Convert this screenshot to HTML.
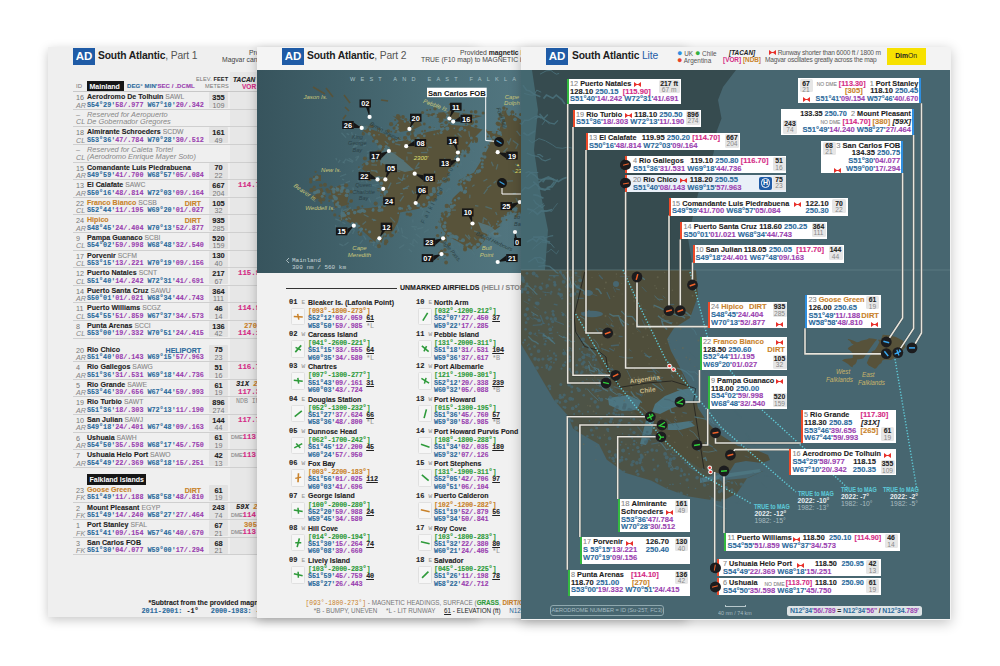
<!DOCTYPE html><html><head><meta charset="utf-8"><style>
*{margin:0;padding:0;box-sizing:border-box}
html,body{width:1000px;height:666px;overflow:hidden;background:#fff;font-family:"Liberation Sans",sans-serif;color:#1d1d1d}
.pg{position:absolute;overflow:hidden;background:#efefef}
.a{position:absolute;white-space:nowrap;line-height:1}
.m{font-family:"Liberation Mono",monospace}
.b{font-weight:bold;-webkit-text-stroke:.1px currentColor}
.cb{color:#2b6a9c}.cp{color:#9a3fb0}.cm{color:#d42a84}.co{color:#c9822a}.cg{color:#2e9a3a}.cgr{color:#8a8a8a}
.ad{position:absolute;width:22px;height:17px;background:#1f5ba6;color:#fff;font-weight:bold;font-size:11.5px;line-height:17px;text-align:center}
.ttl{position:absolute;font-size:10.3px;letter-spacing:-.15px;font-weight:bold;white-space:nowrap;line-height:1;color:#1d1d1d}
.ttl span{font-weight:normal;color:#555}
</style></head><body>
<div class="pg" style="left:48px;top:47px;width:430px;height:570px;box-shadow:0 3px 10px rgba(0,0,0,.22);background:#efefef">
<div class="a" style="left:182px;top:25px;width:60px;height:483px;background:#e7e7e7"></div>
<div class="ad" style="left:25px;top:1px">AD</div>
<div class="ttl" style="left:50px;top:3.5px">South Atlantic<span>, Part 1</span></div>
<div class="a " style="left:201.0px;top:2.5px;font-size:6.8px;color:#444">Pro</div>
<div class="a " style="left:174.0px;top:10.0px;font-size:6.8px;color:#444">Magvar cann</div>
<div class="a " style="left:28.0px;top:36.0px;font-size:6px;color:#777">ID</div>
<div class="a" style="left:39px;top:34px;width:37px;height:10px;background:#161616"></div>
<div class="a " style="left:41.5px;top:35.6px;font-size:7px;color:#fff;font-weight:bold">Mainland</div>
<div class="a b" style="left:79.0px;top:36.0px;font-size:6px;letter-spacing:.1px"><span class="cb">DEG° MIN'</span><span class="cp">SEC / .DCML</span></div>
<div class="a " style="left:148.0px;top:30.0px;font-size:5.6px;color:#777;letter-spacing:.1px">ELEV. <b style="color:#222">FEET</b></div>
<div class="a " style="left:157.0px;top:37.0px;font-size:5.6px;color:#777;letter-spacing:.1px">METERS</div>
<div class="a b" style="left:185.0px;top:30.0px;font-size:6.5px;color:#222"><i>TACAN</i> <span class="co">N</span></div>
<div class="a b cm" style="left:194.0px;top:37.0px;font-size:6.5px">VOR</div>
<div class="a" style="left:25px;top:43.5px;width:360px;height:1px;background:#c8c8c8"></div>
<div class="a" style="left:25px;top:61.7px;width:360px;height:.8px;background:#cfcfcf"></div>
<div class="a " style="left:28.0px;top:47.2px;font-size:7.2px;color:#777">16</div>
<div class="a " style="left:28.0px;top:54.5px;font-size:7.2px;color:#888;font-style:italic">AR</div>
<div class="a b" style="left:39.0px;top:47.2px;font-size:7.1px;color:#1d1d1d">Aerodromo De Tolhuin <span style="font-weight:normal;color:#888;font-size:6.8px">SAWL</span></div>
<div class="a m b" style="left:39.0px;top:54.5px;font-size:6.75px;letter-spacing:-.02px"><span class="cb">S54°29'</span><span class="cp">58/.977</span> <span class="cb">W67°10'</span><span class="cp">20/.342</span></div>
<div class="a" style="left:161px;top:45.1px;width:19px;height:16px;background:#e2e2e2;border-radius:1px"></div>
<div class="a b" style="left:-48.0px;top:46.9px;font-size:7.4px;color:#1d1d1d;left:161px;width:19px;text-align:center">355</div>
<div class="a " style="left:-48.0px;top:54.5px;font-size:7.2px;color:#777;left:161px;width:19px;text-align:center">109</div>
<div class="a" style="left:25px;top:79.3px;width:360px;height:.8px;background:#cfcfcf"></div>
<div class="a " style="left:28.0px;top:63.7px;font-size:7.2px;color:#888">–</div>
<div class="a " style="left:28.0px;top:71.4px;font-size:7.2px;color:#888;font-style:italic">CL</div>
<div class="a " style="left:39.0px;top:63.5px;font-size:7.4px;color:#888;font-style:italic">Reserved for Aeropuerto</div>
<div class="a " style="left:39.0px;top:71.2px;font-size:7.4px;color:#888;font-style:italic">De Gobernador Gregores</div>
<div class="a" style="left:25px;top:96.9px;width:360px;height:.8px;background:#cfcfcf"></div>
<div class="a " style="left:28.0px;top:82.4px;font-size:7.2px;color:#777">18</div>
<div class="a " style="left:28.0px;top:89.7px;font-size:7.2px;color:#888;font-style:italic">CL</div>
<div class="a b" style="left:39.0px;top:82.4px;font-size:7.1px;color:#1d1d1d">Almirante Schroeders <span style="font-weight:normal;color:#888;font-size:6.8px">SCDW</span></div>
<div class="a m b" style="left:39.0px;top:89.7px;font-size:6.75px;letter-spacing:-.02px"><span class="cb">S53°36'</span><span class="cp">47/.784</span> <span class="cb">W70°28'</span><span class="cp">30/.512</span></div>
<div class="a" style="left:161px;top:80.3px;width:19px;height:16px;background:#e2e2e2;border-radius:1px"></div>
<div class="a b" style="left:-48.0px;top:82.1px;font-size:7.4px;color:#1d1d1d;left:161px;width:19px;text-align:center">161</div>
<div class="a " style="left:-48.0px;top:89.7px;font-size:7.2px;color:#777;left:161px;width:19px;text-align:center">49</div>
<div class="a" style="left:25px;top:114.5px;width:360px;height:.8px;background:#cfcfcf"></div>
<div class="a " style="left:28.0px;top:98.9px;font-size:7.2px;color:#888">–</div>
<div class="a " style="left:28.0px;top:106.6px;font-size:7.2px;color:#888;font-style:italic">CL</div>
<div class="a " style="left:39.0px;top:98.7px;font-size:7.4px;color:#888;font-style:italic">Reserved for Caleta Tortel</div>
<div class="a " style="left:39.0px;top:106.4px;font-size:7.4px;color:#888;font-style:italic">(Aerodromo Enrique Mayer Soto)</div>
<div class="a" style="left:25px;top:132.1px;width:360px;height:.8px;background:#cfcfcf"></div>
<div class="a " style="left:28.0px;top:117.6px;font-size:7.2px;color:#777">15</div>
<div class="a " style="left:28.0px;top:124.9px;font-size:7.2px;color:#888;font-style:italic">AR</div>
<div class="a b" style="left:39.0px;top:117.6px;font-size:7.1px;color:#1d1d1d">Comandante Luis Piedrabuena</div>
<div class="a m b" style="left:39.0px;top:124.9px;font-size:6.75px;letter-spacing:-.02px"><span class="cb">S49°59'</span><span class="cp">41/.700</span> <span class="cb">W68°57'</span><span class="cp">05/.084</span></div>
<div class="a" style="left:161px;top:115.5px;width:19px;height:16px;background:#e2e2e2;border-radius:1px"></div>
<div class="a b" style="left:-48.0px;top:117.3px;font-size:7.4px;color:#1d1d1d;left:161px;width:19px;text-align:center">70</div>
<div class="a " style="left:-48.0px;top:124.9px;font-size:7.2px;color:#777;left:161px;width:19px;text-align:center">22</div>
<div class="a" style="left:25px;top:149.7px;width:360px;height:.8px;background:#cfcfcf"></div>
<div class="a " style="left:28.0px;top:135.2px;font-size:7.2px;color:#777">13</div>
<div class="a " style="left:28.0px;top:142.5px;font-size:7.2px;color:#888;font-style:italic">AR</div>
<div class="a b" style="left:39.0px;top:135.2px;font-size:7.1px;color:#1d1d1d">El Calafate <span style="font-weight:normal;color:#888;font-size:6.8px">SAWC</span></div>
<div class="a m b" style="left:39.0px;top:142.5px;font-size:6.75px;letter-spacing:-.02px"><span class="cb">S50°16'</span><span class="cp">48/.814</span> <span class="cb">W72°03'</span><span class="cp">09/.164</span></div>
<div class="a" style="left:161px;top:133.1px;width:19px;height:16px;background:#e2e2e2;border-radius:1px"></div>
<div class="a b" style="left:-48.0px;top:134.9px;font-size:7.4px;color:#1d1d1d;left:161px;width:19px;text-align:center">667</div>
<div class="a " style="left:-48.0px;top:142.5px;font-size:7.2px;color:#777;left:161px;width:19px;text-align:center">204</div>
<div class="a b m cm" style="left:190.0px;top:134.8px;font-size:7.4px">114.7</div>
<div class="a" style="left:25px;top:167.3px;width:360px;height:.8px;background:#cfcfcf"></div>
<div class="a " style="left:28.0px;top:152.8px;font-size:7.2px;color:#777">22</div>
<div class="a " style="left:28.0px;top:160.1px;font-size:7.2px;color:#888;font-style:italic">CL</div>
<div class="a b" style="left:39.0px;top:152.8px;font-size:7.1px;color:#c8822a">Franco Bianco <span style="font-weight:normal;color:#888;font-size:6.8px">SCSB</span></div>
<div class="a b" style="left:-48.0px;top:152.8px;font-size:7px;color:#c8822a;left:auto;right:277.0px">DIRT</div>
<div class="a m b" style="left:39.0px;top:160.1px;font-size:6.75px;letter-spacing:-.02px"><span class="cb">S52°44'</span><span class="cp">11/.195</span> <span class="cb">W69°20'</span><span class="cp">01/.027</span></div>
<div class="a" style="left:161px;top:150.7px;width:19px;height:16px;background:#e2e2e2;border-radius:1px"></div>
<div class="a b" style="left:-48.0px;top:152.5px;font-size:7.4px;color:#1d1d1d;left:161px;width:19px;text-align:center">105</div>
<div class="a " style="left:-48.0px;top:160.1px;font-size:7.2px;color:#777;left:161px;width:19px;text-align:center">32</div>
<div class="a" style="left:25px;top:184.9px;width:360px;height:.8px;background:#cfcfcf"></div>
<div class="a " style="left:28.0px;top:170.4px;font-size:7.2px;color:#777">24</div>
<div class="a " style="left:28.0px;top:177.7px;font-size:7.2px;color:#888;font-style:italic">AR</div>
<div class="a b" style="left:39.0px;top:170.4px;font-size:7.1px;color:#c8822a">Hipico</div>
<div class="a b" style="left:-48.0px;top:170.4px;font-size:7px;color:#c8822a;left:auto;right:277.0px">DIRT</div>
<div class="a m b" style="left:39.0px;top:177.7px;font-size:6.75px;letter-spacing:-.02px"><span class="cb">S48°45'</span><span class="cp">24/.404</span> <span class="cb">W70°13'</span><span class="cp">52/.877</span></div>
<div class="a" style="left:161px;top:168.3px;width:19px;height:16px;background:#e2e2e2;border-radius:1px"></div>
<div class="a b" style="left:-48.0px;top:170.1px;font-size:7.4px;color:#1d1d1d;left:161px;width:19px;text-align:center">935</div>
<div class="a " style="left:-48.0px;top:177.7px;font-size:7.2px;color:#777;left:161px;width:19px;text-align:center">285</div>
<div class="a" style="left:25px;top:202.5px;width:360px;height:.8px;background:#cfcfcf"></div>
<div class="a " style="left:28.0px;top:188.0px;font-size:7.2px;color:#777">9</div>
<div class="a " style="left:28.0px;top:195.3px;font-size:7.2px;color:#888;font-style:italic">CL</div>
<div class="a b" style="left:39.0px;top:188.0px;font-size:7.1px;color:#1d1d1d">Pampa Guanaco <span style="font-weight:normal;color:#888;font-size:6.8px">SCBI</span></div>
<div class="a m b" style="left:39.0px;top:195.3px;font-size:6.75px;letter-spacing:-.02px"><span class="cb">S54°02'</span><span class="cp">59/.998</span> <span class="cb">W68°48'</span><span class="cp">32/.540</span></div>
<div class="a" style="left:161px;top:185.9px;width:19px;height:16px;background:#e2e2e2;border-radius:1px"></div>
<div class="a b" style="left:-48.0px;top:187.7px;font-size:7.4px;color:#1d1d1d;left:161px;width:19px;text-align:center">520</div>
<div class="a " style="left:-48.0px;top:195.3px;font-size:7.2px;color:#777;left:161px;width:19px;text-align:center">159</div>
<div class="a" style="left:25px;top:220.1px;width:360px;height:.8px;background:#cfcfcf"></div>
<div class="a " style="left:28.0px;top:205.6px;font-size:7.2px;color:#777">17</div>
<div class="a " style="left:28.0px;top:212.9px;font-size:7.2px;color:#888;font-style:italic">CL</div>
<div class="a b" style="left:39.0px;top:205.6px;font-size:7.1px;color:#1d1d1d">Porvenir <span style="font-weight:normal;color:#888;font-size:6.8px">SCFM</span></div>
<div class="a m b" style="left:39.0px;top:212.9px;font-size:6.75px;letter-spacing:-.02px"><span class="cb">S53°15'</span><span class="cp">13/.221</span> <span class="cb">W70°19'</span><span class="cp">09/.156</span></div>
<div class="a" style="left:161px;top:203.5px;width:19px;height:16px;background:#e2e2e2;border-radius:1px"></div>
<div class="a b" style="left:-48.0px;top:205.3px;font-size:7.4px;color:#1d1d1d;left:161px;width:19px;text-align:center">130</div>
<div class="a " style="left:-48.0px;top:212.9px;font-size:7.2px;color:#777;left:161px;width:19px;text-align:center">40</div>
<div class="a" style="left:25px;top:237.7px;width:360px;height:.8px;background:#cfcfcf"></div>
<div class="a " style="left:28.0px;top:223.2px;font-size:7.2px;color:#777">12</div>
<div class="a " style="left:28.0px;top:230.5px;font-size:7.2px;color:#888;font-style:italic">CL</div>
<div class="a b" style="left:39.0px;top:223.2px;font-size:7.1px;color:#1d1d1d">Puerto Natales <span style="font-weight:normal;color:#888;font-size:6.8px">SCNT</span></div>
<div class="a m b" style="left:39.0px;top:230.5px;font-size:6.75px;letter-spacing:-.02px"><span class="cb">S51°40'</span><span class="cp">14/.242</span> <span class="cb">W72°31'</span><span class="cp">41/.691</span></div>
<div class="a" style="left:161px;top:221.1px;width:19px;height:16px;background:#e2e2e2;border-radius:1px"></div>
<div class="a b" style="left:-48.0px;top:222.9px;font-size:7.4px;color:#1d1d1d;left:161px;width:19px;text-align:center">217</div>
<div class="a " style="left:-48.0px;top:230.5px;font-size:7.2px;color:#777;left:161px;width:19px;text-align:center">67</div>
<div class="a b m cm" style="left:190.0px;top:222.8px;font-size:7.4px">115.9</div>
<div class="a" style="left:25px;top:255.3px;width:360px;height:.8px;background:#cfcfcf"></div>
<div class="a " style="left:28.0px;top:240.8px;font-size:7.2px;color:#777">14</div>
<div class="a " style="left:28.0px;top:248.1px;font-size:7.2px;color:#888;font-style:italic">AR</div>
<div class="a b" style="left:39.0px;top:240.8px;font-size:7.1px;color:#1d1d1d">Puerto Santa Cruz <span style="font-weight:normal;color:#888;font-size:6.8px">SAWU</span></div>
<div class="a m b" style="left:39.0px;top:248.1px;font-size:6.75px;letter-spacing:-.02px"><span class="cb">S50°01'</span><span class="cp">01/.021</span> <span class="cb">W68°34'</span><span class="cp">44/.743</span></div>
<div class="a" style="left:161px;top:238.7px;width:19px;height:16px;background:#e2e2e2;border-radius:1px"></div>
<div class="a b" style="left:-48.0px;top:240.5px;font-size:7.4px;color:#1d1d1d;left:161px;width:19px;text-align:center">364</div>
<div class="a " style="left:-48.0px;top:248.1px;font-size:7.2px;color:#777;left:161px;width:19px;text-align:center">111</div>
<div class="a" style="left:25px;top:272.9px;width:360px;height:.8px;background:#cfcfcf"></div>
<div class="a " style="left:28.0px;top:258.4px;font-size:7.2px;color:#777">11</div>
<div class="a " style="left:28.0px;top:265.7px;font-size:7.2px;color:#888;font-style:italic">CL</div>
<div class="a b" style="left:39.0px;top:258.4px;font-size:7.1px;color:#1d1d1d">Puerto Williams <span style="font-weight:normal;color:#888;font-size:6.8px">SCGZ</span></div>
<div class="a m b" style="left:39.0px;top:265.7px;font-size:6.75px;letter-spacing:-.02px"><span class="cb">S54°55'</span><span class="cp">51/.859</span> <span class="cb">W67°37'</span><span class="cp">34/.573</span></div>
<div class="a" style="left:161px;top:256.3px;width:19px;height:16px;background:#e2e2e2;border-radius:1px"></div>
<div class="a b" style="left:-48.0px;top:258.1px;font-size:7.4px;color:#1d1d1d;left:161px;width:19px;text-align:center">46</div>
<div class="a " style="left:-48.0px;top:265.7px;font-size:7.2px;color:#777;left:161px;width:19px;text-align:center">14</div>
<div class="a b m cm" style="left:190.0px;top:258.0px;font-size:7.4px">114.9</div>
<div class="a" style="left:25px;top:290.5px;width:360px;height:.8px;background:#cfcfcf"></div>
<div class="a " style="left:28.0px;top:276.0px;font-size:7.2px;color:#777">8</div>
<div class="a " style="left:28.0px;top:283.3px;font-size:7.2px;color:#888;font-style:italic">CL</div>
<div class="a b" style="left:39.0px;top:276.0px;font-size:7.1px;color:#1d1d1d">Punta Arenas <span style="font-weight:normal;color:#888;font-size:6.8px">SCCI</span></div>
<div class="a m b" style="left:39.0px;top:283.3px;font-size:6.75px;letter-spacing:-.02px"><span class="cb">S53°00'</span><span class="cp">19/.332</span> <span class="cb">W70°51'</span><span class="cp">24/.415</span></div>
<div class="a" style="left:161px;top:273.9px;width:19px;height:16px;background:#e2e2e2;border-radius:1px"></div>
<div class="a b" style="left:-48.0px;top:275.7px;font-size:7.4px;color:#1d1d1d;left:161px;width:19px;text-align:center">136</div>
<div class="a " style="left:-48.0px;top:283.3px;font-size:7.2px;color:#777;left:161px;width:19px;text-align:center">42</div>
<div class="a b m co" style="left:196.0px;top:275.6px;font-size:7.2px">270</div>
<div class="a b m cm" style="left:190.0px;top:283.0px;font-size:7.4px">114.1</div>
<div class="a" style="left:25px;top:314.1px;width:360px;height:.8px;background:#cfcfcf"></div>
<div class="a " style="left:28.0px;top:299.6px;font-size:7.2px;color:#777">20</div>
<div class="a " style="left:28.0px;top:306.9px;font-size:7.2px;color:#888;font-style:italic">AR</div>
<div class="a b" style="left:39.0px;top:299.6px;font-size:7.1px;color:#1d1d1d">Rio Chico</div>
<div class="a b" style="left:-48.0px;top:299.6px;font-size:7px;color:#2b6a9c;left:auto;right:277.0px">HELIPORT</div>
<div class="a m b" style="left:39.0px;top:306.9px;font-size:6.75px;letter-spacing:-.02px"><span class="cb">S51°40'</span><span class="cp">08/.143</span> <span class="cb">W69°15'</span><span class="cp">57/.963</span></div>
<div class="a" style="left:161px;top:297.5px;width:19px;height:16px;background:#e2e2e2;border-radius:1px"></div>
<div class="a b" style="left:-48.0px;top:299.3px;font-size:7.4px;color:#1d1d1d;left:161px;width:19px;text-align:center">75</div>
<div class="a " style="left:-48.0px;top:306.9px;font-size:7.2px;color:#777;left:161px;width:19px;text-align:center">23</div>
<div class="a" style="left:25px;top:331.7px;width:360px;height:.8px;background:#cfcfcf"></div>
<div class="a " style="left:28.0px;top:317.2px;font-size:7.2px;color:#777">4</div>
<div class="a " style="left:28.0px;top:324.5px;font-size:7.2px;color:#888;font-style:italic">AR</div>
<div class="a b" style="left:39.0px;top:317.2px;font-size:7.1px;color:#1d1d1d">Rio Gallegos <span style="font-weight:normal;color:#888;font-size:6.8px">SAWG</span></div>
<div class="a m b" style="left:39.0px;top:324.5px;font-size:6.75px;letter-spacing:-.02px"><span class="cb">S51°36'</span><span class="cp">31/.531</span> <span class="cb">W69°18'</span><span class="cp">44/.736</span></div>
<div class="a" style="left:161px;top:315.1px;width:19px;height:16px;background:#e2e2e2;border-radius:1px"></div>
<div class="a b" style="left:-48.0px;top:316.9px;font-size:7.4px;color:#1d1d1d;left:161px;width:19px;text-align:center">51</div>
<div class="a " style="left:-48.0px;top:324.5px;font-size:7.2px;color:#777;left:161px;width:19px;text-align:center">16</div>
<div class="a b m cm" style="left:190.0px;top:316.8px;font-size:7.4px">116.7</div>
<div class="a" style="left:25px;top:349.3px;width:360px;height:.8px;background:#cfcfcf"></div>
<div class="a " style="left:28.0px;top:334.8px;font-size:7.2px;color:#777">5</div>
<div class="a " style="left:28.0px;top:342.1px;font-size:7.2px;color:#888;font-style:italic">AR</div>
<div class="a b" style="left:39.0px;top:334.8px;font-size:7.1px;color:#1d1d1d">Rio Grande <span style="font-weight:normal;color:#888;font-size:6.8px">SAWE</span></div>
<div class="a m b" style="left:39.0px;top:342.1px;font-size:6.75px;letter-spacing:-.02px"><span class="cb">S53°46'</span><span class="cp">39/.656</span> <span class="cb">W67°44'</span><span class="cp">59/.993</span></div>
<div class="a" style="left:161px;top:332.7px;width:19px;height:16px;background:#e2e2e2;border-radius:1px"></div>
<div class="a b" style="left:-48.0px;top:334.5px;font-size:7.4px;color:#1d1d1d;left:161px;width:19px;text-align:center">61</div>
<div class="a " style="left:-48.0px;top:342.1px;font-size:7.2px;color:#777;left:161px;width:19px;text-align:center">19</div>
<div class="a b m" style="left:188.0px;top:334.4px;font-size:7.2px;font-style:italic;color:#222">31X <span class="co">2</span></div>
<div class="a b m cm" style="left:190.0px;top:341.8px;font-size:7.4px">117.3</div>
<div class="a" style="left:25px;top:366.9px;width:360px;height:.8px;background:#cfcfcf"></div>
<div class="a " style="left:28.0px;top:352.4px;font-size:7.2px;color:#777">19</div>
<div class="a " style="left:28.0px;top:359.7px;font-size:7.2px;color:#888;font-style:italic">AR</div>
<div class="a b" style="left:39.0px;top:352.4px;font-size:7.1px;color:#1d1d1d">Rio Turbio <span style="font-weight:normal;color:#888;font-size:6.8px">SAWT</span></div>
<div class="a m b" style="left:39.0px;top:359.7px;font-size:6.75px;letter-spacing:-.02px"><span class="cb">S51°36'</span><span class="cp">18/.303</span> <span class="cb">W72°13'</span><span class="cp">11/.190</span></div>
<div class="a" style="left:161px;top:350.3px;width:19px;height:16px;background:#e2e2e2;border-radius:1px"></div>
<div class="a b" style="left:-48.0px;top:352.1px;font-size:7.4px;color:#1d1d1d;left:161px;width:19px;text-align:center">896</div>
<div class="a " style="left:-48.0px;top:359.7px;font-size:7.2px;color:#777;left:161px;width:19px;text-align:center">274</div>
<div class="a m" style="left:188.0px;top:352.0px;font-size:6.6px;color:#888">NDB IN</div>
<div class="a" style="left:25px;top:384.5px;width:360px;height:.8px;background:#cfcfcf"></div>
<div class="a " style="left:28.0px;top:370.0px;font-size:7.2px;color:#777">10</div>
<div class="a " style="left:28.0px;top:377.3px;font-size:7.2px;color:#888;font-style:italic">AR</div>
<div class="a b" style="left:39.0px;top:370.0px;font-size:7.1px;color:#1d1d1d">San Julian <span style="font-weight:normal;color:#888;font-size:6.8px">SAWJ</span></div>
<div class="a m b" style="left:39.0px;top:377.3px;font-size:6.75px;letter-spacing:-.02px"><span class="cb">S49°18'</span><span class="cp">24/.401</span> <span class="cb">W67°48'</span><span class="cp">09/.163</span></div>
<div class="a" style="left:161px;top:367.9px;width:19px;height:16px;background:#e2e2e2;border-radius:1px"></div>
<div class="a b" style="left:-48.0px;top:369.7px;font-size:7.4px;color:#1d1d1d;left:161px;width:19px;text-align:center">144</div>
<div class="a " style="left:-48.0px;top:377.3px;font-size:7.2px;color:#777;left:161px;width:19px;text-align:center">44</div>
<div class="a b m cm" style="left:190.0px;top:369.6px;font-size:7.4px">117.7</div>
<div class="a" style="left:25px;top:402.1px;width:360px;height:.8px;background:#cfcfcf"></div>
<div class="a " style="left:28.0px;top:387.6px;font-size:7.2px;color:#777">6</div>
<div class="a " style="left:28.0px;top:394.9px;font-size:7.2px;color:#888;font-style:italic">AR</div>
<div class="a b" style="left:39.0px;top:387.6px;font-size:7.1px;color:#1d1d1d">Ushuaia <span style="font-weight:normal;color:#888;font-size:6.8px">SAWH</span></div>
<div class="a m b" style="left:39.0px;top:394.9px;font-size:6.75px;letter-spacing:-.02px"><span class="cb">S54°50'</span><span class="cp">35/.598</span> <span class="cb">W68°17'</span><span class="cp">45/.750</span></div>
<div class="a" style="left:161px;top:385.5px;width:19px;height:16px;background:#e2e2e2;border-radius:1px"></div>
<div class="a b" style="left:-48.0px;top:387.3px;font-size:7.4px;color:#1d1d1d;left:161px;width:19px;text-align:center">61</div>
<div class="a " style="left:-48.0px;top:394.9px;font-size:7.2px;color:#777;left:161px;width:19px;text-align:center">19</div>
<div class="a b m" style="left:183.0px;top:387.2px;font-size:7.4px"><span style="color:#888;font-size:5.2px;font-weight:normal;font-family:Liberation Sans">DME</span><span class="cm">113</span></div>
<div class="a" style="left:25px;top:419.7px;width:360px;height:.8px;background:#cfcfcf"></div>
<div class="a " style="left:28.0px;top:405.2px;font-size:7.2px;color:#777">7</div>
<div class="a " style="left:28.0px;top:412.5px;font-size:7.2px;color:#888;font-style:italic">AR</div>
<div class="a b" style="left:39.0px;top:405.2px;font-size:7.1px;color:#1d1d1d">Ushuaia Helo Port <span style="font-weight:normal;color:#888;font-size:6.8px">SAWO</span></div>
<div class="a m b" style="left:39.0px;top:412.5px;font-size:6.75px;letter-spacing:-.02px"><span class="cb">S54°49'</span><span class="cp">22/.369</span> <span class="cb">W68°18'</span><span class="cp">15/.251</span></div>
<div class="a" style="left:161px;top:403.1px;width:19px;height:16px;background:#e2e2e2;border-radius:1px"></div>
<div class="a b" style="left:-48.0px;top:404.9px;font-size:7.4px;color:#1d1d1d;left:161px;width:19px;text-align:center">42</div>
<div class="a " style="left:-48.0px;top:412.5px;font-size:7.2px;color:#777;left:161px;width:19px;text-align:center">13</div>
<div class="a b m" style="left:183.0px;top:404.8px;font-size:7.4px"><span style="color:#888;font-size:5.2px;font-weight:normal;font-family:Liberation Sans">DME</span><span class="cm">113</span></div>
<div class="a" style="left:25px;top:454.5px;width:360px;height:.8px;background:#cfcfcf"></div>
<div class="a " style="left:28.0px;top:440.0px;font-size:7.2px;color:#777">23</div>
<div class="a " style="left:28.0px;top:447.3px;font-size:7.2px;color:#888;font-style:italic">FK</div>
<div class="a b" style="left:39.0px;top:440.0px;font-size:7.1px;color:#c8822a">Goose Green</div>
<div class="a b" style="left:-48.0px;top:440.0px;font-size:7px;color:#c8822a;left:auto;right:277.0px">DIRT</div>
<div class="a m b" style="left:39.0px;top:447.3px;font-size:6.75px;letter-spacing:-.02px"><span class="cb">S51°49'</span><span class="cp">11/.188</span> <span class="cb">W58°58'</span><span class="cp">48/.810</span></div>
<div class="a" style="left:161px;top:437.9px;width:19px;height:16px;background:#e2e2e2;border-radius:1px"></div>
<div class="a b" style="left:-48.0px;top:439.7px;font-size:7.4px;color:#1d1d1d;left:161px;width:19px;text-align:center">61</div>
<div class="a " style="left:-48.0px;top:447.3px;font-size:7.2px;color:#777;left:161px;width:19px;text-align:center">19</div>
<div class="a" style="left:25px;top:472.1px;width:360px;height:.8px;background:#cfcfcf"></div>
<div class="a " style="left:28.0px;top:457.6px;font-size:7.2px;color:#777">2</div>
<div class="a " style="left:28.0px;top:464.9px;font-size:7.2px;color:#888;font-style:italic">FK</div>
<div class="a b" style="left:39.0px;top:457.6px;font-size:7.1px;color:#1d1d1d">Mount Pleasant <span style="font-weight:normal;color:#888;font-size:6.8px">EGYP</span></div>
<div class="a m b" style="left:39.0px;top:464.9px;font-size:6.75px;letter-spacing:-.02px"><span class="cb">S51°49'</span><span class="cp">14/.240</span> <span class="cb">W58°27'</span><span class="cp">27/.464</span></div>
<div class="a" style="left:161px;top:455.5px;width:19px;height:16px;background:#e2e2e2;border-radius:1px"></div>
<div class="a b" style="left:-48.0px;top:457.3px;font-size:7.4px;color:#1d1d1d;left:161px;width:19px;text-align:center">243</div>
<div class="a " style="left:-48.0px;top:464.9px;font-size:7.2px;color:#777;left:161px;width:19px;text-align:center">74</div>
<div class="a b m" style="left:188.0px;top:457.2px;font-size:7.2px;font-style:italic;color:#222">59X <span class="co">2</span></div>
<div class="a b m" style="left:183.0px;top:464.6px;font-size:7.4px"><span style="color:#888;font-size:5.2px;font-weight:normal;font-family:Liberation Sans">DME</span><span class="cm">114</span></div>
<div class="a" style="left:25px;top:489.7px;width:360px;height:.8px;background:#cfcfcf"></div>
<div class="a " style="left:28.0px;top:475.2px;font-size:7.2px;color:#777">1</div>
<div class="a " style="left:28.0px;top:482.5px;font-size:7.2px;color:#888;font-style:italic">FK</div>
<div class="a b" style="left:39.0px;top:475.2px;font-size:7.1px;color:#1d1d1d">Port Stanley <span style="font-weight:normal;color:#888;font-size:6.8px">SFAL</span></div>
<div class="a m b" style="left:39.0px;top:482.5px;font-size:6.75px;letter-spacing:-.02px"><span class="cb">S51°41'</span><span class="cp">09/.154</span> <span class="cb">W57°46'</span><span class="cp">40/.670</span></div>
<div class="a" style="left:161px;top:473.1px;width:19px;height:16px;background:#e2e2e2;border-radius:1px"></div>
<div class="a b" style="left:-48.0px;top:474.9px;font-size:7.4px;color:#1d1d1d;left:161px;width:19px;text-align:center">67</div>
<div class="a " style="left:-48.0px;top:482.5px;font-size:7.2px;color:#777;left:161px;width:19px;text-align:center">21</div>
<div class="a b m co" style="left:196.0px;top:474.8px;font-size:7.2px">305</div>
<div class="a b m" style="left:183.0px;top:482.2px;font-size:7.4px"><span style="color:#888;font-size:5.2px;font-weight:normal;font-family:Liberation Sans">DME</span><span class="cm">113</span></div>
<div class="a" style="left:25px;top:507.3px;width:360px;height:.8px;background:#cfcfcf"></div>
<div class="a " style="left:28.0px;top:492.8px;font-size:7.2px;color:#777">3</div>
<div class="a " style="left:28.0px;top:500.1px;font-size:7.2px;color:#888;font-style:italic">FK</div>
<div class="a b" style="left:39.0px;top:492.8px;font-size:7.1px;color:#1d1d1d">San Carlos FOB</div>
<div class="a m b" style="left:39.0px;top:500.1px;font-size:6.75px;letter-spacing:-.02px"><span class="cb">S51°30'</span><span class="cp">04/.077</span> <span class="cb">W59°00'</span><span class="cp">17/.294</span></div>
<div class="a" style="left:161px;top:490.7px;width:19px;height:16px;background:#e2e2e2;border-radius:1px"></div>
<div class="a b" style="left:-48.0px;top:492.5px;font-size:7.4px;color:#1d1d1d;left:161px;width:19px;text-align:center">68</div>
<div class="a " style="left:-48.0px;top:500.1px;font-size:7.2px;color:#777;left:161px;width:19px;text-align:center">21</div>
<div class="a" style="left:39px;top:427px;width:59px;height:10.5px;background:#161616"></div>
<div class="a " style="left:41.5px;top:428.8px;font-size:7px;color:#fff;font-weight:bold">Falkland Islands</div>
<div class="a b" style="left:100.5px;top:552.6px;font-size:6.8px;color:#222">*Subtract from the provided magnetic headings</div>
<div class="a m b" style="left:93.5px;top:560.8px;font-size:6.8px;color:#222"><span class="cb">2011-2001:</span> -1°&nbsp;&nbsp;&nbsp;<span class="cb">2000-1983:</span> -2°</div>
</div>
<div class="pg" style="left:257px;top:47px;width:430px;height:571px;box-shadow:0 3px 10px rgba(0,0,0,.25);background:#f1f1f1">
<div class="a" style="left:0;top:0;width:430px;height:23px;background:#f4f4f4"></div>
<div class="ad" style="left:25px;top:1px">AD</div>
<div class="ttl" style="left:50px;top:3.5px">South Atlantic<span>, Part 2</span></div>
<div class="a " style="left:203.0px;top:2.7px;font-size:6.8px;color:#444">Provided <b style="color:#1d1d1d">magnetic headings</b></div>
<div class="a " style="left:164.0px;top:10.0px;font-size:6.8px;color:#444">TRUE (F10 map) to MAGNETIC in 2022</div>
<svg class="a" style="left:0;top:23px" width="430" height="203" viewBox="0 0 430 203">
<defs><linearGradient id="g2" x1="0" x2="1" y1="0" y2="0"><stop offset="0" stop-color="#37545d"/><stop offset="0.4" stop-color="#4a6d76"/><stop offset="0.62" stop-color="#527680"/><stop offset="1" stop-color="#5b828b"/></linearGradient></defs>
<rect width="430" height="203" fill="url(#g2)"/>
<polygon points="104.6,58.4 107.0,57.3 117.7,60.5 129.0,64.7 142.0,71.0 150.0,70.0 159.8,64.7 172.4,61.5 183.0,59.4 192.0,54.7 212.0,56.3 225.5,59.6 215.6,69.5 204.0,86.0 197.0,96.0 189.0,109.0 185.0,113.0 179.0,124.0 169.5,137.0 158.0,139.6 143.0,142.4 141.0,152.0 136.0,161.0 127.0,166.4 123.8,174.0 117.0,171.0 105.7,161.0 92.5,152.7 81.0,146.0 88.0,142.0 92.5,139.5 112.0,138.0 125.0,136.0 126.0,126.0 122.0,112.0 115.0,106.0 105.0,99.0 108.0,93.0 118.0,87.0 129.0,80.0 121.0,76.0 114.5,65.7 107.0,61.5" fill="#58533a"/>
<polygon points="228.8,61.0 242.0,61.0 248.6,39.8 264.0,49.7 283.0,49.0 283.0,144.0 264.0,144.0 257.0,142.4 247.0,146.7 243.0,156.5 233.0,163.6 221.7,177.7 216.0,180.5 199.0,170.6 190.7,166.4 183.6,156.5 186.5,148.0 196.0,128.0 206.0,118.5 202.0,110.0 217.0,102.5 227.0,86.0 235.4,69.5" fill="#58533a"/>
<polygon points="168.0,44.0 193.0,41.5 225.0,46.0 213.0,49.5 183.0,48.5" fill="#58533a"/>
<polygon points="135.6,45.8 148.0,51.0 163.0,52.0 165.0,55.2 156.6,59.4 146.0,61.5 138.7,62.6 137.7,56.3 141.9,51.0" fill="#58533a"/>
<polygon points="73.0,120.0 83.0,115.0 92.0,122.0 90.0,135.0 78.0,138.0" fill="#58533a"/>
<polygon points="56.0,106.0 64.0,105.0 64.0,111.0 57.0,111.0" fill="#58533a"/>
<polygon points="56.0,120.0 65.0,118.0 69.0,127.0 61.0,129.0" fill="#58533a"/>
<polygon points="184.0,162.0 189.0,163.0 190.0,172.0 187.0,177.0 185.0,170.0" fill="#58533a"/>
<polygon points="186.0,182.0 190.0,184.0 188.0,189.0 185.0,187.0" fill="#58533a"/>
<polygon points="129.0,80.0 138.0,84.0 148.0,92.0 157.0,100.0 148.0,102.0 135.0,98.0 123.0,92.0" fill="#567b84" opacity=".8"/>
<polygon points="221.0,152.0 233.0,156.0 245.0,166.0 239.0,168.0 225.0,162.0" fill="#567b84" opacity=".8"/>
<line x1="56" y1="17" x2="68" y2="24" stroke="#58533a" stroke-width="1.6"/>
<line x1="69" y1="18" x2="76" y2="27" stroke="#58533a" stroke-width="1.6"/>
<line x1="87" y1="25" x2="93" y2="33" stroke="#58533a" stroke-width="1.6"/>
<line x1="88" y1="37" x2="92" y2="41" stroke="#58533a" stroke-width="1.6"/>
<line x1="89" y1="45" x2="86" y2="49" stroke="#58533a" stroke-width="1.6"/>
<line x1="124" y1="30" x2="131" y2="31" stroke="#58533a" stroke-width="1.6"/>
<line x1="192" y1="34" x2="198" y2="36" stroke="#58533a" stroke-width="1.6"/>
<circle cx="242.1" cy="48.7" r="1.5" fill="#58533a" opacity=".9"/>
<circle cx="212.2" cy="56.3" r="1.9" fill="#58533a" opacity=".9"/>
<circle cx="112.8" cy="109.4" r="1.8" fill="#58533a" opacity=".9"/>
<circle cx="123.9" cy="125.5" r="0.8" fill="#58533a" opacity=".9"/>
<circle cx="113.0" cy="59.3" r="0.9" fill="#4f727b" opacity=".9"/>
<circle cx="204.4" cy="58.4" r="1.9" fill="#4f727b" opacity=".9"/>
<circle cx="183.7" cy="148.9" r="0.8" fill="#58533a" opacity=".9"/>
<circle cx="91.4" cy="143.2" r="1.7" fill="#4f727b" opacity=".9"/>
<circle cx="147.2" cy="67.3" r="0.9" fill="#58533a" opacity=".9"/>
<circle cx="113.1" cy="60.0" r="1.1" fill="#4f727b" opacity=".9"/>
<circle cx="178.6" cy="45.6" r="1.6" fill="#4f727b" opacity=".9"/>
<circle cx="66.8" cy="123.4" r="1.7" fill="#4f727b" opacity=".9"/>
<circle cx="215.8" cy="70.5" r="1.2" fill="#58533a" opacity=".9"/>
<circle cx="207.3" cy="49.5" r="1.9" fill="#58533a" opacity=".9"/>
<circle cx="76.9" cy="126.7" r="1.9" fill="#4f727b" opacity=".9"/>
<circle cx="198.0" cy="38.1" r="2.0" fill="#58533a" opacity=".9"/>
<circle cx="185.7" cy="187.1" r="1.8" fill="#4f727b" opacity=".9"/>
<circle cx="76.1" cy="130.8" r="1.4" fill="#4f727b" opacity=".9"/>
<circle cx="99.2" cy="153.8" r="1.5" fill="#4f727b" opacity=".9"/>
<circle cx="253.4" cy="142.4" r="1.1" fill="#4f727b" opacity=".9"/>
<circle cx="258.0" cy="139.7" r="1.9" fill="#4f727b" opacity=".9"/>
<circle cx="220.8" cy="101.5" r="2.0" fill="#4f727b" opacity=".9"/>
<circle cx="174.0" cy="124.6" r="1.8" fill="#4f727b" opacity=".9"/>
<circle cx="145.9" cy="46.5" r="1.0" fill="#58533a" opacity=".9"/>
<circle cx="107.3" cy="141.3" r="1.8" fill="#4f727b" opacity=".9"/>
<circle cx="123.5" cy="81.5" r="1.5" fill="#58533a" opacity=".9"/>
<circle cx="249.8" cy="38.9" r="1.1" fill="#58533a" opacity=".9"/>
<circle cx="232.3" cy="65.4" r="0.8" fill="#4f727b" opacity=".9"/>
<circle cx="111.0" cy="104.1" r="2.0" fill="#58533a" opacity=".9"/>
<circle cx="197.8" cy="37.9" r="1.1" fill="#58533a" opacity=".9"/>
<circle cx="102.2" cy="164.0" r="1.3" fill="#58533a" opacity=".9"/>
<circle cx="101.0" cy="141.5" r="1.2" fill="#4f727b" opacity=".9"/>
<circle cx="203.6" cy="45.7" r="1.5" fill="#4f727b" opacity=".9"/>
<circle cx="129.8" cy="65.6" r="1.2" fill="#4f727b" opacity=".9"/>
<circle cx="241.9" cy="62.9" r="1.9" fill="#4f727b" opacity=".9"/>
<circle cx="89.1" cy="115.3" r="2.1" fill="#58533a" opacity=".9"/>
<circle cx="201.1" cy="91.7" r="2.0" fill="#58533a" opacity=".9"/>
<circle cx="80.0" cy="134.4" r="1.9" fill="#4f727b" opacity=".9"/>
<circle cx="181.1" cy="189.2" r="0.9" fill="#58533a" opacity=".9"/>
<circle cx="95.6" cy="139.9" r="0.9" fill="#4f727b" opacity=".9"/>
<circle cx="254.0" cy="143.4" r="1.5" fill="#4f727b" opacity=".9"/>
<circle cx="109.7" cy="57.5" r="2.1" fill="#58533a" opacity=".9"/>
<circle cx="103.9" cy="159.3" r="1.8" fill="#4f727b" opacity=".9"/>
<circle cx="128.9" cy="133.8" r="1.1" fill="#4f727b" opacity=".9"/>
<circle cx="241.3" cy="59.2" r="1.0" fill="#58533a" opacity=".9"/>
<circle cx="206.5" cy="122.6" r="0.8" fill="#4f727b" opacity=".9"/>
<circle cx="209.7" cy="72.7" r="1.2" fill="#4f727b" opacity=".9"/>
<circle cx="186.8" cy="58.8" r="1.0" fill="#4f727b" opacity=".9"/>
<circle cx="127.9" cy="135.0" r="1.8" fill="#4f727b" opacity=".9"/>
<circle cx="146.0" cy="47.0" r="1.9" fill="#58533a" opacity=".9"/>
<circle cx="127.4" cy="134.6" r="2.1" fill="#4f727b" opacity=".9"/>
<circle cx="218.9" cy="56.3" r="1.5" fill="#58533a" opacity=".9"/>
<circle cx="207.3" cy="113.1" r="1.4" fill="#4f727b" opacity=".9"/>
<circle cx="141.2" cy="143.2" r="0.9" fill="#4f727b" opacity=".9"/>
<circle cx="212.3" cy="47.5" r="1.4" fill="#4f727b" opacity=".9"/>
<circle cx="141.0" cy="61.5" r="1.3" fill="#4f727b" opacity=".9"/>
<circle cx="85.4" cy="118.0" r="2.0" fill="#4f727b" opacity=".9"/>
<circle cx="63.9" cy="129.9" r="1.3" fill="#58533a" opacity=".9"/>
<circle cx="227.3" cy="83.8" r="2.1" fill="#58533a" opacity=".9"/>
<circle cx="210.3" cy="108.8" r="1.9" fill="#4f727b" opacity=".9"/>
<circle cx="91.5" cy="139.8" r="1.6" fill="#58533a" opacity=".9"/>
<circle cx="113.9" cy="171.3" r="1.9" fill="#58533a" opacity=".9"/>
<circle cx="192.8" cy="50.4" r="1.5" fill="#58533a" opacity=".9"/>
<circle cx="184.6" cy="181.1" r="1.7" fill="#58533a" opacity=".9"/>
<circle cx="140.9" cy="54.9" r="1.2" fill="#4f727b" opacity=".9"/>
<circle cx="251.9" cy="44.5" r="1.3" fill="#4f727b" opacity=".9"/>
<circle cx="142.8" cy="138.4" r="1.7" fill="#4f727b" opacity=".9"/>
<circle cx="129.2" cy="171.4" r="2.2" fill="#58533a" opacity=".9"/>
<circle cx="216.0" cy="72.1" r="1.0" fill="#58533a" opacity=".9"/>
<circle cx="202.1" cy="111.0" r="0.8" fill="#58533a" opacity=".9"/>
<circle cx="127.7" cy="124.6" r="1.2" fill="#4f727b" opacity=".9"/>
<circle cx="94.0" cy="131.3" r="1.7" fill="#58533a" opacity=".9"/>
<circle cx="148.8" cy="49.4" r="1.5" fill="#58533a" opacity=".9"/>
<circle cx="249.5" cy="149.9" r="0.9" fill="#58533a" opacity=".9"/>
<circle cx="187.9" cy="179.9" r="1.8" fill="#58533a" opacity=".9"/>
<circle cx="119.8" cy="86.9" r="1.0" fill="#4f727b" opacity=".9"/>
<circle cx="104.6" cy="158.9" r="1.5" fill="#4f727b" opacity=".9"/>
<circle cx="205.9" cy="83.2" r="1.2" fill="#4f727b" opacity=".9"/>
<circle cx="259.2" cy="138.5" r="1.5" fill="#4f727b" opacity=".9"/>
<circle cx="90.6" cy="140.2" r="1.8" fill="#58533a" opacity=".9"/>
<circle cx="193.8" cy="93.8" r="0.9" fill="#4f727b" opacity=".9"/>
<circle cx="188.0" cy="110.9" r="1.9" fill="#58533a" opacity=".9"/>
<circle cx="193.1" cy="100.3" r="2.0" fill="#4f727b" opacity=".9"/>
<circle cx="237.3" cy="61.9" r="1.9" fill="#4f727b" opacity=".9"/>
<circle cx="189.8" cy="135.9" r="2.2" fill="#58533a" opacity=".9"/>
<circle cx="194.1" cy="41.6" r="2.0" fill="#58533a" opacity=".9"/>
<circle cx="59.2" cy="122.3" r="1.7" fill="#4f727b" opacity=".9"/>
<circle cx="184.0" cy="123.0" r="2.0" fill="#58533a" opacity=".9"/>
<circle cx="240.7" cy="53.6" r="2.1" fill="#58533a" opacity=".9"/>
<circle cx="139.4" cy="161.9" r="1.7" fill="#58533a" opacity=".9"/>
<circle cx="89.5" cy="125.3" r="1.9" fill="#4f727b" opacity=".9"/>
<circle cx="155.2" cy="56.5" r="1.3" fill="#4f727b" opacity=".9"/>
<circle cx="188.1" cy="173.1" r="2.1" fill="#4f727b" opacity=".9"/>
<circle cx="128.0" cy="122.4" r="1.6" fill="#4f727b" opacity=".9"/>
<circle cx="182.7" cy="182.9" r="1.5" fill="#58533a" opacity=".9"/>
<circle cx="194.0" cy="100.7" r="1.4" fill="#4f727b" opacity=".9"/>
<circle cx="250.8" cy="41.7" r="1.7" fill="#4f727b" opacity=".9"/>
<circle cx="239.3" cy="71.0" r="1.9" fill="#4f727b" opacity=".9"/>
<circle cx="128.7" cy="166.0" r="1.2" fill="#58533a" opacity=".9"/>
<circle cx="152.9" cy="51.8" r="1.1" fill="#4f727b" opacity=".9"/>
<circle cx="111.4" cy="102.7" r="2.0" fill="#4f727b" opacity=".9"/>
<circle cx="109.9" cy="93.6" r="1.8" fill="#4f727b" opacity=".9"/>
<circle cx="139.7" cy="58.2" r="2.1" fill="#4f727b" opacity=".9"/>
<circle cx="209.1" cy="117.8" r="1.1" fill="#4f727b" opacity=".9"/>
<circle cx="82.2" cy="136.5" r="1.8" fill="#4f727b" opacity=".9"/>
<circle cx="101.9" cy="97.1" r="0.9" fill="#58533a" opacity=".9"/>
<circle cx="207.8" cy="122.2" r="1.6" fill="#4f727b" opacity=".9"/>
<circle cx="211.2" cy="78.4" r="1.8" fill="#58533a" opacity=".9"/>
<circle cx="58.6" cy="101.8" r="1.1" fill="#58533a" opacity=".9"/>
<circle cx="55.3" cy="119.6" r="0.8" fill="#58533a" opacity=".9"/>
<circle cx="200.1" cy="169.3" r="1.0" fill="#4f727b" opacity=".9"/>
<circle cx="190.1" cy="184.7" r="1.7" fill="#58533a" opacity=".9"/>
<circle cx="155.1" cy="61.9" r="1.7" fill="#58533a" opacity=".9"/>
<circle cx="193.9" cy="100.0" r="1.8" fill="#4f727b" opacity=".9"/>
<circle cx="184.1" cy="62.4" r="1.5" fill="#4f727b" opacity=".9"/>
<circle cx="224.8" cy="172.0" r="1.3" fill="#4f727b" opacity=".9"/>
<circle cx="179.4" cy="157.5" r="1.4" fill="#58533a" opacity=".9"/>
<circle cx="229.6" cy="167.6" r="1.4" fill="#4f727b" opacity=".9"/>
<circle cx="131.3" cy="61.1" r="1.8" fill="#58533a" opacity=".9"/>
<circle cx="194.8" cy="136.7" r="2.1" fill="#4f727b" opacity=".9"/>
<circle cx="73.6" cy="127.2" r="2.2" fill="#58533a" opacity=".9"/>
<circle cx="134.2" cy="165.4" r="2.0" fill="#58533a" opacity=".9"/>
<circle cx="225.2" cy="93.9" r="1.5" fill="#4f727b" opacity=".9"/>
<circle cx="184.9" cy="151.8" r="0.9" fill="#58533a" opacity=".9"/>
<circle cx="214.4" cy="41.7" r="1.5" fill="#58533a" opacity=".9"/>
<circle cx="217.1" cy="179.2" r="2.0" fill="#4f727b" opacity=".9"/>
<circle cx="152.5" cy="69.5" r="1.5" fill="#4f727b" opacity=".9"/>
<circle cx="208.0" cy="178.9" r="1.6" fill="#58533a" opacity=".9"/>
<circle cx="186.0" cy="162.7" r="1.2" fill="#4f727b" opacity=".9"/>
<circle cx="87.9" cy="145.3" r="1.5" fill="#4f727b" opacity=".9"/>
<circle cx="116.0" cy="90.7" r="2.1" fill="#4f727b" opacity=".9"/>
<circle cx="193.4" cy="163.7" r="1.4" fill="#4f727b" opacity=".9"/>
<circle cx="236.6" cy="67.6" r="1.6" fill="#4f727b" opacity=".9"/>
<circle cx="134.1" cy="54.2" r="2.1" fill="#58533a" opacity=".9"/>
<circle cx="200.2" cy="86.4" r="1.6" fill="#4f727b" opacity=".9"/>
<circle cx="202.8" cy="59.9" r="1.3" fill="#4f727b" opacity=".9"/>
<circle cx="66.5" cy="129.6" r="1.9" fill="#58533a" opacity=".9"/>
<circle cx="72.2" cy="131.0" r="1.0" fill="#58533a" opacity=".9"/>
<circle cx="185.3" cy="165.4" r="2.1" fill="#4f727b" opacity=".9"/>
<circle cx="218.3" cy="103.2" r="1.0" fill="#4f727b" opacity=".9"/>
<circle cx="191.6" cy="145.3" r="1.1" fill="#4f727b" opacity=".9"/>
<circle cx="237.5" cy="66.7" r="0.9" fill="#4f727b" opacity=".9"/>
<circle cx="188.9" cy="108.4" r="1.0" fill="#4f727b" opacity=".9"/>
<circle cx="176.3" cy="129.7" r="2.1" fill="#58533a" opacity=".9"/>
<circle cx="233.2" cy="72.9" r="0.9" fill="#58533a" opacity=".9"/>
<circle cx="218.6" cy="41.8" r="1.9" fill="#58533a" opacity=".9"/>
<circle cx="194.2" cy="132.7" r="1.2" fill="#4f727b" opacity=".9"/>
<circle cx="81.0" cy="132.4" r="1.2" fill="#4f727b" opacity=".9"/>
<circle cx="155.9" cy="71.5" r="2.1" fill="#4f727b" opacity=".9"/>
<circle cx="74.3" cy="117.4" r="1.8" fill="#58533a" opacity=".9"/>
<circle cx="239.9" cy="154.1" r="1.0" fill="#4f727b" opacity=".9"/>
<circle cx="138.1" cy="50.0" r="1.1" fill="#58533a" opacity=".9"/>
<circle cx="87.0" cy="141.9" r="1.2" fill="#58533a" opacity=".9"/>
<circle cx="185.0" cy="55.9" r="2.2" fill="#58533a" opacity=".9"/>
<circle cx="124.0" cy="116.2" r="0.8" fill="#4f727b" opacity=".9"/>
<circle cx="177.3" cy="64.4" r="0.9" fill="#4f727b" opacity=".9"/>
<circle cx="161.1" cy="68.4" r="1.6" fill="#4f727b" opacity=".9"/>
<circle cx="219.0" cy="68.8" r="1.9" fill="#58533a" opacity=".9"/>
<circle cx="116.2" cy="139.3" r="1.2" fill="#4f727b" opacity=".9"/>
<circle cx="231.0" cy="161.8" r="1.3" fill="#4f727b" opacity=".9"/>
<circle cx="56.5" cy="127.3" r="1.7" fill="#58533a" opacity=".9"/>
<circle cx="252.1" cy="43.2" r="2.2" fill="#4f727b" opacity=".9"/>
<circle cx="106.3" cy="59.1" r="1.0" fill="#4f727b" opacity=".9"/>
<circle cx="68.0" cy="114.8" r="2.0" fill="#58533a" opacity=".9"/>
<circle cx="208.2" cy="121.5" r="1.9" fill="#4f727b" opacity=".9"/>
<circle cx="127.8" cy="164.3" r="1.4" fill="#4f727b" opacity=".9"/>
<circle cx="167.3" cy="65.9" r="1.4" fill="#4f727b" opacity=".9"/>
<circle cx="197.4" cy="135.2" r="1.3" fill="#4f727b" opacity=".9"/>
<circle cx="227.8" cy="87.0" r="1.7" fill="#4f727b" opacity=".9"/>
<circle cx="260.5" cy="144.0" r="1.4" fill="#58533a" opacity=".9"/>
<circle cx="102.7" cy="102.6" r="1.0" fill="#58533a" opacity=".9"/>
<circle cx="118.7" cy="133.6" r="2.1" fill="#58533a" opacity=".9"/>
<circle cx="124.3" cy="113.4" r="1.8" fill="#4f727b" opacity=".9"/>
<circle cx="212.4" cy="52.7" r="1.5" fill="#58533a" opacity=".9"/>
<circle cx="156.2" cy="66.4" r="2.0" fill="#58533a" opacity=".9"/>
<circle cx="245.6" cy="46.4" r="1.9" fill="#58533a" opacity=".9"/>
<circle cx="112.2" cy="63.7" r="1.7" fill="#4f727b" opacity=".9"/>
<circle cx="190.5" cy="47.4" r="1.8" fill="#4f727b" opacity=".9"/>
<circle cx="115.5" cy="56.3" r="1.4" fill="#58533a" opacity=".9"/>
<circle cx="207.9" cy="60.3" r="1.3" fill="#4f727b" opacity=".9"/>
<circle cx="139.5" cy="70.4" r="1.5" fill="#4f727b" opacity=".9"/>
<circle cx="190.4" cy="44.6" r="1.2" fill="#4f727b" opacity=".9"/>
<circle cx="89.5" cy="149.2" r="1.2" fill="#4f727b" opacity=".9"/>
<circle cx="142.3" cy="68.1" r="1.5" fill="#58533a" opacity=".9"/>
<circle cx="206.4" cy="109.5" r="1.4" fill="#4f727b" opacity=".9"/>
<circle cx="221.0" cy="174.5" r="1.8" fill="#4f727b" opacity=".9"/>
<circle cx="124.9" cy="139.9" r="1.6" fill="#4f727b" opacity=".9"/>
<circle cx="142.7" cy="68.8" r="1.3" fill="#58533a" opacity=".9"/>
<circle cx="172.8" cy="57.2" r="1.3" fill="#58533a" opacity=".9"/>
<circle cx="151.3" cy="63.7" r="2.0" fill="#58533a" opacity=".9"/>
<circle cx="219.2" cy="71.3" r="1.6" fill="#58533a" opacity=".9"/>
<circle cx="129.4" cy="121.7" r="1.8" fill="#4f727b" opacity=".9"/>
<circle cx="198.0" cy="166.8" r="1.9" fill="#4f727b" opacity=".9"/>
<circle cx="192.6" cy="141.4" r="1.0" fill="#4f727b" opacity=".9"/>
<circle cx="105.8" cy="62.3" r="0.8" fill="#58533a" opacity=".9"/>
<circle cx="54.5" cy="120.3" r="2.2" fill="#58533a" opacity=".9"/>
<circle cx="63.3" cy="130.2" r="1.9" fill="#58533a" opacity=".9"/>
<circle cx="217.1" cy="46.3" r="1.1" fill="#4f727b" opacity=".9"/>
<circle cx="190.2" cy="141.8" r="1.4" fill="#4f727b" opacity=".9"/>
<circle cx="247.7" cy="56.5" r="2.2" fill="#4f727b" opacity=".9"/>
<circle cx="210.9" cy="107.2" r="1.5" fill="#4f727b" opacity=".9"/>
<circle cx="183.4" cy="151.6" r="1.8" fill="#58533a" opacity=".9"/>
<circle cx="125.5" cy="120.1" r="1.1" fill="#4f727b" opacity=".9"/>
<circle cx="120.7" cy="170.8" r="2.1" fill="#4f727b" opacity=".9"/>
<circle cx="262.4" cy="143.6" r="1.3" fill="#4f727b" opacity=".9"/>
<circle cx="105.6" cy="94.8" r="0.9" fill="#58533a" opacity=".9"/>
<circle cx="97.7" cy="142.6" r="1.8" fill="#4f727b" opacity=".9"/>
<circle cx="121.9" cy="176.2" r="2.1" fill="#58533a" opacity=".9"/>
<circle cx="191.1" cy="109.5" r="2.0" fill="#58533a" opacity=".9"/>
<circle cx="186.7" cy="108.7" r="1.5" fill="#4f727b" opacity=".9"/>
<circle cx="112.7" cy="162.0" r="1.1" fill="#4f727b" opacity=".9"/>
<circle cx="239.1" cy="68.7" r="1.5" fill="#4f727b" opacity=".9"/>
<circle cx="100.5" cy="156.1" r="1.8" fill="#4f727b" opacity=".9"/>
<circle cx="197.3" cy="58.4" r="0.8" fill="#4f727b" opacity=".9"/>
<circle cx="183.8" cy="111.0" r="1.1" fill="#4f727b" opacity=".9"/>
<circle cx="247.9" cy="53.0" r="1.3" fill="#4f727b" opacity=".9"/>
<circle cx="143.6" cy="138.2" r="1.2" fill="#4f727b" opacity=".9"/>
<circle cx="241.0" cy="151.4" r="1.0" fill="#4f727b" opacity=".9"/>
<circle cx="188.4" cy="160.0" r="1.4" fill="#4f727b" opacity=".9"/>
<circle cx="192.5" cy="174.3" r="1.8" fill="#58533a" opacity=".9"/>
<circle cx="204.0" cy="111.8" r="1.2" fill="#4f727b" opacity=".9"/>
<circle cx="176.7" cy="119.1" r="2.0" fill="#4f727b" opacity=".9"/>
<circle cx="126.5" cy="78.9" r="1.7" fill="#58533a" opacity=".9"/>
<circle cx="197.4" cy="130.2" r="0.8" fill="#4f727b" opacity=".9"/>
<circle cx="190.4" cy="146.5" r="1.1" fill="#4f727b" opacity=".9"/>
<circle cx="174.8" cy="124.2" r="1.5" fill="#4f727b" opacity=".9"/>
<circle cx="103.1" cy="141.3" r="2.1" fill="#4f727b" opacity=".9"/>
<circle cx="121.6" cy="81.1" r="1.3" fill="#58533a" opacity=".9"/>
<circle cx="122.0" cy="64.8" r="0.8" fill="#4f727b" opacity=".9"/>
<circle cx="163.0" cy="50.1" r="1.4" fill="#58533a" opacity=".9"/>
<circle cx="86.1" cy="118.0" r="1.5" fill="#4f727b" opacity=".9"/>
<circle cx="147.9" cy="51.6" r="1.2" fill="#4f727b" opacity=".9"/>
<circle cx="181.6" cy="118.1" r="1.9" fill="#4f727b" opacity=".9"/>
<circle cx="176.9" cy="46.3" r="1.2" fill="#4f727b" opacity=".9"/>
<circle cx="64.3" cy="132.7" r="1.2" fill="#58533a" opacity=".9"/>
<circle cx="200.9" cy="96.3" r="0.9" fill="#58533a" opacity=".9"/>
<circle cx="145.1" cy="138.6" r="1.1" fill="#4f727b" opacity=".9"/>
<circle cx="188.1" cy="152.8" r="1.5" fill="#4f727b" opacity=".9"/>
<circle cx="76.1" cy="119.3" r="1.7" fill="#4f727b" opacity=".9"/>
<circle cx="212.1" cy="109.5" r="2.0" fill="#4f727b" opacity=".9"/>
<circle cx="207.7" cy="85.9" r="1.3" fill="#58533a" opacity=".9"/>
<circle cx="207.1" cy="40.4" r="0.9" fill="#58533a" opacity=".9"/>
<circle cx="230.9" cy="66.5" r="1.0" fill="#58533a" opacity=".9"/>
<circle cx="184.0" cy="49.2" r="2.2" fill="#58533a" opacity=".9"/>
<circle cx="86.0" cy="143.4" r="2.0" fill="#4f727b" opacity=".9"/>
<circle cx="122.4" cy="140.2" r="1.9" fill="#4f727b" opacity=".9"/>
<circle cx="137.1" cy="58.1" r="1.6" fill="#58533a" opacity=".9"/>
<circle cx="221.1" cy="174.6" r="1.9" fill="#4f727b" opacity=".9"/>
<circle cx="178.0" cy="38.7" r="1.7" fill="#58533a" opacity=".9"/>
<circle cx="258.7" cy="44.1" r="0.8" fill="#58533a" opacity=".9"/>
<circle cx="124.9" cy="165.5" r="1.6" fill="#4f727b" opacity=".9"/>
<circle cx="53.8" cy="109.2" r="1.8" fill="#58533a" opacity=".9"/>
<circle cx="193.3" cy="93.5" r="1.1" fill="#4f727b" opacity=".9"/>
<circle cx="176.8" cy="58.1" r="1.1" fill="#58533a" opacity=".9"/>
<circle cx="127.5" cy="135.9" r="0.9" fill="#4f727b" opacity=".9"/>
<circle cx="161.2" cy="135.2" r="2.1" fill="#4f727b" opacity=".9"/>
<circle cx="191.9" cy="139.9" r="2.1" fill="#4f727b" opacity=".9"/>
<circle cx="240.3" cy="163.8" r="1.3" fill="#58533a" opacity=".9"/>
<circle cx="199.1" cy="89.8" r="1.9" fill="#4f727b" opacity=".9"/>
<circle cx="121.7" cy="59.9" r="1.9" fill="#58533a" opacity=".9"/>
<circle cx="70.1" cy="119.8" r="1.7" fill="#58533a" opacity=".9"/>
<circle cx="188.9" cy="142.6" r="1.8" fill="#58533a" opacity=".9"/>
<circle cx="133.0" cy="163.1" r="1.6" fill="#58533a" opacity=".9"/>
<circle cx="160.9" cy="135.6" r="1.1" fill="#4f727b" opacity=".9"/>
<circle cx="116.3" cy="71.2" r="1.3" fill="#58533a" opacity=".9"/>
<circle cx="250.9" cy="144.3" r="1.3" fill="#4f727b" opacity=".9"/>
<circle cx="186.7" cy="163.6" r="1.9" fill="#4f727b" opacity=".9"/>
<circle cx="108.8" cy="159.5" r="1.0" fill="#4f727b" opacity=".9"/>
<circle cx="189.1" cy="52.6" r="1.8" fill="#58533a" opacity=".9"/>
<circle cx="224.6" cy="88.5" r="1.3" fill="#58533a" opacity=".9"/>
<circle cx="184.7" cy="122.9" r="1.2" fill="#58533a" opacity=".9"/>
<circle cx="192.3" cy="54.5" r="1.3" fill="#58533a" opacity=".9"/>
<circle cx="155.4" cy="70.9" r="1.5" fill="#4f727b" opacity=".9"/>
<circle cx="180.6" cy="165.6" r="1.7" fill="#58533a" opacity=".9"/>
<circle cx="195.3" cy="98.4" r="2.0" fill="#4f727b" opacity=".9"/>
<circle cx="229.1" cy="60.3" r="1.0" fill="#58533a" opacity=".9"/>
<circle cx="119.6" cy="71.4" r="1.9" fill="#4f727b" opacity=".9"/>
<circle cx="208.1" cy="49.2" r="1.0" fill="#4f727b" opacity=".9"/>
<circle cx="255.4" cy="42.2" r="1.9" fill="#58533a" opacity=".9"/>
<circle cx="228.3" cy="77.2" r="0.8" fill="#58533a" opacity=".9"/>
<circle cx="189.0" cy="42.0" r="1.6" fill="#4f727b" opacity=".9"/>
<circle cx="243.3" cy="44.2" r="1.5" fill="#58533a" opacity=".9"/>
<circle cx="244.1" cy="64.9" r="1.0" fill="#4f727b" opacity=".9"/>
<circle cx="187.2" cy="156.6" r="2.0" fill="#4f727b" opacity=".9"/>
<circle cx="107.8" cy="57.9" r="2.2" fill="#4f727b" opacity=".9"/>
<circle cx="208.0" cy="179.6" r="2.0" fill="#58533a" opacity=".9"/>
<circle cx="245.8" cy="148.9" r="2.1" fill="#4f727b" opacity=".9"/>
<circle cx="128.4" cy="173.7" r="1.6" fill="#58533a" opacity=".9"/>
<circle cx="134.2" cy="61.7" r="0.9" fill="#58533a" opacity=".9"/>
<circle cx="225.1" cy="170.2" r="1.8" fill="#4f727b" opacity=".9"/>
<circle cx="184.4" cy="171.1" r="1.9" fill="#58533a" opacity=".9"/>
<circle cx="191.6" cy="163.6" r="1.7" fill="#4f727b" opacity=".9"/>
<circle cx="263.6" cy="44.5" r="1.6" fill="#58533a" opacity=".9"/>
<circle cx="177.0" cy="121.5" r="2.1" fill="#4f727b" opacity=".9"/>
<circle cx="242.1" cy="54.3" r="2.0" fill="#58533a" opacity=".9"/>
<circle cx="127.7" cy="133.5" r="1.3" fill="#4f727b" opacity=".9"/>
<circle cx="198.1" cy="129.8" r="1.0" fill="#4f727b" opacity=".9"/>
<circle cx="61.1" cy="121.4" r="2.2" fill="#4f727b" opacity=".9"/>
<circle cx="212.9" cy="173.5" r="1.3" fill="#4f727b" opacity=".9"/>
<circle cx="232.0" cy="160.6" r="0.8" fill="#4f727b" opacity=".9"/>
<circle cx="207.8" cy="108.0" r="1.5" fill="#4f727b" opacity=".9"/>
<circle cx="127.8" cy="123.6" r="1.0" fill="#4f727b" opacity=".9"/>
<circle cx="77.8" cy="144.9" r="1.6" fill="#58533a" opacity=".9"/>
<circle cx="125.7" cy="79.7" r="1.6" fill="#58533a" opacity=".9"/>
<circle cx="63.8" cy="115.2" r="1.8" fill="#58533a" opacity=".9"/>
<circle cx="193.1" cy="49.1" r="1.0" fill="#58533a" opacity=".9"/>
<circle cx="259.1" cy="146.4" r="1.4" fill="#58533a" opacity=".9"/>
<circle cx="170.9" cy="127.6" r="1.9" fill="#4f727b" opacity=".9"/>
<circle cx="251.1" cy="142.7" r="0.9" fill="#4f727b" opacity=".9"/>
<circle cx="107.9" cy="58.4" r="1.4" fill="#4f727b" opacity=".9"/>
<circle cx="179.0" cy="43.3" r="1.2" fill="#4f727b" opacity=".9"/>
<circle cx="181.4" cy="170.1" r="1.2" fill="#58533a" opacity=".9"/>
<circle cx="231.6" cy="75.5" r="1.0" fill="#58533a" opacity=".9"/>
<circle cx="113.9" cy="56.2" r="1.6" fill="#58533a" opacity=".9"/>
<circle cx="173.4" cy="43.5" r="1.1" fill="#4f727b" opacity=".9"/>
<circle cx="192.2" cy="144.0" r="1.5" fill="#4f727b" opacity=".9"/>
<circle cx="203.6" cy="86.1" r="1.1" fill="#4f727b" opacity=".9"/>
<circle cx="155.5" cy="51.2" r="1.3" fill="#58533a" opacity=".9"/>
<circle cx="246.7" cy="42.5" r="2.2" fill="#58533a" opacity=".9"/>
<circle cx="57.2" cy="117.2" r="1.6" fill="#58533a" opacity=".9"/>
<circle cx="198.2" cy="130.4" r="1.0" fill="#4f727b" opacity=".9"/>
<circle cx="151.7" cy="136.2" r="1.4" fill="#4f727b" opacity=".9"/>
<circle cx="199.9" cy="167.4" r="1.8" fill="#4f727b" opacity=".9"/>
<circle cx="214.5" cy="53.1" r="1.9" fill="#58533a" opacity=".9"/>
<circle cx="173.2" cy="39.6" r="0.9" fill="#58533a" opacity=".9"/>
<circle cx="131.6" cy="77.5" r="1.1" fill="#4f727b" opacity=".9"/>
<circle cx="214.5" cy="174.9" r="1.1" fill="#4f727b" opacity=".9"/>
<circle cx="178.9" cy="125.7" r="1.4" fill="#58533a" opacity=".9"/>
<circle cx="94.2" cy="121.7" r="1.7" fill="#58533a" opacity=".9"/>
<circle cx="217.6" cy="68.7" r="1.9" fill="#58533a" opacity=".9"/>
<circle cx="75.2" cy="140.7" r="0.9" fill="#58533a" opacity=".9"/>
<circle cx="155.5" cy="64.1" r="1.2" fill="#58533a" opacity=".9"/>
<circle cx="121.9" cy="59.3" r="1.4" fill="#58533a" opacity=".9"/>
<circle cx="121.6" cy="108.1" r="2.0" fill="#4f727b" opacity=".9"/>
<circle cx="150.2" cy="144.1" r="1.6" fill="#58533a" opacity=".9"/>
<circle cx="131.3" cy="79.3" r="1.9" fill="#4f727b" opacity=".9"/>
<circle cx="186.2" cy="58.3" r="1.0" fill="#4f727b" opacity=".9"/>
<circle cx="239.3" cy="69.8" r="2.0" fill="#4f727b" opacity=".9"/>
<circle cx="161.9" cy="48.9" r="2.0" fill="#58533a" opacity=".9"/>
<circle cx="198.6" cy="88.8" r="1.5" fill="#4f727b" opacity=".9"/>
<circle cx="226.1" cy="43.1" r="1.5" fill="#58533a" opacity=".9"/>
<circle cx="180.4" cy="42.9" r="1.0" fill="#4f727b" opacity=".9"/>
<circle cx="167.9" cy="60.8" r="1.1" fill="#58533a" opacity=".9"/>
<circle cx="186.5" cy="146.8" r="1.2" fill="#58533a" opacity=".9"/>
<circle cx="58.8" cy="127.4" r="2.1" fill="#58533a" opacity=".9"/>
<circle cx="122.5" cy="137.1" r="1.7" fill="#4f727b" opacity=".9"/>
<circle cx="225.7" cy="90.4" r="1.2" fill="#4f727b" opacity=".9"/>
<circle cx="184.2" cy="167.7" r="1.1" fill="#58533a" opacity=".9"/>
<circle cx="165.0" cy="63.8" r="1.3" fill="#4f727b" opacity=".9"/>
<circle cx="119.1" cy="108.1" r="1.5" fill="#4f727b" opacity=".9"/>
<circle cx="222.5" cy="101.2" r="1.2" fill="#4f727b" opacity=".9"/>
<circle cx="167.3" cy="54.0" r="1.4" fill="#58533a" opacity=".9"/>
<circle cx="202.1" cy="81.2" r="0.9" fill="#4f727b" opacity=".9"/>
<circle cx="166.9" cy="134.4" r="1.5" fill="#4f727b" opacity=".9"/>
<circle cx="193.2" cy="166.5" r="1.5" fill="#4f727b" opacity=".9"/>
<circle cx="243.4" cy="45.3" r="1.1" fill="#58533a" opacity=".9"/>
<circle cx="204.9" cy="83.8" r="1.4" fill="#4f727b" opacity=".9"/>
<circle cx="112.6" cy="161.8" r="1.6" fill="#4f727b" opacity=".9"/>
<circle cx="148.1" cy="68.0" r="2.1" fill="#58533a" opacity=".9"/>
<circle cx="187.6" cy="186.4" r="1.8" fill="#4f727b" opacity=".9"/>
<circle cx="71.4" cy="121.4" r="2.0" fill="#58533a" opacity=".9"/>
<circle cx="189.1" cy="192.5" r="1.9" fill="#58533a" opacity=".9"/>
<circle cx="165.2" cy="61.3" r="1.1" fill="#58533a" opacity=".9"/>
<circle cx="103.7" cy="56.7" r="1.3" fill="#58533a" opacity=".9"/>
<circle cx="217.9" cy="177.1" r="1.9" fill="#4f727b" opacity=".9"/>
<circle cx="243.5" cy="155.2" r="1.2" fill="#4f727b" opacity=".9"/>
<circle cx="183.2" cy="51.3" r="1.6" fill="#58533a" opacity=".9"/>
<circle cx="246.4" cy="48.0" r="1.7" fill="#4f727b" opacity=".9"/>
<circle cx="60.2" cy="105.2" r="0.9" fill="#58533a" opacity=".9"/>
<circle cx="158.5" cy="65.6" r="1.5" fill="#4f727b" opacity=".9"/>
<circle cx="80.5" cy="119.7" r="2.1" fill="#4f727b" opacity=".9"/>
<circle cx="211.1" cy="82.3" r="1.4" fill="#58533a" opacity=".9"/>
<circle cx="91.4" cy="143.6" r="1.3" fill="#4f727b" opacity=".9"/>
<circle cx="160.9" cy="51.3" r="1.3" fill="#58533a" opacity=".9"/>
<circle cx="255.8" cy="138.5" r="2.1" fill="#4f727b" opacity=".9"/>
<circle cx="59.7" cy="107.4" r="1.9" fill="#4f727b" opacity=".9"/>
<circle cx="105.5" cy="140.3" r="1.9" fill="#4f727b" opacity=".9"/>
<circle cx="154.2" cy="50.3" r="1.9" fill="#58533a" opacity=".9"/>
<circle cx="135.5" cy="165.3" r="1.3" fill="#58533a" opacity=".9"/>
<circle cx="65.2" cy="126.2" r="1.5" fill="#4f727b" opacity=".9"/>
<circle cx="119.8" cy="90.8" r="1.0" fill="#4f727b" opacity=".9"/>
<circle cx="57.2" cy="109.4" r="1.6" fill="#4f727b" opacity=".9"/>
<circle cx="171.6" cy="46.0" r="1.1" fill="#58533a" opacity=".9"/>
<circle cx="211.0" cy="105.0" r="1.3" fill="#58533a" opacity=".9"/>
<circle cx="156.7" cy="60.6" r="1.2" fill="#58533a" opacity=".9"/>
<circle cx="126.9" cy="82.4" r="2.1" fill="#4f727b" opacity=".9"/>
<circle cx="136.3" cy="71.8" r="1.5" fill="#4f727b" opacity=".9"/>
<circle cx="184.8" cy="59.0" r="2.0" fill="#4f727b" opacity=".9"/>
<circle cx="191.8" cy="138.5" r="1.1" fill="#4f727b" opacity=".9"/>
<circle cx="225.3" cy="97.2" r="1.4" fill="#4f727b" opacity=".9"/>
<circle cx="84.0" cy="149.3" r="1.6" fill="#58533a" opacity=".9"/>
<circle cx="204.7" cy="44.4" r="1.2" fill="#4f727b" opacity=".9"/>
<circle cx="102.9" cy="102.0" r="0.8" fill="#58533a" opacity=".9"/>
<circle cx="91.0" cy="133.7" r="1.1" fill="#58533a" opacity=".9"/>
<circle cx="163.9" cy="137.8" r="1.4" fill="#4f727b" opacity=".9"/>
<circle cx="184.5" cy="56.8" r="1.2" fill="#58533a" opacity=".9"/>
<circle cx="211.3" cy="174.1" r="1.0" fill="#4f727b" opacity=".9"/>
<circle cx="247.5" cy="145.9" r="0.9" fill="#4f727b" opacity=".9"/>
<circle cx="204.7" cy="120.2" r="1.6" fill="#4f727b" opacity=".9"/>
<circle cx="94.4" cy="130.6" r="1.4" fill="#58533a" opacity=".9"/>
<circle cx="142.0" cy="47.2" r="2.0" fill="#58533a" opacity=".9"/>
<circle cx="132.0" cy="66.1" r="1.6" fill="#58533a" opacity=".9"/>
<circle cx="116.0" cy="140.4" r="1.4" fill="#4f727b" opacity=".9"/>
<circle cx="246.9" cy="38.1" r="1.8" fill="#58533a" opacity=".9"/>
<circle cx="185.3" cy="143.6" r="1.4" fill="#58533a" opacity=".9"/>
<circle cx="263.5" cy="53.6" r="0.9" fill="#4f727b" opacity=".9"/>
<circle cx="203.6" cy="44.0" r="1.2" fill="#4f727b" opacity=".9"/>
<circle cx="154.9" cy="66.5" r="1.9" fill="#58533a" opacity=".9"/>
<circle cx="211.2" cy="79.7" r="2.1" fill="#58533a" opacity=".9"/>
<circle cx="107.1" cy="93.8" r="1.1" fill="#58533a" opacity=".9"/>
<circle cx="106.3" cy="63.9" r="1.7" fill="#58533a" opacity=".9"/>
<circle cx="77.4" cy="119.4" r="1.3" fill="#4f727b" opacity=".9"/>
<circle cx="170.1" cy="40.2" r="0.9" fill="#58533a" opacity=".9"/>
<circle cx="214.3" cy="68.0" r="1.5" fill="#4f727b" opacity=".9"/>
<circle cx="201.8" cy="128.3" r="1.4" fill="#4f727b" opacity=".9"/>
<circle cx="140.9" cy="46.2" r="2.1" fill="#58533a" opacity=".9"/>
<circle cx="132.6" cy="68.6" r="1.8" fill="#4f727b" opacity=".9"/>
<circle cx="208.3" cy="176.8" r="2.0" fill="#58533a" opacity=".9"/>
<circle cx="84.5" cy="120.9" r="2.0" fill="#4f727b" opacity=".9"/>
<circle cx="238.0" cy="163.8" r="1.4" fill="#58533a" opacity=".9"/>
<circle cx="172.1" cy="132.4" r="1.3" fill="#4f727b" opacity=".9"/>
<circle cx="105.3" cy="136.3" r="1.0" fill="#58533a" opacity=".9"/>
<circle cx="258.1" cy="49.3" r="1.9" fill="#4f727b" opacity=".9"/>
<circle cx="124.4" cy="117.4" r="1.3" fill="#4f727b" opacity=".9"/>
<circle cx="90.4" cy="136.5" r="1.3" fill="#58533a" opacity=".9"/>
<circle cx="193.6" cy="100.7" r="1.1" fill="#4f727b" opacity=".9"/>
<circle cx="85.7" cy="145.4" r="2.1" fill="#4f727b" opacity=".9"/>
<circle cx="219.3" cy="51.7" r="1.6" fill="#58533a" opacity=".9"/>
<circle cx="242.8" cy="62.9" r="1.9" fill="#4f727b" opacity=".9"/>
<circle cx="95.4" cy="153.8" r="1.7" fill="#4f727b" opacity=".9"/>
<circle cx="258.7" cy="140.3" r="1.5" fill="#4f727b" opacity=".9"/>
<circle cx="190.3" cy="58.6" r="2.1" fill="#4f727b" opacity=".9"/>
<circle cx="152.9" cy="138.2" r="1.7" fill="#4f727b" opacity=".9"/>
<circle cx="208.9" cy="54.4" r="1.1" fill="#58533a" opacity=".9"/>
<circle cx="153.1" cy="144.6" r="2.1" fill="#58533a" opacity=".9"/>
<circle cx="76.8" cy="122.0" r="1.7" fill="#4f727b" opacity=".9"/>
<circle cx="123.0" cy="76.6" r="2.1" fill="#4f727b" opacity=".9"/>
<circle cx="103.5" cy="164.0" r="1.9" fill="#58533a" opacity=".9"/>
<circle cx="184.7" cy="50.3" r="1.7" fill="#58533a" opacity=".9"/>
<circle cx="53.7" cy="112.0" r="1.6" fill="#58533a" opacity=".9"/>
<circle cx="129.9" cy="131.4" r="1.1" fill="#4f727b" opacity=".9"/>
<circle cx="205.8" cy="80.9" r="1.5" fill="#4f727b" opacity=".9"/>
<circle cx="235.5" cy="62.1" r="0.9" fill="#4f727b" opacity=".9"/>
<circle cx="215.1" cy="52.2" r="1.9" fill="#58533a" opacity=".9"/>
<circle cx="57.7" cy="122.7" r="1.7" fill="#4f727b" opacity=".9"/>
<circle cx="128.6" cy="79.7" r="2.1" fill="#4f727b" opacity=".9"/>
<circle cx="123.7" cy="76.5" r="1.6" fill="#4f727b" opacity=".9"/>
<circle cx="107.9" cy="88.4" r="2.0" fill="#58533a" opacity=".9"/>
<circle cx="101.3" cy="137.8" r="1.7" fill="#58533a" opacity=".9"/>
<circle cx="222.7" cy="100.6" r="1.5" fill="#4f727b" opacity=".9"/>
<circle cx="138.2" cy="62.3" r="0.9" fill="#58533a" opacity=".9"/>
<circle cx="206.0" cy="170.2" r="2.0" fill="#4f727b" opacity=".9"/>
<circle cx="124.5" cy="122.4" r="1.2" fill="#58533a" opacity=".9"/>
<circle cx="185.6" cy="145.7" r="1.8" fill="#58533a" opacity=".9"/>
<circle cx="78.8" cy="128.4" r="2.1" fill="#4f727b" opacity=".9"/>
<circle cx="129.2" cy="76.5" r="1.6" fill="#4f727b" opacity=".9"/>
<circle cx="213.8" cy="106.4" r="1.6" fill="#4f727b" opacity=".9"/>
<circle cx="255.5" cy="44.5" r="0.9" fill="#4f727b" opacity=".9"/>
<circle cx="223.3" cy="170.0" r="1.7" fill="#4f727b" opacity=".9"/>
<circle cx="60.1" cy="121.7" r="1.0" fill="#4f727b" opacity=".9"/>
<circle cx="134.2" cy="155.7" r="1.7" fill="#4f727b" opacity=".9"/>
<circle cx="195.3" cy="166.4" r="2.2" fill="#4f727b" opacity=".9"/>
<circle cx="101.9" cy="162.3" r="1.2" fill="#58533a" opacity=".9"/>
<circle cx="165.5" cy="42.5" r="1.6" fill="#58533a" opacity=".9"/>
<circle cx="117.0" cy="65.2" r="1.2" fill="#4f727b" opacity=".9"/>
<circle cx="227.1" cy="166.2" r="1.6" fill="#4f727b" opacity=".9"/>
<circle cx="178.0" cy="127.4" r="2.0" fill="#58533a" opacity=".9"/>
<circle cx="90.4" cy="121.2" r="2.1" fill="#4f727b" opacity=".9"/>
<circle cx="120.0" cy="82.7" r="2.1" fill="#58533a" opacity=".9"/>
<circle cx="121.7" cy="119.8" r="1.8" fill="#58533a" opacity=".9"/>
<circle cx="161.2" cy="48.7" r="0.9" fill="#58533a" opacity=".9"/>
<circle cx="102.3" cy="156.0" r="1.1" fill="#4f727b" opacity=".9"/>
<circle cx="219.6" cy="69.7" r="1.5" fill="#58533a" opacity=".9"/>
<circle cx="202.0" cy="114.2" r="1.5" fill="#58533a" opacity=".9"/>
<circle cx="209.9" cy="174.9" r="1.5" fill="#4f727b" opacity=".9"/>
<circle cx="199.1" cy="167.2" r="1.9" fill="#4f727b" opacity=".9"/>
<line x1="138.2" y1="73.9" x2="143.4" y2="75.0" stroke="#51757e" stroke-width="1.3" opacity=".7"/>
<line x1="177.7" y1="100.7" x2="177.6" y2="103.0" stroke="#51757e" stroke-width="1.3" opacity=".7"/>
<line x1="85.0" y1="109.2" x2="87.2" y2="109.9" stroke="#51757e" stroke-width="1.3" opacity=".7"/>
<line x1="157.0" y1="158.4" x2="159.0" y2="160.0" stroke="#51757e" stroke-width="1.3" opacity=".7"/>
<line x1="194.7" y1="173.5" x2="196.3" y2="178.1" stroke="#51757e" stroke-width="1.3" opacity=".7"/>
<line x1="259.6" y1="60.8" x2="263.4" y2="65.8" stroke="#51757e" stroke-width="1.3" opacity=".7"/>
<line x1="104.8" y1="69.7" x2="101.9" y2="71.7" stroke="#51757e" stroke-width="1.3" opacity=".7"/>
<line x1="111.6" y1="127.7" x2="113.6" y2="132.5" stroke="#51757e" stroke-width="1.3" opacity=".7"/>
<line x1="179.9" y1="62.8" x2="181.7" y2="64.2" stroke="#51757e" stroke-width="1.3" opacity=".7"/>
<line x1="204.6" y1="108.4" x2="203.6" y2="111.9" stroke="#51757e" stroke-width="1.3" opacity=".7"/>
<line x1="162.3" y1="92.5" x2="158.8" y2="97.3" stroke="#51757e" stroke-width="1.3" opacity=".7"/>
<line x1="123.4" y1="126.8" x2="119.1" y2="128.6" stroke="#51757e" stroke-width="1.3" opacity=".7"/>
<line x1="213.7" y1="91.0" x2="220.1" y2="93.5" stroke="#51757e" stroke-width="1.3" opacity=".7"/>
<line x1="155.8" y1="149.6" x2="155.9" y2="152.4" stroke="#51757e" stroke-width="1.3" opacity=".7"/>
<line x1="85.3" y1="138.5" x2="84.0" y2="144.2" stroke="#51757e" stroke-width="1.3" opacity=".7"/>
<line x1="240.8" y1="94.2" x2="239.2" y2="99.5" stroke="#51757e" stroke-width="1.3" opacity=".7"/>
<line x1="185.9" y1="112.0" x2="179.8" y2="113.1" stroke="#51757e" stroke-width="1.3" opacity=".7"/>
<line x1="166.2" y1="138.0" x2="164.8" y2="139.9" stroke="#51757e" stroke-width="1.3" opacity=".7"/>
<line x1="198.4" y1="179.1" x2="202.2" y2="183.9" stroke="#51757e" stroke-width="1.3" opacity=".7"/>
<line x1="149.8" y1="138.6" x2="150.0" y2="140.7" stroke="#51757e" stroke-width="1.3" opacity=".7"/>
<line x1="109.3" y1="69.6" x2="107.5" y2="71.2" stroke="#51757e" stroke-width="1.3" opacity=".7"/>
<line x1="102.1" y1="86.0" x2="98.4" y2="87.5" stroke="#51757e" stroke-width="1.3" opacity=".7"/>
<line x1="93.0" y1="111.1" x2="88.6" y2="112.9" stroke="#51757e" stroke-width="1.3" opacity=".7"/>
<line x1="230.4" y1="163.0" x2="231.3" y2="166.3" stroke="#51757e" stroke-width="1.3" opacity=".7"/>
<line x1="144.7" y1="165.5" x2="150.8" y2="168.6" stroke="#51757e" stroke-width="1.3" opacity=".7"/>
<line x1="110.8" y1="84.0" x2="110.9" y2="87.2" stroke="#51757e" stroke-width="1.3" opacity=".7"/>
<line x1="187.6" y1="87.8" x2="188.1" y2="89.8" stroke="#51757e" stroke-width="1.3" opacity=".7"/>
<line x1="146.7" y1="125.8" x2="142.9" y2="131.4" stroke="#51757e" stroke-width="1.3" opacity=".7"/>
<line x1="173.9" y1="132.2" x2="179.2" y2="133.1" stroke="#51757e" stroke-width="1.3" opacity=".7"/>
<line x1="245.3" y1="152.5" x2="240.2" y2="156.3" stroke="#51757e" stroke-width="1.3" opacity=".7"/>
<line x1="151.0" y1="104.9" x2="150.0" y2="107.2" stroke="#51757e" stroke-width="1.3" opacity=".7"/>
<line x1="89.6" y1="63.4" x2="92.2" y2="64.9" stroke="#51757e" stroke-width="1.3" opacity=".7"/>
<line x1="141.2" y1="61.6" x2="143.0" y2="62.5" stroke="#51757e" stroke-width="1.3" opacity=".7"/>
<line x1="96.9" y1="100.5" x2="94.9" y2="101.3" stroke="#51757e" stroke-width="1.3" opacity=".7"/>
<line x1="192.2" y1="73.6" x2="193.7" y2="76.5" stroke="#51757e" stroke-width="1.3" opacity=".7"/>
<line x1="145.7" y1="70.4" x2="139.5" y2="70.5" stroke="#51757e" stroke-width="1.3" opacity=".7"/>
<line x1="164.7" y1="115.5" x2="167.0" y2="116.2" stroke="#51757e" stroke-width="1.3" opacity=".7"/>
<line x1="141.7" y1="88.1" x2="147.1" y2="91.1" stroke="#51757e" stroke-width="1.3" opacity=".7"/>
<line x1="82.3" y1="173.9" x2="86.5" y2="175.9" stroke="#51757e" stroke-width="1.3" opacity=".7"/>
<line x1="179.0" y1="58.4" x2="174.4" y2="58.7" stroke="#51757e" stroke-width="1.3" opacity=".7"/>
<line x1="238.6" y1="142.0" x2="239.9" y2="145.0" stroke="#51757e" stroke-width="1.3" opacity=".7"/>
<line x1="109.1" y1="151.5" x2="105.5" y2="154.5" stroke="#51757e" stroke-width="1.3" opacity=".7"/>
<line x1="139.3" y1="82.9" x2="133.3" y2="83.2" stroke="#51757e" stroke-width="1.3" opacity=".7"/>
<line x1="236.6" y1="155.8" x2="232.4" y2="160.2" stroke="#51757e" stroke-width="1.3" opacity=".7"/>
<line x1="120.2" y1="119.7" x2="123.9" y2="120.0" stroke="#51757e" stroke-width="1.3" opacity=".7"/>
<line x1="83.2" y1="89.9" x2="81.3" y2="92.6" stroke="#51757e" stroke-width="1.3" opacity=".7"/>
<line x1="255.9" y1="110.9" x2="249.2" y2="111.2" stroke="#51757e" stroke-width="1.3" opacity=".7"/>
<line x1="255.6" y1="100.6" x2="258.0" y2="102.6" stroke="#51757e" stroke-width="1.3" opacity=".7"/>
<line x1="114.6" y1="80.5" x2="109.7" y2="82.1" stroke="#51757e" stroke-width="1.3" opacity=".7"/>
<line x1="234.3" y1="114.9" x2="230.1" y2="118.0" stroke="#51757e" stroke-width="1.3" opacity=".7"/>
<line x1="93.8" y1="137.6" x2="88.7" y2="141.7" stroke="#51757e" stroke-width="1.3" opacity=".7"/>
<line x1="217.5" y1="114.8" x2="215.2" y2="116.5" stroke="#51757e" stroke-width="1.3" opacity=".7"/>
<line x1="139.8" y1="155.1" x2="142.1" y2="161.6" stroke="#51757e" stroke-width="1.3" opacity=".7"/>
<line x1="152.7" y1="173.3" x2="157.5" y2="176.2" stroke="#51757e" stroke-width="1.3" opacity=".7"/>
<line x1="101.6" y1="73.9" x2="96.3" y2="77.6" stroke="#51757e" stroke-width="1.3" opacity=".7"/>
<line x1="105.2" y1="158.3" x2="101.9" y2="164.4" stroke="#51757e" stroke-width="1.3" opacity=".7"/>
<line x1="143.2" y1="123.6" x2="145.8" y2="123.7" stroke="#51757e" stroke-width="1.3" opacity=".7"/>
<line x1="258.6" y1="136.2" x2="254.1" y2="137.2" stroke="#51757e" stroke-width="1.3" opacity=".7"/>
<line x1="158.7" y1="164.0" x2="163.5" y2="167.7" stroke="#51757e" stroke-width="1.3" opacity=".7"/>
<line x1="124.8" y1="91.6" x2="124.0" y2="94.7" stroke="#51757e" stroke-width="1.3" opacity=".7"/>
<line x1="126.2" y1="107.4" x2="123.7" y2="108.1" stroke="#51757e" stroke-width="1.3" opacity=".7"/>
<line x1="143.8" y1="112.3" x2="139.1" y2="113.7" stroke="#51757e" stroke-width="1.3" opacity=".7"/>
<line x1="156.2" y1="169.7" x2="155.8" y2="174.2" stroke="#51757e" stroke-width="1.3" opacity=".7"/>
<line x1="175.4" y1="57.3" x2="178.9" y2="59.6" stroke="#51757e" stroke-width="1.3" opacity=".7"/>
<line x1="78.7" y1="154.9" x2="79.0" y2="157.7" stroke="#51757e" stroke-width="1.3" opacity=".7"/>
<line x1="212.9" y1="124.6" x2="212.7" y2="128.2" stroke="#51757e" stroke-width="1.3" opacity=".7"/>
<line x1="181.3" y1="153.0" x2="180.8" y2="155.5" stroke="#51757e" stroke-width="1.3" opacity=".7"/>
<line x1="124.2" y1="89.6" x2="124.1" y2="95.5" stroke="#51757e" stroke-width="1.3" opacity=".7"/>
<line x1="182.5" y1="150.0" x2="183.7" y2="156.5" stroke="#51757e" stroke-width="1.3" opacity=".7"/>
<line x1="191.9" y1="118.2" x2="189.3" y2="121.9" stroke="#51757e" stroke-width="1.3" opacity=".7"/>
<line x1="162.1" y1="121.7" x2="157.8" y2="122.5" stroke="#51757e" stroke-width="1.3" opacity=".7"/>
<line x1="208.1" y1="164.6" x2="212.7" y2="169.5" stroke="#51757e" stroke-width="1.3" opacity=".7"/>
<line x1="182.1" y1="172.9" x2="187.7" y2="175.5" stroke="#51757e" stroke-width="1.3" opacity=".7"/>
<line x1="100.6" y1="110.3" x2="102.3" y2="111.9" stroke="#51757e" stroke-width="1.3" opacity=".7"/>
<line x1="91.6" y1="138.7" x2="86.0" y2="140.6" stroke="#51757e" stroke-width="1.3" opacity=".7"/>
<line x1="106.7" y1="144.5" x2="111.5" y2="146.8" stroke="#51757e" stroke-width="1.3" opacity=".7"/>
<line x1="242.2" y1="175.9" x2="239.1" y2="176.4" stroke="#51757e" stroke-width="1.3" opacity=".7"/>
<line x1="152.1" y1="115.9" x2="146.1" y2="119.4" stroke="#51757e" stroke-width="1.3" opacity=".7"/>
<line x1="108.0" y1="108.9" x2="110.3" y2="112.9" stroke="#51757e" stroke-width="1.3" opacity=".7"/>
<line x1="114.4" y1="94.8" x2="120.0" y2="95.2" stroke="#51757e" stroke-width="1.3" opacity=".7"/>
<line x1="181.1" y1="110.1" x2="182.1" y2="111.9" stroke="#51757e" stroke-width="1.3" opacity=".7"/>
<line x1="194.1" y1="119.0" x2="191.7" y2="119.1" stroke="#51757e" stroke-width="1.3" opacity=".7"/>
<line x1="224.6" y1="176.5" x2="226.3" y2="178.3" stroke="#51757e" stroke-width="1.3" opacity=".7"/>
<line x1="85.4" y1="152.4" x2="88.4" y2="153.7" stroke="#51757e" stroke-width="1.3" opacity=".7"/>
<line x1="156.5" y1="168.9" x2="160.7" y2="173.3" stroke="#51757e" stroke-width="1.3" opacity=".7"/>
<line x1="105.8" y1="169.9" x2="102.9" y2="173.8" stroke="#51757e" stroke-width="1.3" opacity=".7"/>
<line x1="94.6" y1="62.2" x2="95.9" y2="67.5" stroke="#51757e" stroke-width="1.3" opacity=".7"/>
<line x1="91.5" y1="172.3" x2="87.3" y2="175.3" stroke="#51757e" stroke-width="1.3" opacity=".7"/>
<line x1="93.6" y1="162.0" x2="91.5" y2="163.0" stroke="#51757e" stroke-width="1.3" opacity=".7"/>
<line x1="162.4" y1="97.4" x2="157.8" y2="98.5" stroke="#51757e" stroke-width="1.3" opacity=".7"/>
<line x1="127.8" y1="71.2" x2="131.2" y2="74.3" stroke="#51757e" stroke-width="1.3" opacity=".7"/>
<line x1="98.4" y1="75.2" x2="100.2" y2="76.5" stroke="#51757e" stroke-width="1.3" opacity=".7"/>
<line x1="136.0" y1="93.1" x2="139.6" y2="97.7" stroke="#51757e" stroke-width="1.3" opacity=".7"/>
<line x1="171.0" y1="77.2" x2="174.7" y2="77.5" stroke="#51757e" stroke-width="1.3" opacity=".7"/>
<line x1="124.6" y1="56.9" x2="123.7" y2="62.5" stroke="#51757e" stroke-width="1.3" opacity=".7"/>
<line x1="113.2" y1="114.3" x2="119.5" y2="116.5" stroke="#51757e" stroke-width="1.3" opacity=".7"/>
<line x1="230.3" y1="109.0" x2="226.4" y2="111.2" stroke="#51757e" stroke-width="1.3" opacity=".7"/>
<line x1="151.1" y1="118.3" x2="145.7" y2="118.6" stroke="#51757e" stroke-width="1.3" opacity=".7"/>
<line x1="141.7" y1="159.0" x2="139.5" y2="164.1" stroke="#51757e" stroke-width="1.3" opacity=".7"/>
<line x1="153.3" y1="98.4" x2="155.4" y2="99.3" stroke="#51757e" stroke-width="1.3" opacity=".7"/>
<line x1="91.2" y1="147.6" x2="94.0" y2="149.2" stroke="#51757e" stroke-width="1.3" opacity=".7"/>
<line x1="93.7" y1="160.2" x2="90.5" y2="165.6" stroke="#51757e" stroke-width="1.3" opacity=".7"/>
<line x1="130.4" y1="85.3" x2="130.9" y2="88.7" stroke="#51757e" stroke-width="1.3" opacity=".7"/>
<line x1="107.3" y1="110.7" x2="104.0" y2="111.1" stroke="#51757e" stroke-width="1.3" opacity=".7"/>
<line x1="258.9" y1="123.4" x2="255.7" y2="123.7" stroke="#51757e" stroke-width="1.3" opacity=".7"/>
<line x1="135.6" y1="99.6" x2="136.3" y2="101.4" stroke="#51757e" stroke-width="1.3" opacity=".7"/>
<line x1="166.3" y1="117.8" x2="166.2" y2="120.9" stroke="#51757e" stroke-width="1.3" opacity=".7"/>
<line x1="78.9" y1="88.0" x2="79.7" y2="90.3" stroke="#51757e" stroke-width="1.3" opacity=".7"/>
<line x1="85.8" y1="57.8" x2="88.4" y2="60.2" stroke="#51757e" stroke-width="1.3" opacity=".7"/>
<line x1="186.9" y1="121.1" x2="184.2" y2="126.2" stroke="#51757e" stroke-width="1.3" opacity=".7"/>
<line x1="211.2" y1="164.9" x2="213.2" y2="168.3" stroke="#51757e" stroke-width="1.3" opacity=".7"/>
<line x1="261.2" y1="73.7" x2="258.7" y2="78.7" stroke="#51757e" stroke-width="1.3" opacity=".7"/>
<line x1="86.1" y1="159.4" x2="83.6" y2="165.4" stroke="#51757e" stroke-width="1.3" opacity=".7"/>
<line x1="214.5" y1="156.5" x2="214.3" y2="159.2" stroke="#51757e" stroke-width="1.3" opacity=".7"/>
<line x1="171.8" y1="159.4" x2="166.7" y2="162.5" stroke="#51757e" stroke-width="1.3" opacity=".7"/>
<line x1="186.6" y1="166.6" x2="183.6" y2="171.1" stroke="#51757e" stroke-width="1.3" opacity=".7"/>
<line x1="120.8" y1="58.9" x2="121.9" y2="61.3" stroke="#51757e" stroke-width="1.3" opacity=".7"/>
<line x1="97.5" y1="159.5" x2="95.6" y2="163.9" stroke="#51757e" stroke-width="1.3" opacity=".7"/>
<line x1="194.5" y1="140.1" x2="198.9" y2="140.1" stroke="#51757e" stroke-width="1.3" opacity=".7"/>
<line x1="226.4" y1="148.5" x2="225.9" y2="153.0" stroke="#51757e" stroke-width="1.3" opacity=".7"/>
<line x1="200.6" y1="63.3" x2="204.6" y2="67.3" stroke="#51757e" stroke-width="1.3" opacity=".7"/>
<line x1="91.8" y1="88.2" x2="96.4" y2="91.6" stroke="#51757e" stroke-width="1.3" opacity=".7"/>
<line x1="215.6" y1="177.0" x2="217.2" y2="181.1" stroke="#51757e" stroke-width="1.3" opacity=".7"/>
<line x1="167.1" y1="140.5" x2="165.0" y2="145.9" stroke="#51757e" stroke-width="1.3" opacity=".7"/>
<line x1="197.6" y1="64.7" x2="199.5" y2="66.6" stroke="#51757e" stroke-width="1.3" opacity=".7"/>
<line x1="216.2" y1="93.1" x2="221.1" y2="93.2" stroke="#51757e" stroke-width="1.3" opacity=".7"/>
<line x1="89.3" y1="88.6" x2="86.2" y2="93.0" stroke="#51757e" stroke-width="1.3" opacity=".7"/>
<line x1="203.7" y1="91.4" x2="204.2" y2="95.9" stroke="#51757e" stroke-width="1.3" opacity=".7"/>
<line x1="164.7" y1="69.8" x2="170.0" y2="73.6" stroke="#51757e" stroke-width="1.3" opacity=".7"/>
<line x1="259.9" y1="172.0" x2="260.2" y2="174.1" stroke="#51757e" stroke-width="1.3" opacity=".7"/>
<line x1="230.5" y1="176.0" x2="233.3" y2="179.2" stroke="#51757e" stroke-width="1.3" opacity=".7"/>
<line x1="117.0" y1="173.2" x2="116.3" y2="176.2" stroke="#51757e" stroke-width="1.3" opacity=".7"/>
<line x1="104.4" y1="120.5" x2="110.5" y2="123.2" stroke="#51757e" stroke-width="1.3" opacity=".7"/>
<line x1="230.6" y1="118.6" x2="226.7" y2="123.8" stroke="#51757e" stroke-width="1.3" opacity=".7"/>
<line x1="121.0" y1="167.2" x2="125.5" y2="167.6" stroke="#51757e" stroke-width="1.3" opacity=".7"/>
<line x1="78.7" y1="116.5" x2="81.1" y2="119.9" stroke="#51757e" stroke-width="1.3" opacity=".7"/>
<line x1="104.2" y1="98.0" x2="101.0" y2="99.7" stroke="#51757e" stroke-width="1.3" opacity=".7"/>
<line x1="78.3" y1="148.8" x2="84.1" y2="151.1" stroke="#51757e" stroke-width="1.3" opacity=".7"/>
<line x1="250.3" y1="144.1" x2="254.3" y2="149.3" stroke="#51757e" stroke-width="1.3" opacity=".7"/>
<line x1="147.2" y1="104.1" x2="145.3" y2="110.8" stroke="#51757e" stroke-width="1.3" opacity=".7"/>
<line x1="145.1" y1="108.5" x2="148.4" y2="109.0" stroke="#51757e" stroke-width="1.3" opacity=".7"/>
<line x1="96.9" y1="159.3" x2="93.6" y2="160.0" stroke="#51757e" stroke-width="1.3" opacity=".7"/>
<line x1="124.4" y1="88.2" x2="128.1" y2="90.8" stroke="#51757e" stroke-width="1.3" opacity=".7"/>
<line x1="147.4" y1="174.5" x2="142.1" y2="178.1" stroke="#51757e" stroke-width="1.3" opacity=".7"/>
<line x1="195.3" y1="169.2" x2="194.3" y2="175.8" stroke="#51757e" stroke-width="1.3" opacity=".7"/>
<line x1="211.8" y1="61.2" x2="212.7" y2="66.8" stroke="#51757e" stroke-width="1.3" opacity=".7"/>
<line x1="218.0" y1="135.6" x2="221.4" y2="136.1" stroke="#51757e" stroke-width="1.3" opacity=".7"/>
<line x1="250.4" y1="70.9" x2="252.4" y2="74.8" stroke="#51757e" stroke-width="1.3" opacity=".7"/>
<line x1="133.4" y1="147.4" x2="138.1" y2="152.4" stroke="#51757e" stroke-width="1.3" opacity=".7"/>
<line x1="200.0" y1="92.6" x2="201.6" y2="97.1" stroke="#51757e" stroke-width="1.3" opacity=".7"/>
<line x1="109.1" y1="75.2" x2="106.2" y2="76.1" stroke="#51757e" stroke-width="1.3" opacity=".7"/>
<line x1="170.5" y1="82.5" x2="163.9" y2="82.6" stroke="#51757e" stroke-width="1.3" opacity=".7"/>
<line x1="161.7" y1="72.4" x2="164.5" y2="73.3" stroke="#51757e" stroke-width="1.3" opacity=".7"/>
<line x1="141.6" y1="66.4" x2="143.8" y2="68.7" stroke="#51757e" stroke-width="1.3" opacity=".7"/>
<line x1="183.9" y1="165.9" x2="185.5" y2="171.4" stroke="#51757e" stroke-width="1.3" opacity=".7"/>
<line x1="155.0" y1="120.5" x2="156.9" y2="123.9" stroke="#51757e" stroke-width="1.3" opacity=".7"/>
<line x1="89.5" y1="89.7" x2="95.9" y2="92.3" stroke="#51757e" stroke-width="1.3" opacity=".7"/>
<line x1="171.6" y1="133.7" x2="176.5" y2="137.7" stroke="#51757e" stroke-width="1.3" opacity=".7"/>
<line x1="128.4" y1="86.1" x2="129.1" y2="90.0" stroke="#51757e" stroke-width="1.3" opacity=".7"/>
<line x1="255.4" y1="161.1" x2="261.8" y2="161.5" stroke="#51757e" stroke-width="1.3" opacity=".7"/>
<line x1="84.0" y1="143.7" x2="84.5" y2="150.1" stroke="#51757e" stroke-width="1.3" opacity=".7"/>
<line x1="187.2" y1="55.0" x2="183.4" y2="55.9" stroke="#51757e" stroke-width="1.3" opacity=".7"/>
<line x1="231.6" y1="161.9" x2="236.4" y2="166.8" stroke="#51757e" stroke-width="1.3" opacity=".7"/>
<line x1="98.3" y1="74.3" x2="95.8" y2="78.2" stroke="#51757e" stroke-width="1.3" opacity=".7"/>
<line x1="253.1" y1="145.2" x2="249.3" y2="148.7" stroke="#51757e" stroke-width="1.3" opacity=".7"/>
<line x1="163.1" y1="123.9" x2="161.4" y2="125.3" stroke="#51757e" stroke-width="1.3" opacity=".7"/>
<line x1="121.3" y1="170.0" x2="124.3" y2="174.3" stroke="#51757e" stroke-width="1.3" opacity=".7"/>
<line x1="101.8" y1="86.5" x2="98.8" y2="90.7" stroke="#51757e" stroke-width="1.3" opacity=".7"/>
<line x1="98.9" y1="63.8" x2="97.7" y2="68.3" stroke="#51757e" stroke-width="1.3" opacity=".7"/>
<line x1="150.2" y1="82.9" x2="155.2" y2="83.1" stroke="#51757e" stroke-width="1.3" opacity=".7"/>
<line x1="134.1" y1="112.6" x2="131.1" y2="118.7" stroke="#51757e" stroke-width="1.3" opacity=".7"/>
<line x1="242.4" y1="114.4" x2="244.6" y2="116.6" stroke="#51757e" stroke-width="1.3" opacity=".7"/>
<line x1="256.7" y1="143.1" x2="260.2" y2="143.3" stroke="#51757e" stroke-width="1.3" opacity=".7"/>
<line x1="170.7" y1="139.3" x2="173.5" y2="142.3" stroke="#51757e" stroke-width="1.3" opacity=".7"/>
<line x1="202.1" y1="170.6" x2="205.2" y2="171.0" stroke="#51757e" stroke-width="1.3" opacity=".7"/>
<line x1="140.9" y1="107.6" x2="145.3" y2="110.7" stroke="#51757e" stroke-width="1.3" opacity=".7"/>
<line x1="226.3" y1="147.4" x2="229.9" y2="150.1" stroke="#51757e" stroke-width="1.3" opacity=".7"/>
<line x1="258.4" y1="94.0" x2="263.0" y2="98.0" stroke="#51757e" stroke-width="1.3" opacity=".7"/>
<line x1="119.2" y1="150.1" x2="115.8" y2="150.6" stroke="#51757e" stroke-width="1.3" opacity=".7"/>
<line x1="170.2" y1="78.4" x2="171.0" y2="81.4" stroke="#51757e" stroke-width="1.3" opacity=".7"/>
<line x1="201.7" y1="173.6" x2="202.6" y2="176.2" stroke="#51757e" stroke-width="1.3" opacity=".7"/>
<line x1="117.6" y1="176.8" x2="120.3" y2="177.2" stroke="#51757e" stroke-width="1.3" opacity=".7"/>
<line x1="89.2" y1="104.2" x2="83.1" y2="106.5" stroke="#51757e" stroke-width="1.3" opacity=".7"/>
<line x1="214.3" y1="179.7" x2="217.7" y2="185.4" stroke="#51757e" stroke-width="1.3" opacity=".7"/>
<line x1="112.5" y1="172.0" x2="118.2" y2="172.6" stroke="#51757e" stroke-width="1.3" opacity=".7"/>
<line x1="201.6" y1="102.3" x2="203.5" y2="105.7" stroke="#51757e" stroke-width="1.3" opacity=".7"/>
<line x1="109.5" y1="55.4" x2="111.0" y2="58.4" stroke="#51757e" stroke-width="1.3" opacity=".7"/>
<line x1="255.7" y1="70.5" x2="261.2" y2="74.6" stroke="#51757e" stroke-width="1.3" opacity=".7"/>
<line x1="144.3" y1="157.7" x2="145.6" y2="163.7" stroke="#51757e" stroke-width="1.3" opacity=".7"/>
<line x1="87.2" y1="114.2" x2="83.4" y2="115.2" stroke="#51757e" stroke-width="1.3" opacity=".7"/>
<line x1="113.9" y1="100.5" x2="120.4" y2="101.1" stroke="#51757e" stroke-width="1.3" opacity=".7"/>
<line x1="154.4" y1="156.5" x2="160.2" y2="157.2" stroke="#51757e" stroke-width="1.3" opacity=".7"/>
<line x1="84.5" y1="62.8" x2="89.0" y2="67.6" stroke="#51757e" stroke-width="1.3" opacity=".7"/>
<line x1="217.0" y1="167.3" x2="219.4" y2="170.1" stroke="#51757e" stroke-width="1.3" opacity=".7"/>
<line x1="256.1" y1="132.1" x2="254.0" y2="134.7" stroke="#51757e" stroke-width="1.3" opacity=".7"/>
<line x1="136.9" y1="89.5" x2="135.4" y2="90.9" stroke="#51757e" stroke-width="1.3" opacity=".7"/>
<line x1="248.5" y1="134.2" x2="255.2" y2="134.8" stroke="#51757e" stroke-width="1.3" opacity=".7"/>
<line x1="121.5" y1="114.4" x2="114.8" y2="115.4" stroke="#51757e" stroke-width="1.3" opacity=".7"/>
<line x1="149.9" y1="86.4" x2="150.0" y2="90.5" stroke="#51757e" stroke-width="1.3" opacity=".7"/>
<line x1="250.6" y1="77.9" x2="246.5" y2="82.3" stroke="#51757e" stroke-width="1.3" opacity=".7"/>
<line x1="231.0" y1="151.6" x2="233.6" y2="155.9" stroke="#51757e" stroke-width="1.3" opacity=".7"/>
<line x1="137.4" y1="100.2" x2="143.2" y2="101.7" stroke="#51757e" stroke-width="1.3" opacity=".7"/>
<line x1="114.7" y1="149.1" x2="117.9" y2="149.8" stroke="#51757e" stroke-width="1.3" opacity=".7"/>
<line x1="84.3" y1="124.1" x2="80.7" y2="124.3" stroke="#51757e" stroke-width="1.3" opacity=".7"/>
<line x1="242.3" y1="178.5" x2="245.5" y2="179.3" stroke="#51757e" stroke-width="1.3" opacity=".7"/>
<line x1="95.9" y1="117.3" x2="96.9" y2="122.8" stroke="#51757e" stroke-width="1.3" opacity=".7"/>
<line x1="121.6" y1="107.1" x2="118.9" y2="111.5" stroke="#51757e" stroke-width="1.3" opacity=".7"/>
<line x1="217.1" y1="160.9" x2="222.1" y2="162.8" stroke="#51757e" stroke-width="1.3" opacity=".7"/>
<line x1="234.4" y1="91.7" x2="236.3" y2="96.2" stroke="#51757e" stroke-width="1.3" opacity=".7"/>
<line x1="215.3" y1="79.9" x2="217.6" y2="82.2" stroke="#51757e" stroke-width="1.3" opacity=".7"/>
<line x1="106.5" y1="165.5" x2="109.1" y2="169.7" stroke="#51757e" stroke-width="1.3" opacity=".7"/>
<line x1="151.7" y1="179.1" x2="155.1" y2="182.1" stroke="#51757e" stroke-width="1.3" opacity=".7"/>
<line x1="228.4" y1="136.7" x2="235.0" y2="138.9" stroke="#51757e" stroke-width="1.3" opacity=".7"/>
<line x1="166.3" y1="157.4" x2="160.3" y2="159.0" stroke="#51757e" stroke-width="1.3" opacity=".7"/>
<line x1="85.5" y1="91.7" x2="87.7" y2="93.2" stroke="#51757e" stroke-width="1.3" opacity=".7"/>
<line x1="259.0" y1="127.9" x2="261.6" y2="134.0" stroke="#51757e" stroke-width="1.3" opacity=".7"/>
<line x1="239.1" y1="111.1" x2="236.6" y2="113.3" stroke="#51757e" stroke-width="1.3" opacity=".7"/>
<line x1="253.9" y1="68.2" x2="252.1" y2="72.9" stroke="#51757e" stroke-width="1.3" opacity=".7"/>
<line x1="118.5" y1="101.1" x2="120.7" y2="102.7" stroke="#51757e" stroke-width="1.3" opacity=".7"/>
<line x1="125.4" y1="129.9" x2="129.6" y2="133.1" stroke="#51757e" stroke-width="1.3" opacity=".7"/>
<text x="93" y="11" font-family="Liberation Sans" font-size="5.6" letter-spacing="5.2" fill="#a9c2c7">WEST AND EAST FALKLANDS</text>
<text x="58.4" y="28.6" font-family="Liberation Sans" font-size="6" fill="#c9c67a" font-style="italic" text-anchor="middle">Jason Is.</text>
<text x="178.2" y="37.4" font-family="Liberation Sans" font-size="6" fill="#c9c67a" font-style="italic" text-anchor="middle" transform="rotate(20 178.2 37.4)">Pebble Is.</text>
<text x="126.2" y="62.7" font-family="Liberation Sans" font-size="5.5" fill="#2c3f40" font-style="italic" text-anchor="middle" transform="rotate(30 126.2 62.7)">Byron Sound</text>
<text x="100.3" y="69.0" font-family="Liberation Sans" font-size="5.5" fill="#2c4248" font-style="italic" text-anchor="middle">King</text>
<text x="100.3" y="75.3" font-family="Liberation Sans" font-size="5.5" fill="#2c4248" font-style="italic" text-anchor="middle">George</text>
<text x="100.3" y="81.6" font-family="Liberation Sans" font-size="5.5" fill="#2c4248" font-style="italic" text-anchor="middle">Bay</text>
<text x="164.0" y="90.1" font-family="Liberation Sans" font-size="6" fill="#e0e070" font-style="italic" text-anchor="middle">2300'</text>
<text x="74.1" y="102.1" font-family="Liberation Sans" font-size="6" fill="#c9c67a" font-style="italic" text-anchor="middle">New Is.</text>
<text x="47.3" y="124.2" font-family="Liberation Sans" font-size="6" fill="#c9c67a" font-style="italic" text-anchor="middle" transform="rotate(35 47.3 124.2)">Beaver Is.</text>
<text x="106.6" y="117.2" font-family="Liberation Sans" font-size="5.5" fill="#2c4248" font-style="italic" text-anchor="middle">Queen</text>
<text x="106.6" y="123.6" font-family="Liberation Sans" font-size="5.5" fill="#2c4248" font-style="italic" text-anchor="middle">Charlotte</text>
<text x="106.6" y="129.9" font-family="Liberation Sans" font-size="5.5" fill="#2c4248" font-style="italic" text-anchor="middle">Bay</text>
<text x="63.1" y="140.0" font-family="Liberation Sans" font-size="6" fill="#c9c67a" font-style="italic" text-anchor="middle">Weddell Is.</text>
<text x="167" y="154" font-family="Liberation Sans" font-size="5.8" letter-spacing="2.6" fill="#2a4850" transform="rotate(-62 167 154)">Falkland Sound</text>
<text x="102.5" y="180.3" font-family="Liberation Sans" font-size="6" fill="#c9c67a" font-style="italic" text-anchor="middle">Cape</text>
<text x="102.5" y="186.6" font-family="Liberation Sans" font-size="6" fill="#c9c67a" font-style="italic" text-anchor="middle">Meredith</text>
<text x="236.6" y="173.1" font-family="Liberation Sans" font-size="5.5" fill="#2c3f40" font-style="italic" text-anchor="middle" transform="rotate(25 236.6 173.1)">Bay of Harbours</text>
<text x="229.7" y="180.3" font-family="Liberation Sans" font-size="6" fill="#c9c67a" font-style="italic" text-anchor="middle">Bull</text>
<text x="229.7" y="186.6" font-family="Liberation Sans" font-size="6" fill="#c9c67a" font-style="italic" text-anchor="middle">Point</text>
<text x="192.4" y="181.0" font-family="Liberation Sans" font-size="5.5" fill="#2c3f40" font-style="italic" text-anchor="middle" transform="rotate(50 192.4 181.0)">Eagle Pass.</text>
<text x="254.9" y="28.9" font-family="Liberation Sans" font-size="6" fill="#c9c67a" font-style="italic" text-anchor="middle">Cape</text>
<text x="254.9" y="35.2" font-family="Liberation Sans" font-size="6" fill="#c9c67a" font-style="italic" text-anchor="middle">Dolph</text>
<text x="242.9" y="48.5" font-family="Liberation Sans" font-size="5.5" fill="#2c3f40" font-style="italic" text-anchor="middle" transform="rotate(70 242.9 48.5)">Foul Bay</text>
<rect x="102.5" y="29.5" width="11.5" height="8" fill="#161616"/>
<polygon points="109.0,37.0 112.5,37.0 112.6,46.9" fill="#161616"/>
<text x="108.3" y="36.4" font-family="Liberation Sans" font-weight="bold" font-size="7.4" fill="#fff" text-anchor="middle">02</text>
<circle cx="112.6" cy="46.9" r="2.1" fill="#fff"/>
<rect x="85.2" y="51.0" width="11.5" height="8" fill="#161616"/>
<polygon points="96.7,52.5 96.7,58.0 104.7,57.9" fill="#161616"/>
<text x="90.9" y="57.9" font-family="Liberation Sans" font-weight="bold" font-size="7.4" fill="#fff" text-anchor="middle">26</text>
<circle cx="104.7" cy="57.9" r="2.1" fill="#fff"/>
<rect x="153.0" y="43.7" width="11.5" height="8" fill="#161616"/>
<polygon points="154.5,51.2 158.0,51.2 152.4,58.9" fill="#161616"/>
<text x="158.7" y="50.6" font-family="Liberation Sans" font-weight="bold" font-size="7.4" fill="#fff" text-anchor="middle">20</text>
<circle cx="152.4" cy="58.9" r="2.1" fill="#fff"/>
<rect x="193.1" y="32.7" width="11.5" height="8" fill="#161616"/>
<polygon points="194.6,40.2 198.1,40.2 192.4,48.5" fill="#161616"/>
<text x="198.8" y="39.6" font-family="Liberation Sans" font-weight="bold" font-size="7.4" fill="#fff" text-anchor="middle">11</text>
<circle cx="192.4" cy="48.5" r="2.1" fill="#fff"/>
<rect x="203.5" y="44.7" width="11.5" height="8" fill="#161616"/>
<polygon points="203.5,46.2 203.5,51.7 196.2,51.6" fill="#161616"/>
<text x="209.2" y="51.6" font-family="Liberation Sans" font-weight="bold" font-size="7.4" fill="#fff" text-anchor="middle">16</text>
<circle cx="196.2" cy="51.6" r="2.1" fill="#fff"/>
<rect x="157.7" y="69.0" width="11.5" height="8" fill="#161616"/>
<polygon points="157.7,70.5 157.7,76.0 149.2,76.2" fill="#161616"/>
<text x="163.5" y="75.9" font-family="Liberation Sans" font-weight="bold" font-size="7.4" fill="#fff" text-anchor="middle">08</text>
<circle cx="149.2" cy="76.2" r="2.1" fill="#fff"/>
<rect x="189.9" y="66.8" width="11.5" height="8" fill="#161616"/>
<polygon points="196.4,74.3 199.9,74.3 200.9,82.5" fill="#161616"/>
<text x="195.7" y="73.7" font-family="Liberation Sans" font-weight="bold" font-size="7.4" fill="#fff" text-anchor="middle">14</text>
<circle cx="200.9" cy="82.5" r="2.1" fill="#fff"/>
<rect x="112.6" y="81.6" width="11.5" height="8" fill="#161616"/>
<polygon points="124.1,83.1 124.1,88.6 131.9,81.0" fill="#161616"/>
<text x="118.4" y="88.5" font-family="Liberation Sans" font-weight="bold" font-size="7.4" fill="#fff" text-anchor="middle">17</text>
<circle cx="131.9" cy="81.0" r="2.1" fill="#fff"/>
<rect x="182.3" y="88.9" width="11.5" height="8" fill="#161616"/>
<polygon points="193.8,90.4 193.8,95.9 200.9,89.5" fill="#161616"/>
<text x="188.1" y="95.8" font-family="Liberation Sans" font-weight="bold" font-size="7.4" fill="#fff" text-anchor="middle">13</text>
<circle cx="200.9" cy="89.5" r="2.1" fill="#fff"/>
<rect x="128.4" y="94.2" width="11.5" height="8" fill="#161616"/>
<polygon points="129.9,101.7 133.4,101.7 128.4,109.4" fill="#161616"/>
<text x="134.1" y="101.1" font-family="Liberation Sans" font-weight="bold" font-size="7.4" fill="#fff" text-anchor="middle">05</text>
<circle cx="128.4" cy="109.4" r="2.1" fill="#fff"/>
<rect x="101.6" y="102.1" width="11.5" height="8" fill="#161616"/>
<polygon points="113.1,103.6 113.1,109.1 120.5,109.4" fill="#161616"/>
<text x="107.3" y="109.0" font-family="Liberation Sans" font-weight="bold" font-size="7.4" fill="#fff" text-anchor="middle">22</text>
<circle cx="120.5" cy="109.4" r="2.1" fill="#fff"/>
<rect x="166.6" y="103.7" width="11.5" height="8" fill="#161616"/>
<polygon points="166.6,105.2 166.6,110.7 157.7,103.7" fill="#161616"/>
<text x="172.3" y="110.6" font-family="Liberation Sans" font-weight="bold" font-size="7.4" fill="#fff" text-anchor="middle">03</text>
<circle cx="157.7" cy="103.7" r="2.1" fill="#fff"/>
<rect x="159.3" y="116.3" width="11.5" height="8" fill="#161616"/>
<polygon points="160.8,123.8 164.3,123.8 158.7,133.0" fill="#161616"/>
<text x="165.1" y="123.2" font-family="Liberation Sans" font-weight="bold" font-size="7.4" fill="#fff" text-anchor="middle">06</text>
<circle cx="158.7" cy="133.0" r="2.1" fill="#fff"/>
<rect x="126.2" y="127.3" width="11.5" height="8" fill="#161616"/>
<polygon points="126.2,128.8 126.2,134.3 126.2,118.8" fill="#161616"/>
<text x="131.9" y="134.2" font-family="Liberation Sans" font-weight="bold" font-size="7.4" fill="#fff" text-anchor="middle">24</text>
<circle cx="126.2" cy="118.8" r="2.1" fill="#fff"/>
<rect x="205.0" y="138.4" width="11.5" height="8" fill="#161616"/>
<polygon points="211.5,145.9 215.0,145.9 215.5,153.5" fill="#161616"/>
<text x="210.8" y="145.3" font-family="Liberation Sans" font-weight="bold" font-size="7.4" fill="#fff" text-anchor="middle">10</text>
<circle cx="215.5" cy="153.5" r="2.1" fill="#fff"/>
<rect x="243.5" y="132.1" width="11.5" height="8" fill="#161616"/>
<polygon points="255.0,133.6 255.0,139.1 262.8,132.1" fill="#161616"/>
<text x="249.3" y="139.0" font-family="Liberation Sans" font-weight="bold" font-size="7.4" fill="#fff" text-anchor="middle">25</text>
<circle cx="262.8" cy="132.1" r="2.1" fill="#fff"/>
<rect x="78.9" y="157.3" width="11.5" height="8" fill="#161616"/>
<polygon points="90.4,158.8 90.4,164.3 96.8,155.7" fill="#161616"/>
<text x="84.6" y="164.2" font-family="Liberation Sans" font-weight="bold" font-size="7.4" fill="#fff" text-anchor="middle">15</text>
<circle cx="96.8" cy="155.7" r="2.1" fill="#fff"/>
<rect x="123.7" y="152.6" width="11.5" height="8" fill="#161616"/>
<polygon points="125.2,160.1 128.7,160.1 122.4,168.3" fill="#161616"/>
<text x="129.4" y="159.5" font-family="Liberation Sans" font-weight="bold" font-size="7.4" fill="#fff" text-anchor="middle">12</text>
<circle cx="122.4" cy="168.3" r="2.1" fill="#fff"/>
<rect x="166.6" y="168.3" width="11.5" height="8" fill="#161616"/>
<polygon points="178.1,169.8 178.1,175.3 186.1,168.3" fill="#161616"/>
<text x="172.3" y="175.2" font-family="Liberation Sans" font-weight="bold" font-size="7.4" fill="#fff" text-anchor="middle">23</text>
<circle cx="186.1" cy="168.3" r="2.1" fill="#fff"/>
<rect x="164.7" y="184.1" width="11.5" height="8" fill="#161616"/>
<polygon points="176.2,185.6 176.2,191.1 184.5,184.1" fill="#161616"/>
<text x="170.4" y="191.0" font-family="Liberation Sans" font-weight="bold" font-size="7.4" fill="#fff" text-anchor="middle">07</text>
<circle cx="184.5" cy="184.1" r="2.1" fill="#fff"/>
<rect x="249.2" y="184.1" width="11.5" height="8" fill="#161616"/>
<polygon points="249.2,185.6 249.2,191.1 240.7,192.0" fill="#161616"/>
<text x="255.0" y="191.0" font-family="Liberation Sans" font-weight="bold" font-size="7.4" fill="#fff" text-anchor="middle">21</text>
<circle cx="240.7" cy="192.0" r="2.1" fill="#fff"/>
<rect x="249.2" y="81.6" width="11.5" height="8" fill="#161616"/>
<polygon points="249.2,83.1 249.2,88.6 240.7,82.2" fill="#161616"/>
<text x="255.0" y="88.5" font-family="Liberation Sans" font-weight="bold" font-size="7.4" fill="#fff" text-anchor="middle">19</text>
<circle cx="240.7" cy="82.2" r="2.1" fill="#fff"/>
<rect x="257" y="168" width="8" height="8" fill="#161616"/><polygon points="257.5,168.5 260,168.5 258,162" fill="#161616"/><text x="258" y="175" font-family="Liberation Sans" font-weight="bold" font-size="7.4" fill="#fff">0</text><circle cx="258" cy="162" r="2.1" fill="#fff"/>
<text x="258" y="103" font-family="Liberation Sans" font-style="italic" font-size="6" fill="#e0e070">23</text><text x="259" y="96" font-family="Liberation Sans" font-size="4" fill="#e0e070">▲</text>
<text x="257" y="149" font-family="Liberation Sans" font-style="italic" font-size="5.5" fill="#2c4248">Lo</text><text x="257" y="156" font-family="Liberation Sans" font-style="italic" font-size="5.5" fill="#2c4248">Ba</text>
<polyline points="228.7,27 228.7,70.5 240,71.5" fill="none" stroke="#fff" stroke-width="1"/>
<rect x="170" y="17.700000000000003" width="59.7" height="9.5" fill="#fff"/>
<text x="199.8" y="25.599999999999994" font-family="Liberation Sans" font-weight="bold" font-size="7.6" fill="#111" text-anchor="middle">San Carlos FOB</text>
<polyline points="245,118 245,124 273,124" fill="none" stroke="#fff" stroke-width="1"/>
<circle cx="242" cy="72" r="5" fill="#161616"/><line x1="239.5" y1="70.5" x2="244.5" y2="73.5" stroke="#3aa0e0" stroke-width="1.3"/>
<circle cx="245" cy="113" r="5" fill="#161616"/><line x1="242.5" y1="111.5" x2="247.5" y2="114.5" stroke="#3aa0e0" stroke-width="1.3"/>
<text x="35" y="192" font-family="Liberation Mono" font-size="6" fill="#c8d6d8">Mainland</text>
<text x="35" y="199" font-family="Liberation Mono" font-size="6" fill="#c8d6d8">300 nm / 560 km</text>
<polyline points="32,188 29.5,190.5 32,193" fill="none" stroke="#c8d6d8" stroke-width=".8"/>
</svg>
<div class="a" style="left:29px;top:240.5px;width:111px;height:1.2px;background:#333"></div>
<div class="a b" style="left:143.0px;top:237.3px;font-size:7px;color:#222">UNMARKED AIRFIELDS <span style="color:#888">(HELI / STOL)</span></div>
<div class="a b m" style="left:32.0px;top:251.9px;font-size:7px;color:#222">01 <span style="color:#999;font-weight:normal;font-size:6px">E</span></div>
<div class="a b" style="left:51.0px;top:251.7px;font-size:7.0px;color:#222">Bleaker Is. (Lafonia Point)</div>
<div class="a m b" style="left:51.0px;top:260.9px;font-size:6.8px;letter-spacing:-.18px;color:#c9822a">[093°-1800-273°]</div>
<div class="a m b" style="left:51.0px;top:268.1px;font-size:6.8px;letter-spacing:-.2px"><span class="cb">S52°12'</span><span class="cp">03/.059</span> <u style="color:#222">61</u></div>
<div class="a m b" style="left:51.0px;top:275.5px;font-size:6.8px;letter-spacing:-.2px"><span class="cb">W58°50'</span><span class="cp">59/.985</span> <span style="color:#999;font-weight:normal">*L</span></div>
<div class="a" style="left:33.8px;top:260.9px;width:14.5px;height:17.5px;background:#f6f6f6;border:.6px solid #e0e0e0;border-radius:1.5px"></div>
<svg class="a" style="left:33.8px;top:260.9px" width="14.5" height="17.5"><g transform="translate(7.25 8.75)"><line x1="-4.5" y1="0" x2="4.5" y2="0" stroke="#c9822a" stroke-width="1.6" transform="rotate(3)"/><line x1="-3" y1="0" x2="3" y2="0" stroke="#c9822a" stroke-width="1.5" transform="rotate(78)"/></g></svg>
<div class="a b m" style="left:32.0px;top:284.2px;font-size:7px;color:#222">02 <span style="color:#999;font-weight:normal;font-size:6px">W</span></div>
<div class="a b" style="left:51.0px;top:284.0px;font-size:7.0px;color:#222">Carcass Island</div>
<div class="a m b" style="left:51.0px;top:293.2px;font-size:6.8px;letter-spacing:-.18px;color:#2e9a3a">[041°-2600-221°]</div>
<div class="a m b" style="left:51.0px;top:300.4px;font-size:6.8px;letter-spacing:-.2px"><span class="cb">S51°15'</span><span class="cp">33/.555</span> <u style="color:#222">64</u></div>
<div class="a m b" style="left:51.0px;top:307.8px;font-size:6.8px;letter-spacing:-.2px"><span class="cb">W60°35'</span><span class="cp">34/.580</span> <span style="color:#999;font-weight:normal">*L</span></div>
<div class="a" style="left:33.8px;top:293.2px;width:14.5px;height:17.5px;background:#f6f6f6;border:.6px solid #e0e0e0;border-radius:1.5px"></div>
<svg class="a" style="left:33.8px;top:293.2px" width="14.5" height="17.5"><g transform="translate(7.25 8.75)"><line x1="-4.5" y1="0" x2="4.5" y2="0" stroke="#2e9a3a" stroke-width="1.6" transform="rotate(-49)"/><line x1="-3" y1="0" x2="3" y2="0" stroke="#2e9a3a" stroke-width="1.5" transform="rotate(26)"/></g></svg>
<div class="a b m" style="left:32.0px;top:316.4px;font-size:7px;color:#222">03 <span style="color:#999;font-weight:normal;font-size:6px">W</span></div>
<div class="a b" style="left:51.0px;top:316.2px;font-size:7.0px;color:#222">Chartres</div>
<div class="a m b" style="left:51.0px;top:325.4px;font-size:6.8px;letter-spacing:-.18px;color:#2e9a3a">[097°-1300-277°]</div>
<div class="a m b" style="left:51.0px;top:332.6px;font-size:6.8px;letter-spacing:-.2px"><span class="cb">S51°43'</span><span class="cp">09/.161</span> <u style="color:#222">31</u></div>
<div class="a m b" style="left:51.0px;top:340.0px;font-size:6.8px;letter-spacing:-.2px"><span class="cb">W60°03'</span><span class="cp">43/.724</span></div>
<div class="a" style="left:33.8px;top:325.4px;width:14.5px;height:17.5px;background:#f6f6f6;border:.6px solid #e0e0e0;border-radius:1.5px"></div>
<svg class="a" style="left:33.8px;top:325.4px" width="14.5" height="17.5"><g transform="translate(7.25 8.75)"><line x1="-4.5" y1="0" x2="4.5" y2="0" stroke="#2e9a3a" stroke-width="1.6" transform="rotate(7)"/><line x1="-3" y1="0" x2="3" y2="0" stroke="#2e9a3a" stroke-width="1.5" transform="rotate(82)"/></g></svg>
<div class="a b m" style="left:32.0px;top:348.7px;font-size:7px;color:#222">04 <span style="color:#999;font-weight:normal;font-size:6px">E</span></div>
<div class="a b" style="left:51.0px;top:348.5px;font-size:7.0px;color:#222">Douglas Station</div>
<div class="a m b" style="left:51.0px;top:357.7px;font-size:6.8px;letter-spacing:-.18px;color:#2e9a3a">[052°-1300-232°]</div>
<div class="a m b" style="left:51.0px;top:364.9px;font-size:6.8px;letter-spacing:-.2px"><span class="cb">S51°27'</span><span class="cp">37/.624</span> <u style="color:#222">66</u></div>
<div class="a m b" style="left:51.0px;top:372.3px;font-size:6.8px;letter-spacing:-.2px"><span class="cb">W58°36'</span><span class="cp">48/.800</span> <span style="color:#999;font-weight:normal">*L</span></div>
<div class="a" style="left:33.8px;top:357.7px;width:14.5px;height:17.5px;background:#f6f6f6;border:.6px solid #e0e0e0;border-radius:1.5px"></div>
<svg class="a" style="left:33.8px;top:357.7px" width="14.5" height="17.5"><g transform="translate(7.25 8.75)"><line x1="-4.5" y1="0" x2="4.5" y2="0" stroke="#2e9a3a" stroke-width="1.6" transform="rotate(-38)"/></g></svg>
<div class="a b m" style="left:32.0px;top:380.9px;font-size:7px;color:#222">05 <span style="color:#999;font-weight:normal;font-size:6px">W</span></div>
<div class="a b" style="left:51.0px;top:380.7px;font-size:7.0px;color:#222">Dunnose Head</div>
<div class="a m b" style="left:51.0px;top:389.9px;font-size:6.8px;letter-spacing:-.18px;color:#2e9a3a">[062°-1700-242°]</div>
<div class="a m b" style="left:51.0px;top:397.1px;font-size:6.8px;letter-spacing:-.2px"><span class="cb">S51°45'</span><span class="cp">12/.200</span> <u style="color:#222">45</u></div>
<div class="a m b" style="left:51.0px;top:404.5px;font-size:6.8px;letter-spacing:-.2px"><span class="cb">W60°24'</span><span class="cp">57/.950</span></div>
<div class="a" style="left:33.8px;top:389.9px;width:14.5px;height:17.5px;background:#f6f6f6;border:.6px solid #e0e0e0;border-radius:1.5px"></div>
<svg class="a" style="left:33.8px;top:389.9px" width="14.5" height="17.5"><g transform="translate(7.25 8.75)"><line x1="-4.5" y1="0" x2="4.5" y2="0" stroke="#2e9a3a" stroke-width="1.6" transform="rotate(-28)"/><line x1="-3" y1="0" x2="3" y2="0" stroke="#2e9a3a" stroke-width="1.5" transform="rotate(47)"/></g></svg>
<div class="a b m" style="left:32.0px;top:413.2px;font-size:7px;color:#222">06 <span style="color:#999;font-weight:normal;font-size:6px">W</span></div>
<div class="a b" style="left:51.0px;top:413.0px;font-size:7.0px;color:#222">Fox Bay</div>
<div class="a m b" style="left:51.0px;top:422.2px;font-size:6.8px;letter-spacing:-.18px;color:#c9822a">[003°-2200-183°]</div>
<div class="a m b" style="left:51.0px;top:429.4px;font-size:6.8px;letter-spacing:-.2px"><span class="cb">S51°56'</span><span class="cp">01/.025</span> <u style="color:#222">112</u></div>
<div class="a m b" style="left:51.0px;top:436.8px;font-size:6.8px;letter-spacing:-.2px"><span class="cb">W60°03'</span><span class="cp">41/.696</span></div>
<div class="a" style="left:33.8px;top:422.2px;width:14.5px;height:17.5px;background:#f6f6f6;border:.6px solid #e0e0e0;border-radius:1.5px"></div>
<svg class="a" style="left:33.8px;top:422.2px" width="14.5" height="17.5"><g transform="translate(7.25 8.75)"><line x1="-4.5" y1="0" x2="4.5" y2="0" stroke="#c9822a" stroke-width="1.6" transform="rotate(-87)"/><line x1="-3" y1="0" x2="3" y2="0" stroke="#c9822a" stroke-width="1.5" transform="rotate(-12)"/></g></svg>
<div class="a b m" style="left:32.0px;top:445.5px;font-size:7px;color:#222">07 <span style="color:#999;font-weight:normal;font-size:6px">E</span></div>
<div class="a b" style="left:51.0px;top:445.3px;font-size:7.0px;color:#222">George Island</div>
<div class="a m b" style="left:51.0px;top:454.5px;font-size:6.8px;letter-spacing:-.18px;color:#2e9a3a">[100°-2000-280°]</div>
<div class="a m b" style="left:51.0px;top:461.7px;font-size:6.8px;letter-spacing:-.2px"><span class="cb">S52°20'</span><span class="cp">59/.988</span> <u style="color:#222">24</u></div>
<div class="a m b" style="left:51.0px;top:469.1px;font-size:6.8px;letter-spacing:-.2px"><span class="cb">W59°45'</span><span class="cp">34/.580</span></div>
<div class="a" style="left:33.8px;top:454.5px;width:14.5px;height:17.5px;background:#f6f6f6;border:.6px solid #e0e0e0;border-radius:1.5px"></div>
<svg class="a" style="left:33.8px;top:454.5px" width="14.5" height="17.5"><g transform="translate(7.25 8.75)"><line x1="-4.5" y1="0" x2="4.5" y2="0" stroke="#2e9a3a" stroke-width="1.6" transform="rotate(10)"/><line x1="-3" y1="0" x2="3" y2="0" stroke="#2e9a3a" stroke-width="1.5" transform="rotate(85)"/></g></svg>
<div class="a b m" style="left:32.0px;top:477.7px;font-size:7px;color:#222">08 <span style="color:#999;font-weight:normal;font-size:6px">W</span></div>
<div class="a b" style="left:51.0px;top:477.5px;font-size:7.0px;color:#222">Hill Cove</div>
<div class="a m b" style="left:51.0px;top:486.7px;font-size:6.8px;letter-spacing:-.18px;color:#2e9a3a">[014°-2000-194°]</div>
<div class="a m b" style="left:51.0px;top:493.9px;font-size:6.8px;letter-spacing:-.2px"><span class="cb">S51°30'</span><span class="cp">15/.264</span> <u style="color:#222">74</u></div>
<div class="a m b" style="left:51.0px;top:501.3px;font-size:6.8px;letter-spacing:-.2px"><span class="cb">W60°08'</span><span class="cp">39/.660</span></div>
<div class="a" style="left:33.8px;top:486.7px;width:14.5px;height:17.5px;background:#f6f6f6;border:.6px solid #e0e0e0;border-radius:1.5px"></div>
<svg class="a" style="left:33.8px;top:486.7px" width="14.5" height="17.5"><g transform="translate(7.25 8.75)"><line x1="-4.5" y1="0" x2="4.5" y2="0" stroke="#2e9a3a" stroke-width="1.6" transform="rotate(-76)"/><line x1="-3" y1="0" x2="3" y2="0" stroke="#2e9a3a" stroke-width="1.5" transform="rotate(-1)"/></g></svg>
<div class="a b m" style="left:32.0px;top:510.0px;font-size:7px;color:#222">09 <span style="color:#999;font-weight:normal;font-size:6px">E</span></div>
<div class="a b" style="left:51.0px;top:509.8px;font-size:7.0px;color:#222">Lively Island</div>
<div class="a m b" style="left:51.0px;top:519.0px;font-size:6.8px;letter-spacing:-.18px;color:#2e9a3a">[103°-2000-283°]</div>
<div class="a m b" style="left:51.0px;top:526.2px;font-size:6.8px;letter-spacing:-.2px"><span class="cb">S51°59'</span><span class="cp">45/.759</span> <u style="color:#222">40</u></div>
<div class="a m b" style="left:51.0px;top:533.6px;font-size:6.8px;letter-spacing:-.2px"><span class="cb">W58°27'</span><span class="cp">26/.443</span></div>
<div class="a" style="left:33.8px;top:519.0px;width:14.5px;height:17.5px;background:#f6f6f6;border:.6px solid #e0e0e0;border-radius:1.5px"></div>
<svg class="a" style="left:33.8px;top:519.0px" width="14.5" height="17.5"><g transform="translate(7.25 8.75)"><line x1="-4.5" y1="0" x2="4.5" y2="0" stroke="#2e9a3a" stroke-width="1.6" transform="rotate(13)"/><line x1="-3" y1="0" x2="3" y2="0" stroke="#2e9a3a" stroke-width="1.5" transform="rotate(88)"/></g></svg>
<div class="a b m" style="left:159.0px;top:251.9px;font-size:7px;color:#222">10 <span style="color:#999;font-weight:normal;font-size:6px">E</span></div>
<div class="a b" style="left:177.0px;top:251.7px;font-size:7.0px;color:#222">North Arm</div>
<div class="a m b" style="left:177.0px;top:260.9px;font-size:6.8px;letter-spacing:-.18px;color:#2e9a3a">[032°-1200-212°]</div>
<div class="a m b" style="left:177.0px;top:268.1px;font-size:6.8px;letter-spacing:-.2px"><span class="cb">S52°07'</span><span class="cp">27/.450</span> <u style="color:#222">37</u></div>
<div class="a m b" style="left:177.0px;top:275.5px;font-size:6.8px;letter-spacing:-.2px"><span class="cb">W59°22'</span><span class="cp">17/.285</span></div>
<div class="a" style="left:160.8px;top:260.9px;width:14.5px;height:17.5px;background:#f6f6f6;border:.6px solid #e0e0e0;border-radius:1.5px"></div>
<svg class="a" style="left:160.8px;top:260.9px" width="14.5" height="17.5"><g transform="translate(7.25 8.75)"><line x1="-4.5" y1="0" x2="4.5" y2="0" stroke="#2e9a3a" stroke-width="1.6" transform="rotate(-58)"/></g></svg>
<div class="a b m" style="left:159.0px;top:284.2px;font-size:7px;color:#222">11 <span style="color:#999;font-weight:normal;font-size:6px">W</span></div>
<div class="a b" style="left:177.0px;top:284.0px;font-size:7.0px;color:#222">Pebble Island</div>
<div class="a m b" style="left:177.0px;top:293.2px;font-size:6.8px;letter-spacing:-.18px;color:#2e9a3a">[131°-2000-311°]</div>
<div class="a m b" style="left:177.0px;top:300.4px;font-size:6.8px;letter-spacing:-.2px"><span class="cb">S51°18'</span><span class="cp">31/.531</span> <u style="color:#222">104</u></div>
<div class="a m b" style="left:177.0px;top:307.8px;font-size:6.8px;letter-spacing:-.2px"><span class="cb">W59°36'</span><span class="cp">37/.617</span> <span style="color:#999;font-weight:normal">*B</span></div>
<div class="a" style="left:160.8px;top:293.2px;width:14.5px;height:17.5px;background:#f6f6f6;border:.6px solid #e0e0e0;border-radius:1.5px"></div>
<svg class="a" style="left:160.8px;top:293.2px" width="14.5" height="17.5"><g transform="translate(7.25 8.75)"><line x1="-4.5" y1="0" x2="4.5" y2="0" stroke="#2e9a3a" stroke-width="1.6" transform="rotate(41)"/><line x1="-3" y1="0" x2="3" y2="0" stroke="#2e9a3a" stroke-width="1.5" transform="rotate(116)"/></g></svg>
<div class="a b m" style="left:159.0px;top:316.4px;font-size:7px;color:#222">12 <span style="color:#999;font-weight:normal;font-size:6px">W</span></div>
<div class="a b" style="left:177.0px;top:316.2px;font-size:7.0px;color:#222">Port Albemarle</div>
<div class="a m b" style="left:177.0px;top:325.4px;font-size:6.8px;letter-spacing:-.18px;color:#2e9a3a">[121°-1900-301°]</div>
<div class="a m b" style="left:177.0px;top:332.6px;font-size:6.8px;letter-spacing:-.2px"><span class="cb">S52°12'</span><span class="cp">20/.338</span> <u style="color:#222">239</u></div>
<div class="a m b" style="left:177.0px;top:340.0px;font-size:6.8px;letter-spacing:-.2px"><span class="cb">W60°32'</span><span class="cp">05/.088</span> <span style="color:#999;font-weight:normal">*B</span></div>
<div class="a" style="left:160.8px;top:325.4px;width:14.5px;height:17.5px;background:#f6f6f6;border:.6px solid #e0e0e0;border-radius:1.5px"></div>
<svg class="a" style="left:160.8px;top:325.4px" width="14.5" height="17.5"><g transform="translate(7.25 8.75)"><line x1="-4.5" y1="0" x2="4.5" y2="0" stroke="#2e9a3a" stroke-width="1.6" transform="rotate(31)"/><line x1="-3" y1="0" x2="3" y2="0" stroke="#2e9a3a" stroke-width="1.5" transform="rotate(106)"/></g></svg>
<div class="a b m" style="left:159.0px;top:348.7px;font-size:7px;color:#222">13 <span style="color:#999;font-weight:normal;font-size:6px">W</span></div>
<div class="a b" style="left:177.0px;top:348.5px;font-size:7.0px;color:#222">Port Howard</div>
<div class="a m b" style="left:177.0px;top:357.7px;font-size:6.8px;letter-spacing:-.18px;color:#2e9a3a">[015°-1300-195°]</div>
<div class="a m b" style="left:177.0px;top:364.9px;font-size:6.8px;letter-spacing:-.2px"><span class="cb">S51°36'</span><span class="cp">45/.760</span> <u style="color:#222">57</u></div>
<div class="a m b" style="left:177.0px;top:372.3px;font-size:6.8px;letter-spacing:-.2px"><span class="cb">W59°30'</span><span class="cp">58/.985</span> <span style="color:#999;font-weight:normal">*B</span></div>
<div class="a" style="left:160.8px;top:357.7px;width:14.5px;height:17.5px;background:#f6f6f6;border:.6px solid #e0e0e0;border-radius:1.5px"></div>
<svg class="a" style="left:160.8px;top:357.7px" width="14.5" height="17.5"><g transform="translate(7.25 8.75)"><line x1="-4.5" y1="0" x2="4.5" y2="0" stroke="#2e9a3a" stroke-width="1.6" transform="rotate(-75)"/></g></svg>
<div class="a b m" style="left:159.0px;top:380.9px;font-size:7px;color:#222">14 <span style="color:#999;font-weight:normal;font-size:6px">W</span></div>
<div class="a b" style="left:177.0px;top:380.7px;font-size:7.0px;color:#222">Port Howard Purvis Pond</div>
<div class="a m b" style="left:177.0px;top:389.9px;font-size:6.8px;letter-spacing:-.18px;color:#2e9a3a">[108°-1800-288°]</div>
<div class="a m b" style="left:177.0px;top:397.1px;font-size:6.8px;letter-spacing:-.2px"><span class="cb">S51°34'</span><span class="cp">02/.035</span> <u style="color:#222">180</u></div>
<div class="a m b" style="left:177.0px;top:404.5px;font-size:6.8px;letter-spacing:-.2px"><span class="cb">W59°32'</span><span class="cp">07/.126</span></div>
<div class="a" style="left:160.8px;top:389.9px;width:14.5px;height:17.5px;background:#f6f6f6;border:.6px solid #e0e0e0;border-radius:1.5px"></div>
<svg class="a" style="left:160.8px;top:389.9px" width="14.5" height="17.5"><g transform="translate(7.25 8.75)"><line x1="-4.5" y1="0" x2="4.5" y2="0" stroke="#2e9a3a" stroke-width="1.6" transform="rotate(18)"/></g></svg>
<div class="a b m" style="left:159.0px;top:413.2px;font-size:7px;color:#222">15 <span style="color:#999;font-weight:normal;font-size:6px">W</span></div>
<div class="a b" style="left:177.0px;top:413.0px;font-size:7.0px;color:#222">Port Stephens</div>
<div class="a m b" style="left:177.0px;top:422.2px;font-size:6.8px;letter-spacing:-.18px;color:#2e9a3a">[131°-1900-311°]</div>
<div class="a m b" style="left:177.0px;top:429.4px;font-size:6.8px;letter-spacing:-.2px"><span class="cb">S52°05'</span><span class="cp">42/.706</span> <u style="color:#222">97</u></div>
<div class="a m b" style="left:177.0px;top:436.8px;font-size:6.8px;letter-spacing:-.2px"><span class="cb">W60°51'</span><span class="cp">06/.104</span></div>
<div class="a" style="left:160.8px;top:422.2px;width:14.5px;height:17.5px;background:#f6f6f6;border:.6px solid #e0e0e0;border-radius:1.5px"></div>
<svg class="a" style="left:160.8px;top:422.2px" width="14.5" height="17.5"><g transform="translate(7.25 8.75)"><line x1="-4.5" y1="0" x2="4.5" y2="0" stroke="#2e9a3a" stroke-width="1.6" transform="rotate(41)"/></g></svg>
<div class="a b m" style="left:159.0px;top:445.5px;font-size:7px;color:#222">16 <span style="color:#999;font-weight:normal;font-size:6px">W</span></div>
<div class="a b" style="left:177.0px;top:445.3px;font-size:7.0px;color:#222">Puerto Calderon</div>
<div class="a m b" style="left:177.0px;top:454.5px;font-size:6.8px;letter-spacing:-.18px;color:#c9822a">[102°-1200-282°]</div>
<div class="a m b" style="left:177.0px;top:461.7px;font-size:6.8px;letter-spacing:-.2px"><span class="cb">S51°19'</span><span class="cp">52/.879</span> <u style="color:#222">56</u></div>
<div class="a m b" style="left:177.0px;top:469.1px;font-size:6.8px;letter-spacing:-.2px"><span class="cb">W59°34'</span><span class="cp">50/.841</span></div>
<div class="a" style="left:160.8px;top:454.5px;width:14.5px;height:17.5px;background:#f6f6f6;border:.6px solid #e0e0e0;border-radius:1.5px"></div>
<svg class="a" style="left:160.8px;top:454.5px" width="14.5" height="17.5"><g transform="translate(7.25 8.75)"><line x1="-4.5" y1="0" x2="4.5" y2="0" stroke="#c9822a" stroke-width="1.6" transform="rotate(12)"/></g></svg>
<div class="a b m" style="left:159.0px;top:477.7px;font-size:7px;color:#222">17 <span style="color:#999;font-weight:normal;font-size:6px">W</span></div>
<div class="a b" style="left:177.0px;top:477.5px;font-size:7.0px;color:#222">Roy Cove</div>
<div class="a m b" style="left:177.0px;top:486.7px;font-size:6.8px;letter-spacing:-.18px;color:#2e9a3a">[103°-1800-283°]</div>
<div class="a m b" style="left:177.0px;top:493.9px;font-size:6.8px;letter-spacing:-.2px"><span class="cb">S51°32'</span><span class="cp">22/.380</span> <u style="color:#222">80</u></div>
<div class="a m b" style="left:177.0px;top:501.3px;font-size:6.8px;letter-spacing:-.2px"><span class="cb">W60°21'</span><span class="cp">24/.405</span> <span style="color:#999;font-weight:normal">*L</span></div>
<div class="a" style="left:160.8px;top:486.7px;width:14.5px;height:17.5px;background:#f6f6f6;border:.6px solid #e0e0e0;border-radius:1.5px"></div>
<svg class="a" style="left:160.8px;top:486.7px" width="14.5" height="17.5"><g transform="translate(7.25 8.75)"><line x1="-4.5" y1="0" x2="4.5" y2="0" stroke="#2e9a3a" stroke-width="1.6" transform="rotate(13)"/></g></svg>
<div class="a b m" style="left:159.0px;top:510.0px;font-size:7px;color:#222">18 <span style="color:#999;font-weight:normal;font-size:6px">E</span></div>
<div class="a b" style="left:177.0px;top:509.8px;font-size:7.0px;color:#222">Salvador</div>
<div class="a m b" style="left:177.0px;top:519.0px;font-size:6.8px;letter-spacing:-.18px;color:#2e9a3a">[045°-1500-225°]</div>
<div class="a m b" style="left:177.0px;top:526.2px;font-size:6.8px;letter-spacing:-.2px"><span class="cb">S51°26'</span><span class="cp">11/.198</span> <u style="color:#222">78</u></div>
<div class="a m b" style="left:177.0px;top:533.6px;font-size:6.8px;letter-spacing:-.2px"><span class="cb">W58°22'</span><span class="cp">42/.712</span></div>
<div class="a" style="left:160.8px;top:519.0px;width:14.5px;height:17.5px;background:#f6f6f6;border:.6px solid #e0e0e0;border-radius:1.5px"></div>
<svg class="a" style="left:160.8px;top:519.0px" width="14.5" height="17.5"><g transform="translate(7.25 8.75)"><line x1="-4.5" y1="0" x2="4.5" y2="0" stroke="#2e9a3a" stroke-width="1.6" transform="rotate(-45)"/></g></svg>
<div class="a " style="left:48.6px;top:552.8px;font-size:6.3px;color:#777"><span class="co m">[093°-1800-273°]</span> - MAGNETIC HEADINGS, SURFACE (<span class="cg b">GRASS</span>, <span class="co b">DIRT/GRAVEL</span>, ASPHALT)</div>
<div class="a " style="left:56.8px;top:561.3px;font-size:6.3px;color:#777">*B - BUMPY, UNEVEN &nbsp;&nbsp;&nbsp; *L - LIT RUNWAY &nbsp;&nbsp;&nbsp; <u style="color:#222">61</u> <span style="color:#222">- ELEVATION (ft)</span> &nbsp;&nbsp;&nbsp; <span class="cb">N12°34'56</span></div>
</div>
<div class="pg" style="left:521px;top:47px;width:429.7px;height:572.7px;box-shadow:0 3px 12px rgba(0,0,0,.24);background:#f3f3f3">
<div class="ad" style="left:25px;top:1px">AD</div>
<div class="ttl" style="left:51px;top:3.5px">South Atlantic <span style="color:#1f5ba6;font-weight:normal">Lite</span></div>
<div class="a " style="left:156.0px;top:2.5px;font-size:6.4px;color:#555"><span style="color:#2f8fe0;font-size:9px;line-height:6px">●</span> UK <span style="color:#33b040;font-size:9px;line-height:6px">●</span> Chile</div>
<div class="a " style="left:156.0px;top:10.0px;font-size:6.4px;color:#555"><span style="color:#e8442a;font-size:9px;line-height:6px">●</span> Argentina</div>
<div class="a " style="left:208.0px;top:2.5px;font-size:6.4px;color:#222"><i><b>[TACAN]</b></i></div>
<div class="a " style="left:202.0px;top:10.0px;font-size:6.4px"><b class="cm">[VOR]</b> <b class="co">[NDB]</b></div>
<div class="a " style="left:248.0px;top:2.5px;font-size:6.6px;color:#555;letter-spacing:-.2px"><svg width="7" height="5" viewBox="0 0 7 5" style="vertical-align:0px"><path d="M0 0L3.5 2.5L0 5ZM7 0L3.5 2.5L7 5Z" fill="#e8302a"/><rect x="2.6" y="2" width="1.8" height="1" fill="#e8302a"/></svg> Runway shorter than 6000 ft / 1800 m</div>
<div class="a " style="left:244.0px;top:10.0px;font-size:6.6px;color:#555;letter-spacing:-.2px">Magvar oscillates greatly across the map</div>
<div class="a" style="left:365.6px;top:1px;width:39px;height:16.5px;background:#f7e100;font-size:6.8px;line-height:16.5px;text-align:center;font-weight:bold;color:#222">Dim<span style="font-weight:normal">On</span></div>
<svg class="a" style="left:0;top:23px" width="429" height="549" viewBox="0 0 429 549">
<rect width="429" height="549" fill="#476670"/>
<polygon points="0.0,200.0 79.0,200.0 64.0,260.0 85.0,287.0 104.0,320.0 139.0,360.0 179.0,395.0 204.0,410.0 227.0,408.0 249.6,397.6 226.2,408.0 215.8,423.6 200.2,431.4 182.0,428.8 166.4,426.2 145.6,418.4 130.0,410.6 104.0,402.8 85.8,389.8 78.0,374.2 59.8,363.8 52.0,358.6 46.8,345.6 33.0,330.0 23.0,313.0 12.0,294.0 0.0,274.0" fill="#4f4e3b" opacity=".78"/>
<polygon points="61.0,200.0 175.0,200.0 177.0,226.0 169.0,248.0 153.0,258.0 146.0,269.0 150.0,281.0 157.0,294.0 169.0,317.0 175.0,328.0 177.0,338.0 187.0,353.0 198.0,364.0 217.0,376.0 235.0,380.0 247.0,385.0 249.0,390.0 241.0,393.0 225.0,391.0 214.0,393.0 209.0,401.0 200.0,404.0 179.0,398.0 159.0,385.0 139.0,370.0 121.0,350.0 101.0,328.0 87.0,308.0 71.0,280.0 55.0,260.0 53.0,246.0 58.0,226.0" fill="#4f4e3b"/>
<polygon points="175.0,317.0 159.0,320.0 144.0,326.0 134.0,334.0 131.0,342.0 139.0,344.0 151.0,338.0 167.0,333.0 176.0,332.0" fill="#4d7580"/>
<polygon points="147.0,354.0 169.0,351.0 174.0,356.0 159.0,360.0 147.0,360.0" fill="#4d7580"/>
<polygon points="127.0,342.0 134.0,344.0 131.0,362.0 125.0,375.0 119.0,374.0 123.0,358.0" fill="#4d7580"/>
<polygon points="87.0,328.0 107.0,325.0 120.0,331.0 116.0,340.0 101.0,341.0 88.0,335.0" fill="#4d7580"/>
<polygon points="179.0,408.0 209.0,403.0 239.0,399.0 240.0,402.0 209.0,407.0 179.0,413.0" fill="#4d7580"/>
<line x1="92.1" y1="341.9" x2="99.3" y2="340.4" stroke="#476670" stroke-width="0.6" opacity=".85"/>
<line x1="118.6" y1="350.2" x2="121.8" y2="352.6" stroke="#476670" stroke-width="1.3" opacity=".85"/>
<line x1="130.3" y1="374.2" x2="137.8" y2="372.6" stroke="#476670" stroke-width="1.2" opacity=".85"/>
<line x1="147.2" y1="270.8" x2="148.9" y2="273.5" stroke="#476670" stroke-width="1.0" opacity=".85"/>
<line x1="179.0" y1="406.5" x2="182.7" y2="413.6" stroke="#476670" stroke-width="0.9" opacity=".85"/>
<line x1="199.4" y1="304.5" x2="204.4" y2="312.6" stroke="#476670" stroke-width="0.7" opacity=".85"/>
<line x1="33.9" y1="251.0" x2="43.0" y2="254.4" stroke="#476670" stroke-width="1.1" opacity=".85"/>
<line x1="75.0" y1="319.2" x2="80.5" y2="320.5" stroke="#476670" stroke-width="1.1" opacity=".85"/>
<line x1="213.2" y1="432.9" x2="220.9" y2="432.5" stroke="#476670" stroke-width="1.3" opacity=".85"/>
<line x1="240.2" y1="412.6" x2="245.2" y2="417.5" stroke="#476670" stroke-width="0.8" opacity=".85"/>
<line x1="207.1" y1="334.8" x2="212.0" y2="333.8" stroke="#476670" stroke-width="1.3" opacity=".85"/>
<line x1="199.3" y1="296.5" x2="203.4" y2="297.0" stroke="#476670" stroke-width="1.2" opacity=".85"/>
<line x1="178.9" y1="277.8" x2="182.5" y2="286.2" stroke="#476670" stroke-width="1.0" opacity=".85"/>
<line x1="7.8" y1="246.4" x2="12.6" y2="249.8" stroke="#476670" stroke-width="0.7" opacity=".85"/>
<line x1="114.6" y1="322.2" x2="120.9" y2="326.4" stroke="#476670" stroke-width="1.0" opacity=".85"/>
<line x1="126.2" y1="301.3" x2="134.3" y2="301.8" stroke="#476670" stroke-width="0.8" opacity=".85"/>
<line x1="243.5" y1="322.5" x2="250.0" y2="320.6" stroke="#476670" stroke-width="0.9" opacity=".85"/>
<line x1="153.3" y1="348.6" x2="156.1" y2="350.6" stroke="#476670" stroke-width="1.0" opacity=".85"/>
<line x1="169.1" y1="282.9" x2="174.6" y2="288.6" stroke="#476670" stroke-width="0.6" opacity=".85"/>
<line x1="113.6" y1="339.3" x2="118.7" y2="340.6" stroke="#476670" stroke-width="0.9" opacity=".85"/>
<line x1="91.9" y1="340.0" x2="96.8" y2="341.3" stroke="#476670" stroke-width="1.2" opacity=".85"/>
<line x1="183.1" y1="272.9" x2="185.9" y2="276.4" stroke="#476670" stroke-width="0.8" opacity=".85"/>
<line x1="80.2" y1="278.4" x2="88.4" y2="281.5" stroke="#476670" stroke-width="1.3" opacity=".85"/>
<line x1="42.2" y1="279.1" x2="46.1" y2="285.6" stroke="#476670" stroke-width="1.0" opacity=".85"/>
<line x1="56.0" y1="228.4" x2="62.7" y2="228.3" stroke="#476670" stroke-width="1.2" opacity=".85"/>
<line x1="159.8" y1="389.5" x2="165.2" y2="388.9" stroke="#476670" stroke-width="0.8" opacity=".85"/>
<line x1="86.2" y1="298.0" x2="91.9" y2="299.8" stroke="#476670" stroke-width="1.3" opacity=".85"/>
<line x1="38.8" y1="201.1" x2="43.9" y2="209.3" stroke="#476670" stroke-width="1.4" opacity=".85"/>
<line x1="185.6" y1="396.6" x2="192.4" y2="400.1" stroke="#476670" stroke-width="0.8" opacity=".85"/>
<line x1="84.9" y1="253.5" x2="87.8" y2="255.4" stroke="#476670" stroke-width="0.8" opacity=".85"/>
<line x1="225.0" y1="363.0" x2="229.8" y2="371.2" stroke="#476670" stroke-width="1.3" opacity=".85"/>
<line x1="130.7" y1="297.2" x2="138.5" y2="302.8" stroke="#476670" stroke-width="0.9" opacity=".85"/>
<line x1="87.6" y1="246.4" x2="91.7" y2="251.8" stroke="#476670" stroke-width="0.7" opacity=".85"/>
<line x1="197.1" y1="416.6" x2="202.3" y2="423.6" stroke="#476670" stroke-width="0.6" opacity=".85"/>
<line x1="12.4" y1="263.8" x2="16.7" y2="266.1" stroke="#476670" stroke-width="0.9" opacity=".85"/>
<line x1="0.5" y1="212.9" x2="4.3" y2="212.4" stroke="#476670" stroke-width="0.7" opacity=".85"/>
<line x1="242.7" y1="400.8" x2="245.9" y2="402.4" stroke="#476670" stroke-width="0.9" opacity=".85"/>
<line x1="78.3" y1="282.6" x2="84.6" y2="286.7" stroke="#476670" stroke-width="0.9" opacity=".85"/>
<line x1="47.6" y1="277.3" x2="50.9" y2="279.2" stroke="#476670" stroke-width="1.2" opacity=".85"/>
<line x1="94.7" y1="218.8" x2="98.8" y2="219.9" stroke="#476670" stroke-width="1.1" opacity=".85"/>
<line x1="194.9" y1="289.4" x2="201.8" y2="294.5" stroke="#476670" stroke-width="0.9" opacity=".85"/>
<line x1="92.7" y1="316.6" x2="100.2" y2="319.2" stroke="#476670" stroke-width="1.2" opacity=".85"/>
<line x1="114.7" y1="257.6" x2="119.7" y2="262.2" stroke="#476670" stroke-width="0.7" opacity=".85"/>
<line x1="105.8" y1="300.1" x2="109.9" y2="308.3" stroke="#476670" stroke-width="0.9" opacity=".85"/>
<line x1="223.6" y1="385.9" x2="228.0" y2="387.7" stroke="#476670" stroke-width="0.7" opacity=".85"/>
<line x1="202.5" y1="355.6" x2="208.3" y2="362.8" stroke="#476670" stroke-width="1.1" opacity=".85"/>
<line x1="182.7" y1="332.5" x2="185.8" y2="334.5" stroke="#476670" stroke-width="0.6" opacity=".85"/>
<line x1="11.0" y1="221.6" x2="13.0" y2="224.7" stroke="#476670" stroke-width="0.7" opacity=".85"/>
<line x1="167.7" y1="396.5" x2="175.9" y2="401.7" stroke="#476670" stroke-width="1.2" opacity=".85"/>
<line x1="127.3" y1="368.1" x2="129.9" y2="370.8" stroke="#476670" stroke-width="1.3" opacity=".85"/>
<line x1="60.3" y1="242.2" x2="64.1" y2="245.0" stroke="#476670" stroke-width="1.2" opacity=".85"/>
<line x1="98.0" y1="286.4" x2="103.7" y2="287.6" stroke="#476670" stroke-width="0.9" opacity=".85"/>
<line x1="172.0" y1="377.7" x2="178.9" y2="381.2" stroke="#476670" stroke-width="1.0" opacity=".85"/>
<line x1="37.2" y1="222.5" x2="41.1" y2="229.8" stroke="#476670" stroke-width="1.0" opacity=".85"/>
<line x1="46.3" y1="262.8" x2="50.0" y2="265.2" stroke="#476670" stroke-width="0.9" opacity=".85"/>
<line x1="175.6" y1="297.1" x2="183.2" y2="302.0" stroke="#476670" stroke-width="0.8" opacity=".85"/>
<line x1="54.2" y1="205.4" x2="60.3" y2="207.2" stroke="#476670" stroke-width="0.7" opacity=".85"/>
<line x1="89.8" y1="275.7" x2="98.1" y2="275.0" stroke="#476670" stroke-width="1.4" opacity=".85"/>
<line x1="119.4" y1="340.8" x2="123.1" y2="345.9" stroke="#476670" stroke-width="1.3" opacity=".85"/>
<line x1="138.7" y1="313.1" x2="143.2" y2="319.8" stroke="#476670" stroke-width="0.9" opacity=".85"/>
<line x1="116.4" y1="254.0" x2="119.7" y2="257.2" stroke="#476670" stroke-width="1.1" opacity=".85"/>
<line x1="238.7" y1="400.7" x2="243.4" y2="400.6" stroke="#476670" stroke-width="0.8" opacity=".85"/>
<line x1="213.8" y1="411.4" x2="216.4" y2="415.5" stroke="#476670" stroke-width="0.9" opacity=".85"/>
<line x1="21.4" y1="221.8" x2="30.1" y2="223.0" stroke="#476670" stroke-width="0.9" opacity=".85"/>
<line x1="144.5" y1="358.7" x2="147.5" y2="359.4" stroke="#476670" stroke-width="0.9" opacity=".85"/>
<line x1="121.0" y1="249.4" x2="124.0" y2="255.8" stroke="#476670" stroke-width="0.9" opacity=".85"/>
<line x1="135.5" y1="228.0" x2="139.3" y2="231.2" stroke="#476670" stroke-width="0.7" opacity=".85"/>
<line x1="220.9" y1="413.6" x2="222.5" y2="416.9" stroke="#476670" stroke-width="0.9" opacity=".85"/>
<line x1="192.3" y1="378.0" x2="196.2" y2="381.3" stroke="#476670" stroke-width="1.1" opacity=".85"/>
<line x1="187.8" y1="425.9" x2="194.5" y2="429.6" stroke="#476670" stroke-width="0.7" opacity=".85"/>
<line x1="123.0" y1="282.8" x2="129.0" y2="288.0" stroke="#476670" stroke-width="1.1" opacity=".85"/>
<line x1="157.1" y1="242.1" x2="164.2" y2="247.9" stroke="#476670" stroke-width="0.7" opacity=".85"/>
<line x1="148.8" y1="330.4" x2="155.7" y2="333.2" stroke="#476670" stroke-width="0.8" opacity=".85"/>
<line x1="43.9" y1="216.1" x2="49.3" y2="222.0" stroke="#476670" stroke-width="1.0" opacity=".85"/>
<line x1="184.2" y1="284.4" x2="188.8" y2="285.7" stroke="#476670" stroke-width="1.3" opacity=".85"/>
<line x1="88.2" y1="278.2" x2="93.2" y2="281.1" stroke="#476670" stroke-width="1.2" opacity=".85"/>
<line x1="27.9" y1="263.6" x2="31.6" y2="263.1" stroke="#476670" stroke-width="1.2" opacity=".85"/>
<line x1="47.1" y1="297.9" x2="52.0" y2="304.5" stroke="#476670" stroke-width="1.2" opacity=".85"/>
<line x1="147.4" y1="234.4" x2="153.2" y2="234.4" stroke="#476670" stroke-width="1.0" opacity=".85"/>
<line x1="141.5" y1="247.5" x2="144.6" y2="251.1" stroke="#476670" stroke-width="0.6" opacity=".85"/>
<line x1="200.0" y1="409.4" x2="209.3" y2="412.0" stroke="#476670" stroke-width="1.0" opacity=".85"/>
<line x1="145.2" y1="348.9" x2="152.5" y2="355.5" stroke="#476670" stroke-width="0.8" opacity=".85"/>
<line x1="214.1" y1="313.8" x2="219.2" y2="318.9" stroke="#476670" stroke-width="0.6" opacity=".85"/>
<line x1="191.8" y1="355.6" x2="197.5" y2="358.6" stroke="#476670" stroke-width="1.0" opacity=".85"/>
<line x1="160.8" y1="304.4" x2="163.8" y2="310.7" stroke="#476670" stroke-width="1.3" opacity=".85"/>
<line x1="89.6" y1="254.9" x2="92.7" y2="256.6" stroke="#476670" stroke-width="1.3" opacity=".85"/>
<line x1="213.7" y1="341.3" x2="220.5" y2="347.9" stroke="#476670" stroke-width="1.2" opacity=".85"/>
<line x1="232.0" y1="402.4" x2="236.1" y2="406.9" stroke="#476670" stroke-width="1.0" opacity=".85"/>
<line x1="27.2" y1="210.0" x2="30.7" y2="210.0" stroke="#476670" stroke-width="0.7" opacity=".85"/>
<line x1="123.8" y1="364.3" x2="130.2" y2="366.5" stroke="#476670" stroke-width="1.1" opacity=".85"/>
<line x1="75.9" y1="309.1" x2="83.8" y2="311.6" stroke="#476670" stroke-width="0.7" opacity=".85"/>
<line x1="224.0" y1="369.1" x2="229.3" y2="370.5" stroke="#476670" stroke-width="1.0" opacity=".85"/>
<line x1="148.5" y1="252.6" x2="151.5" y2="252.6" stroke="#476670" stroke-width="1.2" opacity=".85"/>
<line x1="48.6" y1="249.2" x2="52.6" y2="250.4" stroke="#476670" stroke-width="0.7" opacity=".85"/>
<line x1="6.8" y1="225.9" x2="10.6" y2="227.6" stroke="#476670" stroke-width="0.6" opacity=".85"/>
<line x1="98.8" y1="206.3" x2="108.5" y2="206.5" stroke="#476670" stroke-width="0.7" opacity=".85"/>
<line x1="118.2" y1="238.7" x2="125.4" y2="240.3" stroke="#476670" stroke-width="0.7" opacity=".85"/>
<line x1="74.8" y1="258.7" x2="77.8" y2="262.6" stroke="#476670" stroke-width="1.1" opacity=".85"/>
<line x1="85.8" y1="222.0" x2="89.0" y2="229.1" stroke="#476670" stroke-width="1.1" opacity=".85"/>
<line x1="0.9" y1="207.1" x2="4.5" y2="207.0" stroke="#476670" stroke-width="0.6" opacity=".85"/>
<line x1="242.5" y1="312.1" x2="246.6" y2="319.7" stroke="#476670" stroke-width="1.4" opacity=".85"/>
<line x1="21.9" y1="269.0" x2="30.7" y2="267.8" stroke="#476670" stroke-width="0.9" opacity=".85"/>
<line x1="184.2" y1="372.5" x2="191.8" y2="377.0" stroke="#476670" stroke-width="1.3" opacity=".85"/>
<line x1="90.3" y1="297.5" x2="93.3" y2="301.0" stroke="#476670" stroke-width="1.0" opacity=".85"/>
<line x1="67.1" y1="239.9" x2="73.7" y2="244.5" stroke="#476670" stroke-width="1.2" opacity=".85"/>
<line x1="96.3" y1="314.5" x2="99.3" y2="317.3" stroke="#476670" stroke-width="0.6" opacity=".85"/>
<line x1="217.2" y1="305.7" x2="223.7" y2="312.4" stroke="#476670" stroke-width="0.9" opacity=".85"/>
<line x1="92.2" y1="216.9" x2="94.6" y2="222.2" stroke="#476670" stroke-width="0.7" opacity=".85"/>
<line x1="141.7" y1="225.9" x2="144.4" y2="228.1" stroke="#476670" stroke-width="0.8" opacity=".85"/>
<line x1="12.2" y1="235.9" x2="18.4" y2="240.0" stroke="#476670" stroke-width="0.6" opacity=".85"/>
<line x1="150.5" y1="385.3" x2="157.2" y2="385.2" stroke="#476670" stroke-width="0.7" opacity=".85"/>
<line x1="28.0" y1="205.6" x2="37.8" y2="205.6" stroke="#476670" stroke-width="1.3" opacity=".85"/>
<line x1="153.2" y1="350.8" x2="157.7" y2="357.9" stroke="#476670" stroke-width="0.9" opacity=".85"/>
<line x1="150.2" y1="304.7" x2="152.4" y2="307.8" stroke="#476670" stroke-width="1.1" opacity=".85"/>
<line x1="134.3" y1="309.1" x2="142.2" y2="307.6" stroke="#476670" stroke-width="0.9" opacity=".85"/>
<line x1="120.7" y1="216.8" x2="125.4" y2="221.8" stroke="#476670" stroke-width="0.9" opacity=".85"/>
<line x1="161.5" y1="342.4" x2="165.8" y2="343.4" stroke="#476670" stroke-width="1.4" opacity=".85"/>
<line x1="83.5" y1="301.2" x2="87.1" y2="301.3" stroke="#476670" stroke-width="0.7" opacity=".85"/>
<line x1="231.8" y1="370.7" x2="235.3" y2="379.1" stroke="#476670" stroke-width="1.1" opacity=".85"/>
<line x1="231.9" y1="325.9" x2="234.5" y2="331.2" stroke="#476670" stroke-width="1.3" opacity=".85"/>
<line x1="236.5" y1="313.8" x2="244.5" y2="316.4" stroke="#476670" stroke-width="1.4" opacity=".85"/>
<line x1="73.3" y1="322.1" x2="80.5" y2="320.3" stroke="#476670" stroke-width="1.2" opacity=".85"/>
<line x1="68.7" y1="301.6" x2="72.4" y2="305.5" stroke="#476670" stroke-width="1.2" opacity=".85"/>
<line x1="71.5" y1="224.3" x2="76.4" y2="225.9" stroke="#476670" stroke-width="0.7" opacity=".85"/>
<line x1="243.9" y1="405.9" x2="249.5" y2="405.6" stroke="#476670" stroke-width="0.8" opacity=".85"/>
<line x1="115.3" y1="323.6" x2="121.9" y2="325.2" stroke="#476670" stroke-width="1.3" opacity=".85"/>
<line x1="71.0" y1="308.8" x2="76.7" y2="316.1" stroke="#476670" stroke-width="0.8" opacity=".85"/>
<line x1="2.5" y1="230.9" x2="8.4" y2="234.1" stroke="#476670" stroke-width="0.7" opacity=".85"/>
<line x1="12.5" y1="247.9" x2="20.2" y2="251.2" stroke="#476670" stroke-width="1.4" opacity=".85"/>
<line x1="195.6" y1="430.1" x2="198.8" y2="430.0" stroke="#476670" stroke-width="0.6" opacity=".85"/>
<line x1="107.7" y1="279.5" x2="110.6" y2="281.2" stroke="#476670" stroke-width="0.7" opacity=".85"/>
<line x1="77.6" y1="258.1" x2="85.7" y2="260.9" stroke="#476670" stroke-width="0.8" opacity=".85"/>
<line x1="156.2" y1="358.7" x2="162.0" y2="366.1" stroke="#476670" stroke-width="0.8" opacity=".85"/>
<line x1="196.6" y1="319.6" x2="204.2" y2="324.0" stroke="#476670" stroke-width="0.8" opacity=".85"/>
<line x1="42.0" y1="204.0" x2="45.8" y2="210.5" stroke="#476670" stroke-width="1.3" opacity=".85"/>
<line x1="116.4" y1="356.4" x2="122.2" y2="364.0" stroke="#476670" stroke-width="1.1" opacity=".85"/>
<line x1="103.2" y1="321.8" x2="107.4" y2="321.7" stroke="#476670" stroke-width="1.1" opacity=".85"/>
<line x1="247.0" y1="328.6" x2="252.7" y2="329.9" stroke="#476670" stroke-width="1.0" opacity=".85"/>
<line x1="199.9" y1="306.3" x2="209.6" y2="305.7" stroke="#476670" stroke-width="0.9" opacity=".85"/>
<line x1="130.0" y1="296.8" x2="135.3" y2="304.0" stroke="#476670" stroke-width="1.3" opacity=".85"/>
<line x1="143.1" y1="329.2" x2="149.4" y2="330.0" stroke="#476670" stroke-width="1.2" opacity=".85"/>
<line x1="166.5" y1="287.3" x2="169.8" y2="293.0" stroke="#476670" stroke-width="1.4" opacity=".85"/>
<line x1="160.2" y1="245.8" x2="169.7" y2="245.6" stroke="#476670" stroke-width="0.9" opacity=".85"/>
<line x1="97.7" y1="266.3" x2="101.7" y2="266.6" stroke="#476670" stroke-width="1.4" opacity=".85"/>
<line x1="19.7" y1="254.0" x2="24.1" y2="253.2" stroke="#476670" stroke-width="1.0" opacity=".85"/>
<line x1="185.0" y1="397.0" x2="189.5" y2="402.9" stroke="#476670" stroke-width="0.6" opacity=".85"/>
<line x1="17.3" y1="262.9" x2="23.6" y2="263.5" stroke="#476670" stroke-width="1.0" opacity=".85"/>
<line x1="11.7" y1="255.4" x2="21.4" y2="254.6" stroke="#476670" stroke-width="1.3" opacity=".85"/>
<line x1="168.0" y1="352.0" x2="171.9" y2="351.2" stroke="#476670" stroke-width="1.2" opacity=".85"/>
<line x1="43.9" y1="244.6" x2="48.5" y2="252.0" stroke="#476670" stroke-width="0.6" opacity=".85"/>
<line x1="239.2" y1="325.7" x2="244.9" y2="324.9" stroke="#476670" stroke-width="0.9" opacity=".85"/>
<line x1="32.7" y1="234.1" x2="36.5" y2="235.0" stroke="#476670" stroke-width="1.3" opacity=".85"/>
<line x1="19.2" y1="245.1" x2="22.7" y2="254.0" stroke="#476670" stroke-width="1.4" opacity=".85"/>
<line x1="61.2" y1="283.3" x2="70.0" y2="287.3" stroke="#476670" stroke-width="1.2" opacity=".85"/>
<line x1="78.0" y1="205.0" x2="81.7" y2="209.0" stroke="#476670" stroke-width="1.2" opacity=".85"/>
<circle cx="128.1" cy="293.9" r="0.7" fill="#6a6a55" opacity=".6"/>
<circle cx="113.2" cy="307.8" r="0.9" fill="#6a6a55" opacity=".6"/>
<circle cx="84.7" cy="319.7" r="1.0" fill="#6a6a55" opacity=".6"/>
<circle cx="161.1" cy="237.5" r="1.0" fill="#6a6a55" opacity=".6"/>
<circle cx="160.1" cy="235.2" r="0.6" fill="#6a6a55" opacity=".6"/>
<circle cx="84.9" cy="212.5" r="1.0" fill="#6a6a55" opacity=".6"/>
<circle cx="109.3" cy="374.8" r="0.5" fill="#6a6a55" opacity=".6"/>
<circle cx="62.6" cy="374.2" r="0.9" fill="#6a6a55" opacity=".6"/>
<circle cx="178.0" cy="337.7" r="0.7" fill="#6a6a55" opacity=".6"/>
<circle cx="151.4" cy="220.3" r="0.7" fill="#6a6a55" opacity=".6"/>
<circle cx="113.1" cy="231.0" r="0.8" fill="#6a6a55" opacity=".6"/>
<circle cx="99.1" cy="302.3" r="0.6" fill="#6a6a55" opacity=".6"/>
<circle cx="98.5" cy="273.0" r="0.8" fill="#6a6a55" opacity=".6"/>
<circle cx="176.7" cy="387.4" r="0.9" fill="#6a6a55" opacity=".6"/>
<circle cx="159.6" cy="258.8" r="1.0" fill="#6a6a55" opacity=".6"/>
<circle cx="92.8" cy="226.4" r="0.7" fill="#6a6a55" opacity=".6"/>
<circle cx="147.4" cy="269.5" r="0.8" fill="#6a6a55" opacity=".6"/>
<circle cx="94.3" cy="393.5" r="0.7" fill="#6a6a55" opacity=".6"/>
<circle cx="117.4" cy="307.2" r="0.9" fill="#6a6a55" opacity=".6"/>
<circle cx="177.4" cy="306.6" r="0.7" fill="#6a6a55" opacity=".6"/>
<circle cx="133.9" cy="215.7" r="0.7" fill="#6a6a55" opacity=".6"/>
<circle cx="161.0" cy="355.9" r="0.4" fill="#6a6a55" opacity=".6"/>
<circle cx="161.8" cy="278.0" r="1.0" fill="#6a6a55" opacity=".6"/>
<circle cx="104.3" cy="244.5" r="0.7" fill="#6a6a55" opacity=".6"/>
<circle cx="165.3" cy="287.4" r="0.9" fill="#6a6a55" opacity=".6"/>
<circle cx="144.9" cy="273.6" r="0.6" fill="#6a6a55" opacity=".6"/>
<circle cx="120.6" cy="281.0" r="0.6" fill="#6a6a55" opacity=".6"/>
<circle cx="137.9" cy="375.3" r="0.8" fill="#6a6a55" opacity=".6"/>
<circle cx="78.3" cy="245.5" r="0.6" fill="#6a6a55" opacity=".6"/>
<circle cx="133.5" cy="229.6" r="0.4" fill="#6a6a55" opacity=".6"/>
<circle cx="98.8" cy="258.0" r="0.4" fill="#6a6a55" opacity=".6"/>
<circle cx="124.6" cy="384.4" r="0.7" fill="#6a6a55" opacity=".6"/>
<circle cx="148.0" cy="366.0" r="0.9" fill="#6a6a55" opacity=".6"/>
<circle cx="168.7" cy="289.4" r="0.8" fill="#6a6a55" opacity=".6"/>
<circle cx="75.2" cy="376.2" r="0.6" fill="#6a6a55" opacity=".6"/>
<circle cx="117.1" cy="378.3" r="0.6" fill="#6a6a55" opacity=".6"/>
<circle cx="83.4" cy="365.1" r="0.8" fill="#6a6a55" opacity=".6"/>
<circle cx="71.0" cy="207.6" r="0.6" fill="#6a6a55" opacity=".6"/>
<circle cx="61.9" cy="366.8" r="0.5" fill="#6a6a55" opacity=".6"/>
<circle cx="93.4" cy="279.0" r="0.7" fill="#6a6a55" opacity=".6"/>
<circle cx="112.0" cy="326.5" r="0.8" fill="#6a6a55" opacity=".6"/>
<circle cx="112.5" cy="221.2" r="1.0" fill="#6a6a55" opacity=".6"/>
<circle cx="142.6" cy="218.5" r="0.7" fill="#6a6a55" opacity=".6"/>
<circle cx="149.9" cy="398.4" r="0.4" fill="#6a6a55" opacity=".6"/>
<circle cx="62.1" cy="297.0" r="0.7" fill="#6a6a55" opacity=".6"/>
<circle cx="166.5" cy="365.6" r="0.6" fill="#6a6a55" opacity=".6"/>
<circle cx="110.4" cy="317.4" r="0.9" fill="#6a6a55" opacity=".6"/>
<circle cx="84.8" cy="279.6" r="0.5" fill="#6a6a55" opacity=".6"/>
<circle cx="136.7" cy="207.3" r="1.0" fill="#6a6a55" opacity=".6"/>
<circle cx="122.8" cy="315.6" r="0.5" fill="#6a6a55" opacity=".6"/>
<circle cx="88.4" cy="294.8" r="0.9" fill="#6a6a55" opacity=".6"/>
<circle cx="124.6" cy="258.4" r="1.0" fill="#6a6a55" opacity=".6"/>
<circle cx="139.1" cy="306.6" r="0.5" fill="#6a6a55" opacity=".6"/>
<circle cx="96.2" cy="380.2" r="0.5" fill="#6a6a55" opacity=".6"/>
<circle cx="123.7" cy="324.8" r="0.6" fill="#6a6a55" opacity=".6"/>
<circle cx="151.7" cy="382.2" r="0.9" fill="#6a6a55" opacity=".6"/>
<circle cx="148.1" cy="242.3" r="0.4" fill="#6a6a55" opacity=".6"/>
<circle cx="112.1" cy="263.8" r="0.5" fill="#6a6a55" opacity=".6"/>
<circle cx="163.8" cy="244.8" r="0.9" fill="#6a6a55" opacity=".6"/>
<circle cx="171.6" cy="225.7" r="0.9" fill="#6a6a55" opacity=".6"/>
<circle cx="107.9" cy="244.0" r="0.5" fill="#6a6a55" opacity=".6"/>
<circle cx="65.5" cy="300.8" r="0.6" fill="#6a6a55" opacity=".6"/>
<circle cx="161.5" cy="366.9" r="0.4" fill="#6a6a55" opacity=".6"/>
<circle cx="108.4" cy="279.1" r="0.5" fill="#6a6a55" opacity=".6"/>
<circle cx="90.6" cy="254.1" r="0.8" fill="#6a6a55" opacity=".6"/>
<circle cx="101.1" cy="224.0" r="0.5" fill="#6a6a55" opacity=".6"/>
<circle cx="113.2" cy="313.8" r="0.5" fill="#6a6a55" opacity=".6"/>
<circle cx="143.6" cy="244.7" r="0.8" fill="#6a6a55" opacity=".6"/>
<circle cx="132.9" cy="236.8" r="0.9" fill="#6a6a55" opacity=".6"/>
<circle cx="107.5" cy="308.8" r="0.8" fill="#6a6a55" opacity=".6"/>
<circle cx="135.1" cy="289.6" r="0.4" fill="#6a6a55" opacity=".6"/>
<circle cx="153.8" cy="372.2" r="0.7" fill="#6a6a55" opacity=".6"/>
<circle cx="129.3" cy="255.2" r="0.9" fill="#6a6a55" opacity=".6"/>
<circle cx="141.9" cy="245.9" r="0.9" fill="#6a6a55" opacity=".6"/>
<circle cx="177.4" cy="270.5" r="1.0" fill="#6a6a55" opacity=".6"/>
<circle cx="118.0" cy="237.4" r="0.8" fill="#6a6a55" opacity=".6"/>
<circle cx="101.0" cy="347.0" r="0.8" fill="#6a6a55" opacity=".6"/>
<circle cx="73.7" cy="306.6" r="0.9" fill="#6a6a55" opacity=".6"/>
<circle cx="117.4" cy="308.8" r="0.9" fill="#6a6a55" opacity=".6"/>
<circle cx="113.7" cy="299.6" r="0.7" fill="#6a6a55" opacity=".6"/>
<circle cx="158.2" cy="242.2" r="0.5" fill="#6a6a55" opacity=".6"/>
<circle cx="150.8" cy="311.4" r="0.6" fill="#6a6a55" opacity=".6"/>
<circle cx="166.3" cy="377.2" r="0.7" fill="#6a6a55" opacity=".6"/>
<circle cx="177.6" cy="367.5" r="0.8" fill="#6a6a55" opacity=".6"/>
<circle cx="95.4" cy="204.1" r="0.8" fill="#6a6a55" opacity=".6"/>
<circle cx="147.7" cy="271.4" r="0.7" fill="#6a6a55" opacity=".6"/>
<circle cx="127.9" cy="251.5" r="0.8" fill="#6a6a55" opacity=".6"/>
<circle cx="127.4" cy="278.3" r="0.5" fill="#6a6a55" opacity=".6"/>
<circle cx="126.4" cy="265.3" r="0.8" fill="#6a6a55" opacity=".6"/>
<circle cx="81.4" cy="280.1" r="0.5" fill="#6a6a55" opacity=".6"/>
<circle cx="109.2" cy="316.1" r="0.5" fill="#6a6a55" opacity=".6"/>
<circle cx="67.5" cy="297.5" r="0.5" fill="#6a6a55" opacity=".6"/>
<circle cx="120.6" cy="235.1" r="0.5" fill="#6a6a55" opacity=".6"/>
<circle cx="124.4" cy="384.8" r="0.9" fill="#6a6a55" opacity=".6"/>
<circle cx="121.8" cy="280.7" r="0.4" fill="#6a6a55" opacity=".6"/>
<circle cx="93.6" cy="264.2" r="1.0" fill="#6a6a55" opacity=".6"/>
<circle cx="74.8" cy="389.7" r="0.7" fill="#6a6a55" opacity=".6"/>
<circle cx="112.2" cy="253.9" r="1.0" fill="#6a6a55" opacity=".6"/>
<circle cx="83.0" cy="315.1" r="0.7" fill="#6a6a55" opacity=".6"/>
<circle cx="84.5" cy="246.1" r="1.0" fill="#6a6a55" opacity=".6"/>
<circle cx="154.3" cy="347.2" r="0.9" fill="#6a6a55" opacity=".6"/>
<circle cx="72.6" cy="341.3" r="0.9" fill="#6a6a55" opacity=".6"/>
<circle cx="87.6" cy="292.5" r="1.0" fill="#6a6a55" opacity=".6"/>
<circle cx="99.6" cy="352.9" r="0.5" fill="#6a6a55" opacity=".6"/>
<circle cx="139.7" cy="255.4" r="0.7" fill="#6a6a55" opacity=".6"/>
<circle cx="104.9" cy="374.3" r="0.8" fill="#6a6a55" opacity=".6"/>
<circle cx="120.5" cy="338.1" r="0.7" fill="#6a6a55" opacity=".6"/>
<circle cx="155.9" cy="253.0" r="0.7" fill="#6a6a55" opacity=".6"/>
<circle cx="130.1" cy="278.8" r="0.4" fill="#6a6a55" opacity=".6"/>
<circle cx="81.1" cy="328.8" r="0.5" fill="#6a6a55" opacity=".6"/>
<circle cx="150.5" cy="302.0" r="1.0" fill="#6a6a55" opacity=".6"/>
<circle cx="161.0" cy="346.0" r="0.6" fill="#6a6a55" opacity=".6"/>
<circle cx="66.1" cy="312.2" r="0.8" fill="#6a6a55" opacity=".6"/>
<circle cx="169.7" cy="242.1" r="0.5" fill="#6a6a55" opacity=".6"/>
<circle cx="176.7" cy="348.4" r="0.7" fill="#6a6a55" opacity=".6"/>
<circle cx="148.1" cy="231.6" r="0.7" fill="#6a6a55" opacity=".6"/>
<circle cx="139.9" cy="321.5" r="0.5" fill="#6a6a55" opacity=".6"/>
<circle cx="77.1" cy="325.7" r="0.9" fill="#6a6a55" opacity=".6"/>
<circle cx="77.3" cy="203.4" r="0.4" fill="#6a6a55" opacity=".6"/>
<circle cx="153.7" cy="279.4" r="0.7" fill="#6a6a55" opacity=".6"/>
<circle cx="178.3" cy="323.0" r="0.6" fill="#6a6a55" opacity=".6"/>
<circle cx="143.7" cy="202.4" r="0.6" fill="#6a6a55" opacity=".6"/>
<circle cx="143.4" cy="235.8" r="0.4" fill="#6a6a55" opacity=".6"/>
<circle cx="122.2" cy="266.9" r="1.0" fill="#6a6a55" opacity=".6"/>
<circle cx="73.0" cy="360.8" r="0.6" fill="#6a6a55" opacity=".6"/>
<circle cx="156.0" cy="290.1" r="0.8" fill="#6a6a55" opacity=".6"/>
<circle cx="99.5" cy="246.5" r="0.7" fill="#6a6a55" opacity=".6"/>
<circle cx="155.4" cy="270.4" r="0.5" fill="#6a6a55" opacity=".6"/>
<circle cx="110.1" cy="221.0" r="0.6" fill="#6a6a55" opacity=".6"/>
<circle cx="128.6" cy="310.0" r="0.8" fill="#6a6a55" opacity=".6"/>
<circle cx="95.2" cy="206.9" r="0.4" fill="#6a6a55" opacity=".6"/>
<circle cx="101.0" cy="240.9" r="0.7" fill="#6a6a55" opacity=".6"/>
<circle cx="92.3" cy="352.9" r="0.8" fill="#6a6a55" opacity=".6"/>
<circle cx="139.2" cy="347.6" r="0.7" fill="#6a6a55" opacity=".6"/>
<circle cx="111.3" cy="263.1" r="0.4" fill="#6a6a55" opacity=".6"/>
<circle cx="154.7" cy="301.0" r="0.5" fill="#6a6a55" opacity=".6"/>
<circle cx="170.3" cy="317.2" r="0.8" fill="#6a6a55" opacity=".6"/>
<circle cx="112.8" cy="227.0" r="1.0" fill="#6a6a55" opacity=".6"/>
<circle cx="80.8" cy="274.5" r="1.0" fill="#6a6a55" opacity=".6"/>
<circle cx="75.4" cy="300.9" r="0.7" fill="#6a6a55" opacity=".6"/>
<circle cx="90.2" cy="385.1" r="0.6" fill="#6a6a55" opacity=".6"/>
<circle cx="62.4" cy="295.8" r="0.4" fill="#6a6a55" opacity=".6"/>
<circle cx="144.6" cy="374.1" r="0.9" fill="#6a6a55" opacity=".6"/>
<circle cx="66.7" cy="335.7" r="0.6" fill="#6a6a55" opacity=".6"/>
<circle cx="116.8" cy="261.5" r="0.6" fill="#6a6a55" opacity=".6"/>
<circle cx="76.7" cy="325.9" r="0.5" fill="#6a6a55" opacity=".6"/>
<circle cx="174.8" cy="210.7" r="1.0" fill="#6a6a55" opacity=".6"/>
<circle cx="83.6" cy="218.5" r="0.8" fill="#6a6a55" opacity=".6"/>
<circle cx="123.6" cy="354.2" r="0.7" fill="#6a6a55" opacity=".6"/>
<circle cx="135.4" cy="218.4" r="0.8" fill="#6a6a55" opacity=".6"/>
<circle cx="121.5" cy="392.5" r="0.4" fill="#6a6a55" opacity=".6"/>
<circle cx="69.1" cy="335.9" r="1.0" fill="#6a6a55" opacity=".6"/>
<circle cx="110.8" cy="342.8" r="0.7" fill="#6a6a55" opacity=".6"/>
<circle cx="107.1" cy="294.2" r="0.8" fill="#6a6a55" opacity=".6"/>
<circle cx="64.4" cy="262.5" r="0.8" fill="#6a6a55" opacity=".6"/>
<circle cx="91.5" cy="295.7" r="0.6" fill="#6a6a55" opacity=".6"/>
<circle cx="103.2" cy="330.8" r="0.8" fill="#6a6a55" opacity=".6"/>
<circle cx="173.9" cy="296.4" r="0.5" fill="#6a6a55" opacity=".6"/>
<circle cx="100.8" cy="213.6" r="0.5" fill="#6a6a55" opacity=".6"/>
<circle cx="130.0" cy="323.0" r="0.5" fill="#6a6a55" opacity=".6"/>
<circle cx="59.1" cy="210.2" r="2.0" fill="#476670" opacity=".85"/>
<circle cx="187.6" cy="410.0" r="1.5" fill="#476670" opacity=".85"/>
<circle cx="8.7" cy="278.9" r="1.3" fill="#476670" opacity=".85"/>
<circle cx="121.0" cy="398.5" r="1.0" fill="#476670" opacity=".85"/>
<circle cx="6.8" cy="222.4" r="1.6" fill="#476670" opacity=".85"/>
<circle cx="43.2" cy="283.6" r="1.9" fill="#476670" opacity=".85"/>
<circle cx="88.0" cy="343.3" r="1.1" fill="#476670" opacity=".85"/>
<circle cx="26.2" cy="215.8" r="1.8" fill="#476670" opacity=".85"/>
<circle cx="17.6" cy="281.1" r="1.9" fill="#476670" opacity=".85"/>
<circle cx="202.0" cy="411.5" r="1.5" fill="#476670" opacity=".85"/>
<circle cx="108.2" cy="339.5" r="1.8" fill="#476670" opacity=".85"/>
<circle cx="78.2" cy="328.2" r="1.1" fill="#476670" opacity=".85"/>
<circle cx="163.5" cy="404.4" r="1.5" fill="#476670" opacity=".85"/>
<circle cx="65.3" cy="297.3" r="1.9" fill="#476670" opacity=".85"/>
<circle cx="24.1" cy="222.5" r="0.7" fill="#476670" opacity=".85"/>
<circle cx="82.4" cy="318.5" r="1.0" fill="#476670" opacity=".85"/>
<circle cx="42.2" cy="244.1" r="1.2" fill="#476670" opacity=".85"/>
<circle cx="74.9" cy="320.7" r="1.4" fill="#476670" opacity=".85"/>
<circle cx="78.8" cy="367.9" r="1.4" fill="#476670" opacity=".85"/>
<circle cx="19.3" cy="217.6" r="1.8" fill="#476670" opacity=".85"/>
<circle cx="124.9" cy="372.1" r="1.9" fill="#476670" opacity=".85"/>
<circle cx="156.1" cy="398.0" r="2.0" fill="#476670" opacity=".85"/>
<circle cx="85.2" cy="354.0" r="1.6" fill="#476670" opacity=".85"/>
<circle cx="44.3" cy="292.3" r="1.1" fill="#476670" opacity=".85"/>
<circle cx="24.0" cy="274.2" r="1.3" fill="#476670" opacity=".85"/>
<circle cx="12.5" cy="245.0" r="1.2" fill="#476670" opacity=".85"/>
<circle cx="47.8" cy="214.3" r="1.8" fill="#476670" opacity=".85"/>
<circle cx="119.7" cy="392.0" r="1.1" fill="#476670" opacity=".85"/>
<circle cx="68.5" cy="284.8" r="1.1" fill="#476670" opacity=".85"/>
<circle cx="159.3" cy="413.6" r="0.8" fill="#476670" opacity=".85"/>
<circle cx="40.2" cy="225.0" r="1.9" fill="#476670" opacity=".85"/>
<circle cx="10.3" cy="284.5" r="1.4" fill="#476670" opacity=".85"/>
<circle cx="204.9" cy="417.5" r="1.6" fill="#476670" opacity=".85"/>
<circle cx="136.2" cy="411.6" r="1.0" fill="#476670" opacity=".85"/>
<circle cx="21.0" cy="297.3" r="0.9" fill="#476670" opacity=".85"/>
<circle cx="137.1" cy="395.6" r="1.2" fill="#476670" opacity=".85"/>
<circle cx="33.3" cy="206.5" r="1.2" fill="#476670" opacity=".85"/>
<circle cx="61.0" cy="301.8" r="1.5" fill="#476670" opacity=".85"/>
<circle cx="149.0" cy="392.7" r="1.7" fill="#476670" opacity=".85"/>
<circle cx="14.0" cy="288.9" r="1.8" fill="#476670" opacity=".85"/>
<circle cx="98.9" cy="350.8" r="1.5" fill="#476670" opacity=".85"/>
<circle cx="176.0" cy="407.7" r="1.7" fill="#476670" opacity=".85"/>
<circle cx="215.3" cy="413.7" r="0.8" fill="#476670" opacity=".85"/>
<circle cx="78.2" cy="352.1" r="0.9" fill="#476670" opacity=".85"/>
<circle cx="126.4" cy="371.1" r="1.0" fill="#476670" opacity=".85"/>
<circle cx="49.1" cy="233.8" r="0.8" fill="#476670" opacity=".85"/>
<circle cx="54.7" cy="211.6" r="0.9" fill="#476670" opacity=".85"/>
<circle cx="29.4" cy="297.3" r="1.7" fill="#476670" opacity=".85"/>
<circle cx="61.6" cy="343.9" r="0.8" fill="#476670" opacity=".85"/>
<circle cx="51.7" cy="338.4" r="1.8" fill="#476670" opacity=".85"/>
<circle cx="2.3" cy="272.6" r="1.1" fill="#476670" opacity=".85"/>
<circle cx="86.6" cy="359.3" r="1.6" fill="#476670" opacity=".85"/>
<circle cx="98.9" cy="392.3" r="0.8" fill="#476670" opacity=".85"/>
<circle cx="58.8" cy="289.8" r="1.8" fill="#476670" opacity=".85"/>
<circle cx="108.0" cy="365.8" r="1.5" fill="#476670" opacity=".85"/>
<circle cx="50.9" cy="207.6" r="1.0" fill="#476670" opacity=".85"/>
<circle cx="150.9" cy="399.6" r="1.6" fill="#476670" opacity=".85"/>
<circle cx="100.4" cy="350.2" r="1.1" fill="#476670" opacity=".85"/>
<circle cx="200.6" cy="409.3" r="1.9" fill="#476670" opacity=".85"/>
<circle cx="126.8" cy="368.4" r="1.4" fill="#476670" opacity=".85"/>
<circle cx="109.4" cy="359.4" r="1.1" fill="#476670" opacity=".85"/>
<circle cx="32.9" cy="292.7" r="0.9" fill="#476670" opacity=".85"/>
<circle cx="1.0" cy="222.2" r="1.3" fill="#476670" opacity=".85"/>
<circle cx="113.3" cy="370.9" r="1.2" fill="#476670" opacity=".85"/>
<circle cx="99.5" cy="374.8" r="0.9" fill="#476670" opacity=".85"/>
<circle cx="88.6" cy="368.4" r="1.8" fill="#476670" opacity=".85"/>
<circle cx="178.3" cy="403.1" r="0.9" fill="#476670" opacity=".85"/>
<circle cx="89.5" cy="351.7" r="1.8" fill="#476670" opacity=".85"/>
<circle cx="42.4" cy="283.0" r="1.0" fill="#476670" opacity=".85"/>
<circle cx="44.1" cy="337.6" r="1.4" fill="#476670" opacity=".85"/>
<circle cx="100.6" cy="390.0" r="1.8" fill="#476670" opacity=".85"/>
<circle cx="62.0" cy="277.1" r="1.1" fill="#476670" opacity=".85"/>
<circle cx="117.1" cy="366.3" r="1.7" fill="#476670" opacity=".85"/>
<circle cx="7.9" cy="274.3" r="0.9" fill="#476670" opacity=".85"/>
<circle cx="111.9" cy="379.9" r="0.9" fill="#476670" opacity=".85"/>
<circle cx="57.1" cy="216.5" r="1.9" fill="#476670" opacity=".85"/>
<circle cx="40.5" cy="298.7" r="1.1" fill="#476670" opacity=".85"/>
<circle cx="66.5" cy="284.6" r="1.4" fill="#476670" opacity=".85"/>
<circle cx="13.0" cy="218.9" r="1.0" fill="#476670" opacity=".85"/>
<circle cx="61.0" cy="282.0" r="1.1" fill="#476670" opacity=".85"/>
<circle cx="120.2" cy="385.1" r="1.6" fill="#476670" opacity=".85"/>
<circle cx="80.1" cy="347.8" r="1.7" fill="#476670" opacity=".85"/>
<circle cx="135.7" cy="380.6" r="1.5" fill="#476670" opacity=".85"/>
<circle cx="51.6" cy="329.1" r="1.6" fill="#476670" opacity=".85"/>
<circle cx="60.2" cy="303.3" r="1.2" fill="#476670" opacity=".85"/>
<circle cx="66.3" cy="366.2" r="1.3" fill="#476670" opacity=".85"/>
<circle cx="3.9" cy="270.0" r="1.2" fill="#476670" opacity=".85"/>
<circle cx="159.9" cy="405.7" r="1.3" fill="#476670" opacity=".85"/>
<circle cx="149.0" cy="414.5" r="0.8" fill="#476670" opacity=".85"/>
<circle cx="47.2" cy="280.3" r="1.7" fill="#476670" opacity=".85"/>
<circle cx="42.8" cy="295.3" r="1.8" fill="#476670" opacity=".85"/>
<circle cx="42.1" cy="244.7" r="1.5" fill="#476670" opacity=".85"/>
<circle cx="87.1" cy="361.3" r="1.0" fill="#476670" opacity=".85"/>
<circle cx="28.8" cy="280.8" r="0.8" fill="#476670" opacity=".85"/>
<circle cx="96.8" cy="356.7" r="1.4" fill="#476670" opacity=".85"/>
<circle cx="102.1" cy="380.4" r="2.0" fill="#476670" opacity=".85"/>
<circle cx="90.9" cy="319.7" r="1.1" fill="#476670" opacity=".85"/>
<circle cx="25.8" cy="295.6" r="1.6" fill="#476670" opacity=".85"/>
<circle cx="104.5" cy="354.6" r="0.8" fill="#476670" opacity=".85"/>
<circle cx="67.4" cy="313.3" r="1.1" fill="#476670" opacity=".85"/>
<circle cx="198.4" cy="421.7" r="1.7" fill="#476670" opacity=".85"/>
<circle cx="48.2" cy="286.9" r="1.7" fill="#476670" opacity=".85"/>
<circle cx="22.9" cy="265.8" r="1.6" fill="#476670" opacity=".85"/>
<circle cx="119.2" cy="389.7" r="2.0" fill="#476670" opacity=".85"/>
<circle cx="35.4" cy="331.2" r="1.9" fill="#476670" opacity=".85"/>
<circle cx="51.1" cy="350.9" r="1.4" fill="#476670" opacity=".85"/>
<circle cx="57.7" cy="266.3" r="1.0" fill="#476670" opacity=".85"/>
<circle cx="174.6" cy="400.1" r="1.0" fill="#476670" opacity=".85"/>
<circle cx="121.3" cy="357.0" r="0.7" fill="#476670" opacity=".85"/>
<circle cx="68.5" cy="350.9" r="0.8" fill="#476670" opacity=".85"/>
<circle cx="9.3" cy="263.3" r="1.8" fill="#476670" opacity=".85"/>
<circle cx="98.7" cy="325.5" r="1.7" fill="#476670" opacity=".85"/>
<circle cx="120.5" cy="388.1" r="1.0" fill="#476670" opacity=".85"/>
<circle cx="39.8" cy="314.5" r="1.5" fill="#476670" opacity=".85"/>
<circle cx="41.7" cy="327.3" r="1.3" fill="#476670" opacity=".85"/>
<circle cx="36.5" cy="262.5" r="0.8" fill="#476670" opacity=".85"/>
<circle cx="33.1" cy="283.5" r="1.2" fill="#476670" opacity=".85"/>
<circle cx="139.7" cy="410.4" r="1.0" fill="#476670" opacity=".85"/>
<circle cx="39.4" cy="202.1" r="1.5" fill="#476670" opacity=".85"/>
<circle cx="145.8" cy="391.9" r="0.9" fill="#476670" opacity=".85"/>
<circle cx="133.4" cy="399.6" r="1.4" fill="#476670" opacity=".85"/>
<circle cx="110.7" cy="354.9" r="0.9" fill="#476670" opacity=".85"/>
<circle cx="4.6" cy="259.3" r="1.3" fill="#476670" opacity=".85"/>
<circle cx="84.9" cy="374.6" r="1.1" fill="#476670" opacity=".85"/>
<circle cx="110.9" cy="366.8" r="1.3" fill="#476670" opacity=".85"/>
<circle cx="96.1" cy="337.1" r="1.8" fill="#476670" opacity=".85"/>
<circle cx="132.3" cy="389.7" r="1.2" fill="#476670" opacity=".85"/>
<circle cx="4.3" cy="218.9" r="1.9" fill="#476670" opacity=".85"/>
<circle cx="24.4" cy="242.5" r="1.2" fill="#476670" opacity=".85"/>
<circle cx="100.7" cy="372.0" r="1.0" fill="#476670" opacity=".85"/>
<circle cx="77.5" cy="354.2" r="1.3" fill="#476670" opacity=".85"/>
<circle cx="164.3" cy="392.8" r="1.2" fill="#476670" opacity=".85"/>
<circle cx="79.2" cy="315.3" r="1.7" fill="#476670" opacity=".85"/>
<circle cx="38.8" cy="332.4" r="1.3" fill="#476670" opacity=".85"/>
<circle cx="167.4" cy="394.6" r="1.2" fill="#476670" opacity=".85"/>
<circle cx="72.4" cy="289.5" r="1.1" fill="#476670" opacity=".85"/>
<circle cx="92.6" cy="343.4" r="1.3" fill="#476670" opacity=".85"/>
<circle cx="82.4" cy="316.2" r="0.8" fill="#476670" opacity=".85"/>
<circle cx="78.1" cy="304.4" r="1.7" fill="#476670" opacity=".85"/>
<circle cx="166.1" cy="409.9" r="1.7" fill="#476670" opacity=".85"/>
<circle cx="30.2" cy="248.9" r="1.6" fill="#476670" opacity=".85"/>
<circle cx="31.7" cy="251.6" r="1.7" fill="#476670" opacity=".85"/>
<circle cx="90.5" cy="348.7" r="1.9" fill="#476670" opacity=".85"/>
<circle cx="62.8" cy="325.3" r="1.3" fill="#476670" opacity=".85"/>
<circle cx="34.2" cy="249.0" r="1.9" fill="#476670" opacity=".85"/>
<circle cx="58.0" cy="320.2" r="1.9" fill="#476670" opacity=".85"/>
<circle cx="150.1" cy="384.2" r="0.9" fill="#476670" opacity=".85"/>
<circle cx="93.9" cy="339.3" r="1.2" fill="#476670" opacity=".85"/>
<circle cx="68.5" cy="279.5" r="1.4" fill="#476670" opacity=".85"/>
<circle cx="70.3" cy="360.1" r="1.6" fill="#476670" opacity=".85"/>
<circle cx="0.1" cy="206.6" r="1.7" fill="#476670" opacity=".85"/>
<circle cx="16.8" cy="206.7" r="0.9" fill="#476670" opacity=".85"/>
<circle cx="63.3" cy="284.9" r="1.0" fill="#476670" opacity=".85"/>
<circle cx="107.0" cy="377.9" r="1.2" fill="#476670" opacity=".85"/>
<circle cx="37.7" cy="223.9" r="1.4" fill="#476670" opacity=".85"/>
<circle cx="75.7" cy="358.2" r="1.4" fill="#476670" opacity=".85"/>
<circle cx="86.0" cy="344.9" r="1.1" fill="#476670" opacity=".85"/>
<circle cx="220.2" cy="414.1" r="1.7" fill="#476670" opacity=".85"/>
<circle cx="51.6" cy="280.4" r="0.8" fill="#476670" opacity=".85"/>
<circle cx="60.5" cy="269.7" r="1.3" fill="#476670" opacity=".85"/>
<circle cx="157.2" cy="422.2" r="0.7" fill="#476670" opacity=".85"/>
<circle cx="12.3" cy="244.0" r="0.7" fill="#476670" opacity=".85"/>
<circle cx="17.9" cy="260.5" r="1.0" fill="#476670" opacity=".85"/>
<circle cx="16.0" cy="297.8" r="1.9" fill="#476670" opacity=".85"/>
<circle cx="15.1" cy="233.1" r="1.5" fill="#476670" opacity=".85"/>
<circle cx="25.3" cy="217.7" r="0.8" fill="#476670" opacity=".85"/>
<circle cx="120.7" cy="397.1" r="1.0" fill="#476670" opacity=".85"/>
<circle cx="99.1" cy="390.5" r="1.4" fill="#476670" opacity=".85"/>
<circle cx="49.3" cy="328.8" r="2.0" fill="#476670" opacity=".85"/>
<circle cx="6.0" cy="214.0" r="1.4" fill="#476670" opacity=".85"/>
<circle cx="74.2" cy="331.9" r="1.8" fill="#476670" opacity=".85"/>
<circle cx="108.1" cy="383.7" r="0.9" fill="#476670" opacity=".85"/>
<circle cx="113.0" cy="374.3" r="1.3" fill="#476670" opacity=".85"/>
<circle cx="56.5" cy="221.4" r="1.5" fill="#476670" opacity=".85"/>
<circle cx="34.0" cy="214.5" r="1.4" fill="#476670" opacity=".85"/>
<circle cx="24.6" cy="224.9" r="0.9" fill="#476670" opacity=".85"/>
<circle cx="95.1" cy="345.1" r="1.6" fill="#476670" opacity=".85"/>
<circle cx="105.2" cy="389.2" r="1.3" fill="#476670" opacity=".85"/>
<circle cx="103.1" cy="401.6" r="1.2" fill="#476670" opacity=".85"/>
<circle cx="120.9" cy="386.9" r="1.9" fill="#476670" opacity=".85"/>
<circle cx="136.7" cy="396.5" r="0.9" fill="#476670" opacity=".85"/>
<circle cx="111.2" cy="368.5" r="0.8" fill="#476670" opacity=".85"/>
<circle cx="6.9" cy="248.8" r="1.7" fill="#476670" opacity=".85"/>
<circle cx="67.0" cy="341.7" r="1.0" fill="#476670" opacity=".85"/>
<circle cx="117.0" cy="404.2" r="1.5" fill="#476670" opacity=".85"/>
<circle cx="176.3" cy="407.3" r="1.4" fill="#476670" opacity=".85"/>
<circle cx="210.9" cy="419.9" r="1.7" fill="#476670" opacity=".85"/>
<circle cx="42.6" cy="211.8" r="1.9" fill="#476670" opacity=".85"/>
<circle cx="205.1" cy="417.5" r="1.7" fill="#476670" opacity=".85"/>
<circle cx="6.5" cy="238.4" r="1.2" fill="#476670" opacity=".85"/>
<circle cx="13.6" cy="276.6" r="1.4" fill="#476670" opacity=".85"/>
<circle cx="41.0" cy="242.6" r="0.8" fill="#476670" opacity=".85"/>
<circle cx="116.1" cy="400.9" r="1.3" fill="#476670" opacity=".85"/>
<circle cx="42.8" cy="266.8" r="1.1" fill="#476670" opacity=".85"/>
<circle cx="48.5" cy="349.9" r="1.8" fill="#476670" opacity=".85"/>
<circle cx="36.1" cy="331.0" r="1.1" fill="#476670" opacity=".85"/>
<circle cx="121.4" cy="398.9" r="1.4" fill="#476670" opacity=".85"/>
<circle cx="47.0" cy="215.5" r="1.6" fill="#476670" opacity=".85"/>
<circle cx="191.3" cy="429.7" r="1.9" fill="#476670" opacity=".85"/>
<circle cx="17.7" cy="289.7" r="1.7" fill="#476670" opacity=".85"/>
<circle cx="31.9" cy="241.3" r="1.5" fill="#476670" opacity=".85"/>
<circle cx="15.4" cy="205.4" r="1.5" fill="#476670" opacity=".85"/>
<circle cx="58.6" cy="278.9" r="0.9" fill="#476670" opacity=".85"/>
<circle cx="50.8" cy="321.9" r="1.3" fill="#476670" opacity=".85"/>
<circle cx="21.9" cy="289.0" r="1.6" fill="#476670" opacity=".85"/>
<circle cx="2.1" cy="210.6" r="1.9" fill="#476670" opacity=".85"/>
<circle cx="61.4" cy="293.9" r="1.7" fill="#476670" opacity=".85"/>
<circle cx="48.2" cy="314.7" r="1.9" fill="#476670" opacity=".85"/>
<circle cx="71.6" cy="365.0" r="1.3" fill="#476670" opacity=".85"/>
<circle cx="47.4" cy="217.6" r="1.0" fill="#476670" opacity=".85"/>
<circle cx="110.2" cy="339.8" r="1.2" fill="#476670" opacity=".85"/>
<circle cx="94.6" cy="385.0" r="1.8" fill="#476670" opacity=".85"/>
<circle cx="28.2" cy="299.2" r="1.5" fill="#476670" opacity=".85"/>
<circle cx="29.9" cy="223.8" r="0.9" fill="#476670" opacity=".85"/>
<circle cx="117.6" cy="381.4" r="1.5" fill="#476670" opacity=".85"/>
<circle cx="160.0" cy="423.2" r="1.7" fill="#476670" opacity=".85"/>
<circle cx="32.1" cy="244.2" r="1.3" fill="#476670" opacity=".85"/>
<circle cx="28.3" cy="316.2" r="1.8" fill="#476670" opacity=".85"/>
<circle cx="19.4" cy="228.6" r="0.8" fill="#476670" opacity=".85"/>
<circle cx="95.1" cy="387.0" r="1.5" fill="#476670" opacity=".85"/>
<circle cx="39.1" cy="325.4" r="1.4" fill="#476670" opacity=".85"/>
<circle cx="196.2" cy="418.3" r="0.8" fill="#476670" opacity=".85"/>
<circle cx="38.4" cy="219.5" r="1.3" fill="#476670" opacity=".85"/>
<circle cx="8.1" cy="229.9" r="1.4" fill="#476670" opacity=".85"/>
<circle cx="53.1" cy="344.1" r="1.0" fill="#476670" opacity=".85"/>
<circle cx="81.1" cy="300.1" r="1.3" fill="#476670" opacity=".85"/>
<circle cx="29.0" cy="319.0" r="1.2" fill="#476670" opacity=".85"/>
<circle cx="39.4" cy="224.3" r="1.0" fill="#476670" opacity=".85"/>
<circle cx="160.2" cy="398.8" r="0.9" fill="#476670" opacity=".85"/>
<circle cx="55.1" cy="357.9" r="2.0" fill="#476670" opacity=".85"/>
<circle cx="115.9" cy="392.8" r="1.9" fill="#476670" opacity=".85"/>
<circle cx="93.4" cy="331.3" r="1.1" fill="#476670" opacity=".85"/>
<circle cx="112.2" cy="391.6" r="1.7" fill="#476670" opacity=".85"/>
<circle cx="26.8" cy="286.0" r="0.9" fill="#476670" opacity=".85"/>
<circle cx="5.1" cy="252.7" r="1.4" fill="#476670" opacity=".85"/>
<circle cx="71.8" cy="319.7" r="1.4" fill="#476670" opacity=".85"/>
<circle cx="137.1" cy="368.1" r="1.2" fill="#476670" opacity=".85"/>
<circle cx="76.7" cy="336.9" r="1.7" fill="#476670" opacity=".85"/>
<circle cx="174.5" cy="418.5" r="0.8" fill="#476670" opacity=".85"/>
<circle cx="203.5" cy="413.3" r="1.4" fill="#476670" opacity=".85"/>
<circle cx="32.7" cy="245.4" r="1.2" fill="#476670" opacity=".85"/>
<circle cx="168.0" cy="404.3" r="1.1" fill="#476670" opacity=".85"/>
<circle cx="26.1" cy="248.0" r="1.8" fill="#476670" opacity=".85"/>
<circle cx="148.4" cy="393.5" r="1.7" fill="#476670" opacity=".85"/>
<circle cx="183.6" cy="415.2" r="1.6" fill="#476670" opacity=".85"/>
<circle cx="74.9" cy="289.9" r="1.3" fill="#476670" opacity=".85"/>
<circle cx="201.2" cy="419.9" r="2.0" fill="#476670" opacity=".85"/>
<circle cx="46.6" cy="270.6" r="1.6" fill="#476670" opacity=".85"/>
<circle cx="166.3" cy="424.8" r="0.9" fill="#476670" opacity=".85"/>
<circle cx="55.1" cy="336.5" r="1.4" fill="#476670" opacity=".85"/>
<circle cx="101.4" cy="345.1" r="1.9" fill="#476670" opacity=".85"/>
<circle cx="144.1" cy="383.9" r="1.9" fill="#476670" opacity=".85"/>
<circle cx="154.2" cy="381.7" r="1.2" fill="#476670" opacity=".85"/>
<circle cx="20.1" cy="218.6" r="0.9" fill="#476670" opacity=".85"/>
<circle cx="14.3" cy="216.5" r="1.3" fill="#476670" opacity=".85"/>
<circle cx="150.2" cy="399.0" r="1.4" fill="#476670" opacity=".85"/>
<circle cx="93.1" cy="344.0" r="0.8" fill="#476670" opacity=".85"/>
<circle cx="1.3" cy="221.4" r="1.1" fill="#476670" opacity=".85"/>
<circle cx="89.8" cy="319.8" r="1.4" fill="#476670" opacity=".85"/>
<circle cx="42.5" cy="337.1" r="1.1" fill="#476670" opacity=".85"/>
<circle cx="4.5" cy="244.8" r="1.9" fill="#476670" opacity=".85"/>
<circle cx="6.0" cy="203.3" r="1.4" fill="#476670" opacity=".85"/>
<circle cx="44.6" cy="331.2" r="1.8" fill="#476670" opacity=".85"/>
<circle cx="168.1" cy="393.5" r="1.0" fill="#476670" opacity=".85"/>
<circle cx="74.7" cy="313.0" r="1.0" fill="#476670" opacity=".85"/>
<circle cx="96.0" cy="379.6" r="0.9" fill="#476670" opacity=".85"/>
<circle cx="110.8" cy="392.1" r="0.7" fill="#476670" opacity=".85"/>
<circle cx="49.8" cy="226.0" r="0.9" fill="#476670" opacity=".85"/>
<circle cx="167.5" cy="417.5" r="0.7" fill="#476670" opacity=".85"/>
<circle cx="116.7" cy="377.6" r="1.7" fill="#476670" opacity=".85"/>
<circle cx="62.9" cy="292.2" r="1.6" fill="#476670" opacity=".85"/>
<circle cx="62.3" cy="287.3" r="1.9" fill="#476670" opacity=".85"/>
<circle cx="113.0" cy="362.6" r="1.7" fill="#476670" opacity=".85"/>
<circle cx="145.7" cy="387.6" r="2.0" fill="#476670" opacity=".85"/>
<circle cx="149.5" cy="379.2" r="0.8" fill="#476670" opacity=".85"/>
<circle cx="88.6" cy="387.7" r="1.1" fill="#476670" opacity=".85"/>
<circle cx="48.8" cy="299.0" r="1.2" fill="#476670" opacity=".85"/>
<circle cx="100.9" cy="387.2" r="1.3" fill="#476670" opacity=".85"/>
<circle cx="89.3" cy="327.3" r="1.7" fill="#476670" opacity=".85"/>
<circle cx="126.6" cy="382.1" r="1.3" fill="#476670" opacity=".85"/>
<circle cx="48.3" cy="290.5" r="1.9" fill="#476670" opacity=".85"/>
<circle cx="61.8" cy="312.2" r="1.4" fill="#476670" opacity=".85"/>
<circle cx="151.9" cy="414.3" r="0.9" fill="#476670" opacity=".85"/>
<circle cx="204.6" cy="412.7" r="1.1" fill="#476670" opacity=".85"/>
<circle cx="115.0" cy="401.9" r="0.9" fill="#476670" opacity=".85"/>
<circle cx="74.2" cy="355.1" r="1.6" fill="#476670" opacity=".85"/>
<circle cx="70.4" cy="328.8" r="1.4" fill="#476670" opacity=".85"/>
<circle cx="187.0" cy="414.5" r="0.8" fill="#476670" opacity=".85"/>
<circle cx="97.9" cy="354.2" r="1.8" fill="#476670" opacity=".85"/>
<circle cx="129.7" cy="366.0" r="1.9" fill="#476670" opacity=".85"/>
<circle cx="101.6" cy="363.7" r="0.7" fill="#476670" opacity=".85"/>
<circle cx="96.8" cy="355.0" r="0.8" fill="#476670" opacity=".85"/>
<circle cx="73.7" cy="300.0" r="1.4" fill="#476670" opacity=".85"/>
<circle cx="50.3" cy="225.0" r="1.9" fill="#476670" opacity=".85"/>
<circle cx="44.4" cy="270.5" r="1.1" fill="#476670" opacity=".85"/>
<circle cx="199.6" cy="408.2" r="1.5" fill="#476670" opacity=".85"/>
<circle cx="62.0" cy="269.4" r="2.0" fill="#476670" opacity=".85"/>
<circle cx="58.2" cy="341.3" r="1.3" fill="#476670" opacity=".85"/>
<circle cx="20.1" cy="218.6" r="1.6" fill="#476670" opacity=".85"/>
<circle cx="200.5" cy="414.3" r="0.8" fill="#476670" opacity=".85"/>
<circle cx="71.7" cy="290.1" r="0.9" fill="#476670" opacity=".85"/>
<circle cx="33.5" cy="212.3" r="1.5" fill="#476670" opacity=".85"/>
<circle cx="75.1" cy="343.2" r="0.8" fill="#476670" opacity=".85"/>
<circle cx="21.3" cy="213.4" r="1.0" fill="#476670" opacity=".85"/>
<circle cx="122.4" cy="400.5" r="1.2" fill="#476670" opacity=".85"/>
<circle cx="119.0" cy="392.9" r="1.3" fill="#476670" opacity=".85"/>
<circle cx="213.5" cy="422.2" r="1.0" fill="#476670" opacity=".85"/>
<circle cx="55.8" cy="302.2" r="1.6" fill="#476670" opacity=".85"/>
<circle cx="50.8" cy="316.8" r="1.6" fill="#476670" opacity=".85"/>
<circle cx="28.0" cy="289.3" r="1.7" fill="#476670" opacity=".85"/>
<circle cx="54.8" cy="203.0" r="1.0" fill="#476670" opacity=".85"/>
<circle cx="97.8" cy="345.1" r="1.4" fill="#476670" opacity=".85"/>
<circle cx="39.4" cy="327.5" r="1.8" fill="#476670" opacity=".85"/>
<circle cx="149.5" cy="389.5" r="1.9" fill="#476670" opacity=".85"/>
<circle cx="53.5" cy="224.0" r="1.8" fill="#476670" opacity=".85"/>
<circle cx="28.2" cy="209.2" r="1.0" fill="#476670" opacity=".85"/>
<circle cx="30.1" cy="292.0" r="0.9" fill="#476670" opacity=".85"/>
<circle cx="30.4" cy="221.9" r="1.1" fill="#476670" opacity=".85"/>
<circle cx="16.6" cy="233.5" r="2.0" fill="#476670" opacity=".85"/>
<circle cx="14.2" cy="237.2" r="0.8" fill="#476670" opacity=".85"/>
<circle cx="135.6" cy="409.8" r="1.8" fill="#476670" opacity=".85"/>
<circle cx="92.8" cy="391.3" r="1.2" fill="#476670" opacity=".85"/>
<circle cx="84.1" cy="353.8" r="1.2" fill="#476670" opacity=".85"/>
<circle cx="50.4" cy="280.8" r="0.8" fill="#476670" opacity=".85"/>
<circle cx="36.8" cy="330.5" r="1.1" fill="#476670" opacity=".85"/>
<circle cx="27.7" cy="254.4" r="1.1" fill="#476670" opacity=".85"/>
<circle cx="73.8" cy="295.0" r="0.9" fill="#476670" opacity=".85"/>
<circle cx="29.9" cy="288.2" r="1.5" fill="#476670" opacity=".85"/>
<circle cx="131.1" cy="380.0" r="1.7" fill="#476670" opacity=".85"/>
<circle cx="34.9" cy="285.6" r="1.2" fill="#476670" opacity=".85"/>
<circle cx="64.8" cy="319.1" r="0.8" fill="#476670" opacity=".85"/>
<circle cx="14.3" cy="263.4" r="1.0" fill="#476670" opacity=".85"/>
<circle cx="47.7" cy="256.2" r="1.0" fill="#476670" opacity=".85"/>
<circle cx="6.3" cy="239.2" r="1.8" fill="#476670" opacity=".85"/>
<circle cx="109.8" cy="348.5" r="0.7" fill="#476670" opacity=".85"/>
<circle cx="160.7" cy="400.7" r="1.5" fill="#476670" opacity=".85"/>
<circle cx="132.9" cy="366.3" r="1.7" fill="#476670" opacity=".85"/>
<circle cx="146.4" cy="417.8" r="0.8" fill="#476670" opacity=".85"/>
<circle cx="54.9" cy="203.0" r="1.6" fill="#476670" opacity=".85"/>
<circle cx="41.5" cy="228.4" r="0.8" fill="#476670" opacity=".85"/>
<circle cx="120.7" cy="375.3" r="1.1" fill="#476670" opacity=".85"/>
<circle cx="72.6" cy="286.6" r="1.7" fill="#476670" opacity=".85"/>
<circle cx="80.4" cy="329.7" r="1.9" fill="#476670" opacity=".85"/>
<circle cx="110.9" cy="394.7" r="1.8" fill="#476670" opacity=".85"/>
<circle cx="56.5" cy="318.3" r="1.2" fill="#476670" opacity=".85"/>
<circle cx="56.3" cy="217.3" r="1.7" fill="#476670" opacity=".85"/>
<circle cx="57.5" cy="334.5" r="1.0" fill="#476670" opacity=".85"/>
<circle cx="47.1" cy="215.5" r="2.0" fill="#476670" opacity=".85"/>
<circle cx="201.9" cy="430.4" r="1.9" fill="#476670" opacity=".85"/>
<circle cx="31.5" cy="257.1" r="0.9" fill="#476670" opacity=".85"/>
<circle cx="153.0" cy="388.2" r="1.8" fill="#476670" opacity=".85"/>
<circle cx="112.8" cy="348.9" r="1.5" fill="#476670" opacity=".85"/>
<circle cx="104.1" cy="336.6" r="1.1" fill="#476670" opacity=".85"/>
<circle cx="18.0" cy="250.4" r="1.8" fill="#476670" opacity=".85"/>
<circle cx="6.6" cy="275.6" r="0.8" fill="#476670" opacity=".85"/>
<circle cx="211.0" cy="412.7" r="1.3" fill="#476670" opacity=".85"/>
<circle cx="123.9" cy="382.4" r="0.7" fill="#476670" opacity=".85"/>
<circle cx="103.0" cy="337.8" r="2.0" fill="#476670" opacity=".85"/>
<circle cx="31.5" cy="268.2" r="0.9" fill="#476670" opacity=".85"/>
<circle cx="65.7" cy="309.3" r="0.8" fill="#476670" opacity=".85"/>
<circle cx="126.2" cy="362.1" r="1.4" fill="#476670" opacity=".85"/>
<circle cx="192.1" cy="405.7" r="1.7" fill="#476670" opacity=".85"/>
<circle cx="108.1" cy="353.2" r="1.5" fill="#476670" opacity=".85"/>
<circle cx="24.8" cy="271.2" r="1.1" fill="#476670" opacity=".85"/>
<circle cx="43.2" cy="325.0" r="1.6" fill="#476670" opacity=".85"/>
<circle cx="12.7" cy="203.5" r="2.0" fill="#476670" opacity=".85"/>
<circle cx="50.3" cy="216.8" r="1.7" fill="#476670" opacity=".85"/>
<circle cx="55.7" cy="295.3" r="1.2" fill="#476670" opacity=".85"/>
<circle cx="148.4" cy="395.9" r="1.5" fill="#476670" opacity=".85"/>
<circle cx="34.0" cy="215.1" r="1.6" fill="#476670" opacity=".85"/>
<circle cx="29.2" cy="259.4" r="1.9" fill="#476670" opacity=".85"/>
<circle cx="34.9" cy="289.4" r="1.3" fill="#476670" opacity=".85"/>
<circle cx="88.4" cy="381.6" r="1.7" fill="#476670" opacity=".85"/>
<circle cx="115.6" cy="372.7" r="0.7" fill="#476670" opacity=".85"/>
<circle cx="25.7" cy="297.7" r="1.2" fill="#476670" opacity=".85"/>
<circle cx="182.0" cy="398.9" r="0.8" fill="#476670" opacity=".85"/>
<circle cx="103.8" cy="334.9" r="1.9" fill="#476670" opacity=".85"/>
<circle cx="92.0" cy="388.6" r="1.8" fill="#476670" opacity=".85"/>
<circle cx="76.7" cy="366.9" r="0.7" fill="#476670" opacity=".85"/>
<circle cx="1.4" cy="208.7" r="1.9" fill="#476670" opacity=".85"/>
<circle cx="1.3" cy="219.4" r="1.7" fill="#476670" opacity=".85"/>
<ellipse cx="71" cy="244" rx="11" ry="3.2" fill="#476670"/>
<ellipse cx="67" cy="223" rx="5" ry="3" fill="#476670"/>
<ellipse cx="95" cy="214" rx="3" ry="3" fill="#476670"/>
<polygon points="326.7,269.2 327.3,268.9 329.9,269.7 332.7,270.7 335.8,272.2 337.8,272.0 340.1,270.7 343.2,269.9 345.8,269.4 348.0,268.3 352.8,268.7 356.1,269.5 353.7,271.9 350.9,275.9 349.2,278.3 347.2,281.5 346.3,282.4 344.8,285.1 342.5,288.3 339.7,288.9 336.1,289.6 335.6,291.9 334.4,294.1 332.2,295.4 331.4,297.3 329.7,296.5 327.0,294.1 323.8,292.1 321.0,290.5 322.7,289.5 323.8,288.9 328.5,288.5 331.7,288.0 331.9,285.6 331.0,282.2 329.3,280.7 326.8,279.0 327.6,277.6 330.0,276.1 332.7,274.4 330.7,273.4 329.1,270.9 327.3,269.9" fill="#57523a"/>
<polygon points="356.9,269.8 360.1,269.8 361.7,264.7 367.7,265.2 374.9,267.1 382.2,270.8 384.7,276.8 379.8,282.9 374.9,286.6 370.1,290.0 363.8,289.6 361.3,290.6 360.4,293.0 357.9,294.7 355.2,298.2 353.8,298.8 349.7,296.4 347.7,295.4 345.9,293.0 346.6,290.9 348.9,286.1 351.4,283.8 350.4,281.7 354.0,279.9 356.5,275.9 358.5,271.9" fill="#57523a"/>
<polyline points="63.7,202.0 58.0,226.0 53.0,246.0 54.7,262.0 63.7,276.5 76.0,280.0 85.0,287.0 87.0,302.0 99.0,317.3 126.0,313.0 151.0,311.0 174.6,318.4 172.5,332.0 183.0,399.0" fill="none" stroke="#1a1a1a" stroke-width=".7"/>
<text x="109" y="313.5" font-family="Liberation Sans" font-weight="bold" font-size="6.5" fill="#c8b98a" transform="rotate(-8 109 313.5)">Argentina</text>
<text x="119" y="323.5" font-family="Liberation Sans" font-weight="bold" font-size="6.5" fill="#c8b98a" transform="rotate(-8 119 323.5)">Chile</text>
<text x="315" y="303.5" font-family="Liberation Sans" font-style="italic" font-size="6.3" fill="#c9b46a">West</text>
<text x="305" y="311.5" font-family="Liberation Sans" font-style="italic" font-size="6.3" fill="#c9b46a">Falklands</text>
<text x="341" y="306.5" font-family="Liberation Sans" font-style="italic" font-size="6.3" fill="#c9b46a">East</text>
<text x="337" y="314.5" font-family="Liberation Sans" font-style="italic" font-size="6.3" fill="#c9b46a">Falklands</text>
<rect x="0" y="0" width="429" height="200" fill="#476670"/>
<clipPath id="cu"><rect x="0" y="0" width="429" height="200"/></clipPath>
<polygon clip-path="url(#cu)" points="0.0,0.0 215.0,0.0 202.0,17.0 197.0,30.0 200.5,48.5 195.8,61.0 192.6,83.0 177.0,124.0 167.0,168.0 172.0,200.0 177.0,226.0 169.0,248.0 153.0,258.0 146.0,269.0 150.0,281.0 157.0,294.0 169.0,317.0 175.0,328.0 177.0,338.0 187.0,353.0 198.0,364.0 217.0,376.0 235.0,380.0 247.0,385.0 249.0,390.0 241.0,393.0 225.0,391.0 214.0,393.0 209.0,401.0 217.0,409.0 209.0,413.0 202.0,422.0 209.0,432.0 200.0,439.0 184.0,431.0 169.0,423.0 151.0,430.0 130.0,420.0 109.0,408.0 88.0,391.0 69.0,374.0 55.0,357.0 48.0,343.0 33.0,330.0 23.0,313.0 12.0,294.0 0.0,274.0" fill="#364b4f"/>
<polygon points="0.0,0.0 11.0,0.0 17.0,40.0 13.0,80.0 19.0,120.0 27.0,160.0 24.0,200.0 0.0,200.0" fill="#4a717b" opacity=".75"/>
<polyline points="12.2,111.7 16.5,115.3 19.4,118.3 23.8,119.4 26.7,118.9 29.4,119.3" fill="none" stroke="#4a717b" stroke-width="1.7" opacity=".85"/>
<polyline points="17.1,118.7 24.0,120.2 29.0,116.8 31.1,117.1 33.4,114.0 36.6,109.3" fill="none" stroke="#4a717b" stroke-width="1.3" opacity=".85"/>
<polyline points="11.9,167.1 17.1,167.1 22.4,166.7 25.8,171.7" fill="none" stroke="#4a717b" stroke-width="1.8" opacity=".85"/>
<polyline points="22.7,140.7 28.5,140.9 30.6,141.5 33.2,137.6 36.6,133.2" fill="none" stroke="#4a717b" stroke-width="0.8" opacity=".85"/>
<polyline points="18.5,43.8 22.8,48.6 26.8,44.4" fill="none" stroke="#4a717b" stroke-width="1.4" opacity=".85"/>
<polyline points="21.0,54.9 24.6,50.0 28.6,54.3" fill="none" stroke="#4a717b" stroke-width="0.9" opacity=".85"/>
<polyline points="19.1,4.1 25.1,0.9 29.9,0.4 32.8,2.7 35.5,4.2 38.1,3.4" fill="none" stroke="#4a717b" stroke-width="1.0" opacity=".85"/>
<polyline points="7.3,192.3 14.3,187.5 17.2,192.5 22.2,193.2 24.4,189.7" fill="none" stroke="#4a717b" stroke-width="1.2" opacity=".85"/>
<polyline points="0.3,121.6 4.2,117.4 7.2,118.7 9.3,117.4 14.4,113.7" fill="none" stroke="#4a717b" stroke-width="1.4" opacity=".85"/>
<polyline points="22.5,28.6 25.4,25.1 31.9,28.3 35.2,25.2 40.9,29.6 43.9,34.1" fill="none" stroke="#4a717b" stroke-width="1.7" opacity=".85"/>
<polyline points="16.3,84.6 18.8,84.7 22.1,87.1" fill="none" stroke="#4a717b" stroke-width="1.2" opacity=".85"/>
<polyline points="11.4,179.3 14.8,176.1 20.4,171.8 23.6,172.4 29.8,173.5 33.2,177.7" fill="none" stroke="#4a717b" stroke-width="1.0" opacity=".85"/>
<polyline points="0.4,54.8 3.7,50.2 7.1,50.5 14.0,46.5 16.7,46.0 20.3,48.3" fill="none" stroke="#4a717b" stroke-width="1.3" opacity=".85"/>
<polyline points="25.6,117.6 29.9,116.2 33.5,111.5" fill="none" stroke="#4a717b" stroke-width="1.4" opacity=".85"/>
<polyline points="2.0,15.2 5.6,20.2 8.0,20.6 13.7,24.6 19.4,26.7" fill="none" stroke="#4a717b" stroke-width="1.6" opacity=".85"/>
<polyline points="24.7,71.0 31.2,74.7 35.3,77.6 41.6,78.3 46.7,77.1 51.7,78.2" fill="none" stroke="#4a717b" stroke-width="0.9" opacity=".85"/>
<polyline points="17.3,196.7 22.9,195.6 28.6,196.4 32.8,199.8 35.2,202.3 37.4,203.3" fill="none" stroke="#4a717b" stroke-width="1.3" opacity=".85"/>
<polyline points="6.2,138.9 12.1,140.5 16.5,144.4 20.4,140.9 25.4,141.1 31.2,139.5" fill="none" stroke="#4a717b" stroke-width="1.7" opacity=".85"/>
<polyline points="13.5,49.3 18.8,46.3 22.9,49.4 29.5,53.2 33.4,54.0 37.0,50.4" fill="none" stroke="#4a717b" stroke-width="1.3" opacity=".85"/>
<polyline points="22.6,168.3 29.4,166.1 32.2,165.6" fill="none" stroke="#4a717b" stroke-width="1.1" opacity=".85"/>
<polyline points="5.8,83.1 11.1,85.3 17.4,86.6 21.0,89.8 24.3,90.9 29.7,88.7" fill="none" stroke="#4a717b" stroke-width="1.2" opacity=".85"/>
<polyline points="17.5,112.6 21.6,109.5 27.4,107.1 33.3,110.1" fill="none" stroke="#4a717b" stroke-width="1.8" opacity=".85"/>
<polyline points="3.1,23.4 9.9,25.2 12.9,25.0 15.8,20.1 20.2,22.2" fill="none" stroke="#4a717b" stroke-width="1.0" opacity=".85"/>
<polyline points="7.4,69.8 11.3,72.7 17.9,68.6 24.5,70.8" fill="none" stroke="#4a717b" stroke-width="0.9" opacity=".85"/>
<polyline points="12.2,124.6 16.1,125.3 22.5,128.3" fill="none" stroke="#4a717b" stroke-width="1.7" opacity=".85"/>
<polyline points="12.5,129.7 15.0,133.3 21.0,137.6 23.6,135.0" fill="none" stroke="#4a717b" stroke-width="1.2" opacity=".85"/>
<polyline points="2.4,62.7 5.7,64.9 7.8,65.0 9.9,63.4 14.1,61.1" fill="none" stroke="#4a717b" stroke-width="1.7" opacity=".85"/>
<polyline points="5.9,172.0 11.9,168.8 15.6,171.6 18.3,168.1 22.9,170.4 29.1,172.3" fill="none" stroke="#4a717b" stroke-width="1.7" opacity=".85"/>
<polyline points="13.3,188.0 19.1,187.4 23.9,190.7" fill="none" stroke="#4a717b" stroke-width="1.4" opacity=".85"/>
<polyline points="4.4,102.8 8.0,101.6 14.2,105.6 17.3,109.1 24.1,109.4" fill="none" stroke="#4a717b" stroke-width="1.4" opacity=".85"/>
<polyline points="5.4,107.0 10.5,102.3 17.3,102.5" fill="none" stroke="#4a717b" stroke-width="1.2" opacity=".85"/>
<polyline points="21.6,112.3 24.1,109.0 30.7,108.6 37.4,111.6 41.4,109.0 45.8,107.4" fill="none" stroke="#4a717b" stroke-width="1.7" opacity=".85"/>
<polyline points="25.3,182.3 27.8,181.5 30.0,179.1 35.5,183.9 37.6,180.4" fill="none" stroke="#4a717b" stroke-width="0.8" opacity=".85"/>
<polyline points="7.7,143.8 12.8,139.9 18.4,136.1 23.0,133.6" fill="none" stroke="#4a717b" stroke-width="1.0" opacity=".85"/>
<polyline points="132.6,235.2 138.6,237.6 142.8,239.8" fill="none" stroke="#4e7884" stroke-width="1.4" opacity=".8"/>
<polyline points="45.3,202.4 47.0,204.5 48.8,209.8 50.1,214.5 51.5,218.4" fill="none" stroke="#4e7884" stroke-width="1.0" opacity=".8"/>
<polyline points="3.7,216.2 7.2,215.8 13.2,221.4 14.7,223.4 16.4,224.6" fill="none" stroke="#4e7884" stroke-width="1.2" opacity=".8"/>
<polyline points="10.2,241.9 13.2,243.8 17.2,246.2" fill="none" stroke="#4e7884" stroke-width="1.0" opacity=".8"/>
<polyline points="192.5,429.5 194.8,435.1 200.2,436.8 202.7,437.5 205.4,439.1" fill="none" stroke="#4e7884" stroke-width="1.2" opacity=".8"/>
<polyline points="152.3,243.8 157.4,245.8 161.0,246.4 164.1,248.1" fill="none" stroke="#4e7884" stroke-width="1.3" opacity=".8"/>
<polyline points="7.3,266.4 11.3,270.5 14.9,272.1 17.6,274.3" fill="none" stroke="#4e7884" stroke-width="1.3" opacity=".8"/>
<polyline points="170.3,257.9 173.6,260.7 175.5,265.1" fill="none" stroke="#4e7884" stroke-width="0.9" opacity=".8"/>
<polyline points="182.2,388.7 184.4,387.8 185.6,391.1" fill="none" stroke="#4e7884" stroke-width="1.5" opacity=".8"/>
<polyline points="198.7,319.3 204.3,324.5 208.7,325.5" fill="none" stroke="#4e7884" stroke-width="0.8" opacity=".8"/>
<polyline points="156.1,319.0 160.2,319.9 165.9,325.1 167.7,326.2" fill="none" stroke="#4e7884" stroke-width="1.4" opacity=".8"/>
<polyline points="140.2,251.9 143.8,251.1 144.9,250.3 148.6,251.1" fill="none" stroke="#4e7884" stroke-width="0.8" opacity=".8"/>
<polyline points="51.3,211.1 55.3,216.4 60.2,219.5 63.0,221.1" fill="none" stroke="#4e7884" stroke-width="1.3" opacity=".8"/>
<polyline points="112.1,206.0 113.9,205.2 115.1,204.7 118.1,205.1 123.8,209.7" fill="none" stroke="#4e7884" stroke-width="1.3" opacity=".8"/>
<polyline points="37.6,265.1 42.0,267.5 46.1,268.0 50.1,271.8 54.0,271.3" fill="none" stroke="#4e7884" stroke-width="1.0" opacity=".8"/>
<polyline points="136.6,369.9 141.1,374.2 145.4,379.8 148.2,379.0" fill="none" stroke="#4e7884" stroke-width="1.1" opacity=".8"/>
<polyline points="88.3,243.8 92.3,246.0 97.7,245.7 99.8,251.4 102.6,256.4" fill="none" stroke="#4e7884" stroke-width="1.3" opacity=".8"/>
<polyline points="66.2,318.7 70.2,323.6 72.5,325.8 77.7,330.6" fill="none" stroke="#4e7884" stroke-width="0.9" opacity=".8"/>
<polyline points="71.8,273.6 75.2,278.2 76.9,280.6" fill="none" stroke="#4e7884" stroke-width="1.0" opacity=".8"/>
<polyline points="72.6,297.2 76.6,298.9 82.0,304.2 84.6,304.1 88.8,309.0" fill="none" stroke="#4e7884" stroke-width="1.2" opacity=".8"/>
<polyline points="156.1,298.1 160.4,299.5 165.2,301.9 170.9,306.6 172.8,311.1" fill="none" stroke="#4e7884" stroke-width="1.4" opacity=".8"/>
<polyline points="21.8,264.4 27.2,268.0 31.9,272.0" fill="none" stroke="#4e7884" stroke-width="1.5" opacity=".8"/>
<polyline points="182.1,381.6 187.3,382.1 192.7,381.2 195.2,380.3" fill="none" stroke="#4e7884" stroke-width="0.8" opacity=".8"/>
<polyline points="59.0,246.3 63.9,249.1 65.0,254.5" fill="none" stroke="#4e7884" stroke-width="1.0" opacity=".8"/>
<polyline points="99.1,248.7 102.8,252.2 107.8,254.8" fill="none" stroke="#4e7884" stroke-width="1.2" opacity=".8"/>
<polyline points="77.3,298.7 78.4,303.6 79.6,303.7 84.3,305.2 85.9,310.1" fill="none" stroke="#4e7884" stroke-width="1.3" opacity=".8"/>
<polyline points="74.6,218.7 77.4,219.4 80.5,224.0" fill="none" stroke="#4e7884" stroke-width="1.4" opacity=".8"/>
<polyline points="136.6,333.6 142.4,337.8 148.2,337.0 150.3,342.5 153.7,342.9" fill="none" stroke="#4e7884" stroke-width="1.3" opacity=".8"/>
<polyline points="84.3,328.5 89.3,330.3 93.6,331.6 94.9,336.2" fill="none" stroke="#4e7884" stroke-width="1.2" opacity=".8"/>
<polyline points="27.2,266.7 29.3,269.1 34.0,273.9" fill="none" stroke="#4e7884" stroke-width="1.3" opacity=".8"/>
<polyline points="67.6,290.9 70.3,296.1 74.5,299.5 75.8,300.9" fill="none" stroke="#4e7884" stroke-width="0.9" opacity=".8"/>
<polyline points="132.6,304.6 134.8,306.5 136.4,310.7 140.5,310.9" fill="none" stroke="#4e7884" stroke-width="1.1" opacity=".8"/>
<polyline points="118.6,336.5 121.3,338.1 126.8,343.5 132.5,346.7" fill="none" stroke="#4e7884" stroke-width="0.8" opacity=".8"/>
<polyline points="187.1,346.6 189.9,352.2 192.4,353.5 196.7,355.3 200.2,358.8" fill="none" stroke="#4e7884" stroke-width="0.8" opacity=".8"/>
<polyline points="133.6,225.6 135.5,228.0 136.9,229.1 141.9,229.7" fill="none" stroke="#4e7884" stroke-width="0.8" opacity=".8"/>
<polyline points="136.9,245.7 141.1,249.2 145.0,251.5 150.8,253.8" fill="none" stroke="#4e7884" stroke-width="1.4" opacity=".8"/>
<polyline points="78.0,310.4 80.3,315.7 82.3,318.9 87.2,321.3" fill="none" stroke="#4e7884" stroke-width="1.2" opacity=".8"/>
<polyline points="67.6,295.0 68.7,300.2 73.7,301.9" fill="none" stroke="#4e7884" stroke-width="1.5" opacity=".8"/>
<polyline points="166.5,300.1 168.4,302.0 173.6,302.0 176.8,304.7" fill="none" stroke="#4e7884" stroke-width="0.9" opacity=".8"/>
<polyline points="109.8,321.3 113.8,326.9 115.5,327.5 120.8,332.8" fill="none" stroke="#4e7884" stroke-width="1.4" opacity=".8"/>
<polyline points="105.1,287.5 106.8,288.0 112.0,287.7" fill="none" stroke="#4e7884" stroke-width="0.9" opacity=".8"/>
<polyline points="88.3,316.1 90.2,320.9 95.4,324.4 98.6,323.6 102.0,325.1" fill="none" stroke="#4e7884" stroke-width="1.0" opacity=".8"/>
<polyline points="103.9,332.9 106.9,331.9 110.4,333.8 112.1,335.2 113.5,338.9" fill="none" stroke="#4e7884" stroke-width="0.9" opacity=".8"/>
<polyline points="62.0,271.8 67.0,276.0 70.6,280.5 75.0,285.6" fill="none" stroke="#4e7884" stroke-width="1.2" opacity=".8"/>
<polyline points="72.3,268.8 76.6,273.6 78.1,278.3" fill="none" stroke="#4e7884" stroke-width="0.8" opacity=".8"/>
<polyline points="100.2,241.1 105.3,246.1 111.2,246.6 114.2,250.3 116.6,253.3" fill="none" stroke="#4e7884" stroke-width="1.3" opacity=".8"/>
<polyline points="149.6,394.0 152.0,398.3 155.2,398.5" fill="none" stroke="#4e7884" stroke-width="0.7" opacity=".8"/>
<polyline points="123.8,285.4 127.9,287.0 130.7,286.3" fill="none" stroke="#4e7884" stroke-width="0.9" opacity=".8"/>
<polyline points="173.5,346.9 179.0,348.0 184.4,349.2 190.1,348.6 192.7,354.1" fill="none" stroke="#4e7884" stroke-width="1.2" opacity=".8"/>
<polyline points="140.6,249.6 142.0,255.3 146.1,259.5" fill="none" stroke="#4e7884" stroke-width="1.5" opacity=".8"/>
<polyline points="196.4,281.3 201.3,283.4 206.8,284.6 208.1,290.3" fill="none" stroke="#4e7884" stroke-width="1.4" opacity=".8"/>
<polyline points="131.4,313.8 136.7,317.2 141.8,320.9" fill="none" stroke="#4e7884" stroke-width="1.1" opacity=".8"/>
<polyline points="160.8,240.2 165.1,242.5 170.0,246.4" fill="none" stroke="#4e7884" stroke-width="1.5" opacity=".8"/>
<polyline points="168.3,360.0 172.7,362.7 177.3,368.6 178.9,372.1 180.9,372.9" fill="none" stroke="#4e7884" stroke-width="0.8" opacity=".8"/>
<line x1="0" y1="200" x2="429" y2="200" stroke="#6d8a90" stroke-width=".8" opacity=".7"/>
<polyline points="54.7,244.0 90.7,305.0 99.0,317.0 117.8,340.5 147.0,374.0 178.8,403.6 231.0,434.0" fill="none" stroke="#5fcbd8" stroke-width="1.4" stroke-dasharray="1.3 1.7"/>
<polyline points="102.0,200.0 107.0,211.0 119.0,237.0 145.0,290.0 168.0,317.0 199.8,357.0 275.0,422.0" fill="none" stroke="#5fcbd8" stroke-width="1.4" stroke-dasharray="1.3 1.7"/>
<polyline points="169.0,202.0 171.6,210.0 188.0,273.0 236.7,336.0 326.8,418.0" fill="none" stroke="#5fcbd8" stroke-width="1.4" stroke-dasharray="1.3 1.7"/>
<polyline points="374.0,289.0 395.6,418.0" fill="none" stroke="#5fcbd8" stroke-width="1.4" stroke-dasharray="1.3 1.7"/>
<polyline points="46.7,33.9 46.7,313.0 85.0,313.0" fill="none" stroke="#25282a" stroke-width="2.4" opacity=".55"/>
<polyline points="52.0,57.0 52.0,305.3 94.6,305.3" fill="none" stroke="#25282a" stroke-width="2.4" opacity=".55"/>
<polyline points="65.0,80.0 65.0,263.0 86.7,263.0" fill="none" stroke="#25282a" stroke-width="2.4" opacity=".55"/>
<polyline points="104.6,122.0 104.6,298.0 151.0,298.0" fill="none" stroke="#25282a" stroke-width="2.4" opacity=".55"/>
<polyline points="148.0,145.6 148.0,240.7" fill="none" stroke="#25282a" stroke-width="2.4" opacity=".55"/>
<polyline points="159.3,169.4 159.3,240.7" fill="none" stroke="#25282a" stroke-width="2.4" opacity=".55"/>
<polyline points="171.5,192.5 171.5,215.0" fill="none" stroke="#25282a" stroke-width="2.4" opacity=".55"/>
<polyline points="116.0,207.0 116.0,256.6 186.7,256.6" fill="none" stroke="#25282a" stroke-width="2.4" opacity=".55"/>
<polyline points="178.5,300.0 178.5,332.0 159.0,332.0" fill="none" stroke="#25282a" stroke-width="2.4" opacity=".55"/>
<polyline points="186.7,338.7 186.7,375.0 176.0,375.0" fill="none" stroke="#25282a" stroke-width="2.4" opacity=".55"/>
<polyline points="194.5,362.8 194.5,373.0 279.8,373.0" fill="none" stroke="#25282a" stroke-width="2.4" opacity=".55"/>
<polyline points="209.4,385.0 214.0,379.6 268.0,379.6" fill="none" stroke="#25282a" stroke-width="2.4" opacity=".55"/>
<polyline points="193.7,402.0 193.7,497.8" fill="none" stroke="#25282a" stroke-width="2.4" opacity=".55"/>
<polyline points="203.0,401.0 203.0,463.0" fill="none" stroke="#25282a" stroke-width="2.4" opacity=".55"/>
<polyline points="129.3,346.8 46.3,346.8 46.3,499.7" fill="none" stroke="#25282a" stroke-width="2.4" opacity=".55"/>
<polyline points="141.0,355.0 58.9,355.0 58.9,467.0" fill="none" stroke="#25282a" stroke-width="2.4" opacity=".55"/>
<polyline points="140.0,366.8 96.7,366.8 96.7,428.9" fill="none" stroke="#25282a" stroke-width="2.4" opacity=".55"/>
<polyline points="284.0,258.3 284.0,283.9 360.0,283.9" fill="none" stroke="#25282a" stroke-width="2.4" opacity=".55"/>
<polyline points="400.5,33.3 400.5,263.0 394.0,274.0" fill="none" stroke="#25282a" stroke-width="2.4" opacity=".55"/>
<polyline points="392.6,65.0 392.6,258.4 379.5,278.4" fill="none" stroke="#25282a" stroke-width="2.4" opacity=".55"/>
<polyline points="381.6,103.0 381.6,248.0 368.4,268.0" fill="none" stroke="#25282a" stroke-width="2.4" opacity=".55"/>
<polyline points="46.7,33.9 46.7,313.0 85.0,313.0" fill="none" stroke="#e8e5dc" stroke-width="1.6"/>
<polyline points="52.0,57.0 52.0,305.3 94.6,305.3" fill="none" stroke="#e8e5dc" stroke-width="1.6"/>
<polyline points="65.0,80.0 65.0,263.0 86.7,263.0" fill="none" stroke="#e8e5dc" stroke-width="1.6"/>
<polyline points="104.6,122.0 104.6,298.0 151.0,298.0" fill="none" stroke="#e8e5dc" stroke-width="1.6"/>
<polyline points="148.0,145.6 148.0,240.7" fill="none" stroke="#e8e5dc" stroke-width="1.6"/>
<polyline points="159.3,169.4 159.3,240.7" fill="none" stroke="#e8e5dc" stroke-width="1.6"/>
<polyline points="171.5,192.5 171.5,215.0" fill="none" stroke="#e8e5dc" stroke-width="1.6"/>
<polyline points="116.0,207.0 116.0,256.6 186.7,256.6" fill="none" stroke="#e8e5dc" stroke-width="1.6"/>
<polyline points="178.5,300.0 178.5,332.0 159.0,332.0" fill="none" stroke="#e8e5dc" stroke-width="1.6"/>
<polyline points="186.7,338.7 186.7,375.0 176.0,375.0" fill="none" stroke="#e8e5dc" stroke-width="1.6"/>
<polyline points="194.5,362.8 194.5,373.0 279.8,373.0" fill="none" stroke="#e8e5dc" stroke-width="1.6"/>
<polyline points="209.4,385.0 214.0,379.6 268.0,379.6" fill="none" stroke="#e8e5dc" stroke-width="1.6"/>
<polyline points="193.7,402.0 193.7,497.8" fill="none" stroke="#e8e5dc" stroke-width="1.6"/>
<polyline points="203.0,401.0 203.0,463.0" fill="none" stroke="#e8e5dc" stroke-width="1.6"/>
<polyline points="129.3,346.8 46.3,346.8 46.3,499.7" fill="none" stroke="#e8e5dc" stroke-width="1.6"/>
<polyline points="141.0,355.0 58.9,355.0 58.9,467.0" fill="none" stroke="#e8e5dc" stroke-width="1.6"/>
<polyline points="140.0,366.8 96.7,366.8 96.7,428.9" fill="none" stroke="#e8e5dc" stroke-width="1.6"/>
<polyline points="284.0,258.3 284.0,283.9 360.0,283.9" fill="none" stroke="#e8e5dc" stroke-width="1.6"/>
<polyline points="400.5,33.3 400.5,263.0 394.0,274.0" fill="none" stroke="#e8e5dc" stroke-width="1.6"/>
<polyline points="392.6,65.0 392.6,258.4 379.5,278.4" fill="none" stroke="#e8e5dc" stroke-width="1.6"/>
<polyline points="381.6,103.0 381.6,248.0 368.4,268.0" fill="none" stroke="#e8e5dc" stroke-width="1.6"/>
<circle cx="85.0" cy="313.0" r="5.4" fill="#1c1c1e"/>
<line x1="82.0" y1="313.0" x2="88.0" y2="313.0" stroke="#2fd23a" stroke-width="1.5" transform="rotate(12 85.0 313.0)"/>
<circle cx="94.6" cy="305.3" r="5.4" fill="#1c1c1e"/>
<line x1="91.6" y1="305.3" x2="97.6" y2="305.3" stroke="#f0622a" stroke-width="1.5" transform="rotate(-25 94.6 305.3)"/>
<circle cx="86.7" cy="263.0" r="5.4" fill="#1c1c1e"/>
<line x1="83.7" y1="263.0" x2="89.7" y2="263.0" stroke="#f0622a" stroke-width="1.5" transform="rotate(-20 86.7 263.0)"/>
<circle cx="104.6" cy="94.7" r="5.4" fill="#1c1c1e"/>
<line x1="101.6" y1="94.7" x2="107.6" y2="94.7" stroke="#f0622a" stroke-width="1.5" transform="rotate(-15 104.6 94.7)"/>
<circle cx="104.6" cy="113.2" r="5.4" fill="#1c1c1e"/>
<line x1="101.6" y1="113.2" x2="107.6" y2="113.2" stroke="#f0622a" stroke-width="1.5" transform="rotate(-10 104.6 113.2)"/>
<circle cx="148.0" cy="240.7" r="5.4" fill="#1c1c1e"/>
<line x1="145.0" y1="240.7" x2="151.0" y2="240.7" stroke="#f0622a" stroke-width="1.5" transform="rotate(-15 148.0 240.7)"/>
<circle cx="159.3" cy="240.7" r="5.4" fill="#1c1c1e"/>
<line x1="156.3" y1="240.7" x2="162.3" y2="240.7" stroke="#f0622a" stroke-width="1.5" transform="rotate(-20 159.3 240.7)"/>
<circle cx="171.5" cy="215.0" r="5.4" fill="#1c1c1e"/>
<line x1="168.5" y1="215.0" x2="174.5" y2="215.0" stroke="#f0622a" stroke-width="1.5" transform="rotate(-20 171.5 215.0)"/>
<circle cx="116.0" cy="207.0" r="5.4" fill="#1c1c1e"/>
<line x1="113.0" y1="207.0" x2="119.0" y2="207.0" stroke="#f0622a" stroke-width="1.5" transform="rotate(-75 116.0 207.0)"/>
<circle cx="159.0" cy="332.0" r="5.4" fill="#1c1c1e"/>
<path d="M162.0 329.2L156.5 332.8L162.0 334.0" fill="none" stroke="#2fd23a" stroke-width="1.3"/>
<circle cx="129.3" cy="346.8" r="5.4" fill="#1c1c1e"/>
<path d="M126.1 348.3L132.5 345.3M128.3 344.0L130.5 349.8M130.8 343.8L131.8 346.3" fill="none" stroke="#2fd23a" stroke-width="1.3"/>
<circle cx="141.0" cy="355.0" r="5.4" fill="#1c1c1e"/>
<path d="M144.0 352.2L138.5 355.8L144.0 357.0" fill="none" stroke="#2fd23a" stroke-width="1.3"/>
<circle cx="140.0" cy="366.8" r="5.4" fill="#1c1c1e"/>
<path d="M137.5 364.0L140.0 367.1L143.0 367.1M140.0 367.1L138.5 369.8" fill="none" stroke="#2fd23a" stroke-width="1.3"/>
<circle cx="176.0" cy="375.0" r="5.4" fill="#1c1c1e"/>
<line x1="173.0" y1="375.0" x2="179.0" y2="375.0" stroke="#2fd23a" stroke-width="1.5" transform="rotate(-10 176.0 375.0)"/>
<circle cx="194.5" cy="362.8" r="5.4" fill="#1c1c1e"/>
<line x1="191.5" y1="362.8" x2="197.5" y2="362.8" stroke="#f0622a" stroke-width="1.5" transform="rotate(-10 194.5 362.8)"/>
<circle cx="209.4" cy="385.0" r="5.4" fill="#1c1c1e"/>
<line x1="206.4" y1="385.0" x2="212.4" y2="385.0" stroke="#f0622a" stroke-width="1.5" transform="rotate(-15 209.4 385.0)"/>
<circle cx="203.0" cy="401.0" r="5.4" fill="#1c1c1e"/>
<line x1="200.0" y1="401.0" x2="206.0" y2="401.0" stroke="#2fd23a" stroke-width="1.5" transform="rotate(-5 203.0 401.0)"/>
<circle cx="194.4" cy="497.8" r="5.4" fill="#1c1c1e"/>
<line x1="191.4" y1="497.8" x2="197.4" y2="497.8" stroke="#f0622a" stroke-width="1.5" transform="rotate(-80 194.4 497.8)"/>
<circle cx="194.4" cy="517.0" r="5.4" fill="#1c1c1e"/>
<line x1="191.4" y1="517.0" x2="197.4" y2="517.0" stroke="#f0622a" stroke-width="1.5" transform="rotate(-15 194.4 517.0)"/>
<circle cx="365.3" cy="272.0" r="5.4" fill="#1c1c1e"/>
<line x1="362.3" y1="272.0" x2="368.3" y2="272.0" stroke="#3aa8f0" stroke-width="1.5" transform="rotate(15 365.3 272.0)"/>
<circle cx="365.3" cy="283.6" r="5.4" fill="#1c1c1e"/>
<line x1="362.3" y1="283.6" x2="368.3" y2="283.6" stroke="#3aa8f0" stroke-width="1.5" transform="rotate(50 365.3 283.6)"/>
<circle cx="376.8" cy="282.6" r="5.4" fill="#1c1c1e"/>
<path d="M373.6 284.1L380.0 281.1M375.8 279.8L378.0 285.6M378.3 279.6L379.3 282.1" fill="none" stroke="#3aa8f0" stroke-width="1.3"/>
<circle cx="391.0" cy="277.9" r="5.4" fill="#1c1c1e"/>
<line x1="388.0" y1="277.9" x2="394.0" y2="277.9" stroke="#3aa8f0" stroke-width="1.5" transform="rotate(0 391.0 277.9)"/>
<circle cx="-22.0" cy="72.0" r="5.4" fill="#1c1c1e"/>
<line x1="-25.0" y1="72.0" x2="-19.0" y2="72.0" stroke="#3aa8f0" stroke-width="1.5" transform="rotate(0 -22.0 72.0)"/>
<circle cx="148.5" cy="296" r="2.3" fill="#fff"/><circle cx="148.5" cy="296" r="1.3" fill="#e8302a"/>
<circle cx="152.5" cy="299.5" r="2.3" fill="#fff"/><circle cx="152.5" cy="299.5" r="1.3" fill="#e8302a"/>
<circle cx="188.70000000000005" cy="397.8" r="2.3" fill="#fff"/><circle cx="188.70000000000005" cy="397.8" r="1.3" fill="#e8302a"/>
<circle cx="189.5" cy="402" r="2.3" fill="#fff"/><circle cx="189.5" cy="402" r="1.3" fill="#e8302a"/>
</svg>
<div class="a" style="left:46.0px;top:31.7px;width:114.0px;height:25.2px;background:#fff;border-left:2px solid #33b940;"></div>
<div class="a" style="left:137.7px;top:32.8px;width:21px;height:13.3px;background:#e6e6e6;border-radius:1.5px"></div>
<div class="a b" style="left:137.7px;top:34.0px;font-size:6.8px;width:21px;text-align:center;color:#222">217 ft</div>
<div class="a " style="left:137.7px;top:40.4px;font-size:6.6px;width:21px;text-align:center;color:#888">67 m</div>
<div class="a b" style="left:49.0px;top:33.0px;font-size:7.3px"><span style="color:#888;font-weight:normal">12</span> Puerto Natales</div>
<div class="a" style="left:113.0px;top:35.3px;line-height:0"><svg width="7" height="5" viewBox="0 0 7 5" style="vertical-align:0px"><path d="M0 0L3.5 2.5L0 5ZM7 0L3.5 2.5L7 5Z" fill="#e8302a"/><rect x="2.6" y="2" width="1.8" height="1" fill="#e8302a"/></svg></div>
<div class="a b" style="left:49.0px;top:40.6px;font-size:7.6px">128.10 <span class="cb">250.15</span> &nbsp;<span class="cm">[115.90]</span></div>
<div class="a b" style="left:49.0px;top:48.2px;font-size:7.6px"><span class="cb">S51°40'</span><span class="cp">14/.242</span> <span class="cb">W72°31'</span><span class="cp">41/.691</span></div>
<div class="a" style="left:52.0px;top:62.5px;width:128.4px;height:17.6px;background:#fff;border-left:2px solid #ee4a2a;"></div>
<div class="a" style="left:165.0px;top:63.5px;width:14px;height:14px;background:#e6e6e6;border-radius:1.5px"></div>
<div class="a b" style="left:165.0px;top:64.7px;font-size:6.8px;width:14px;text-align:center;color:#222">896</div>
<div class="a " style="left:165.0px;top:71.1px;font-size:6.6px;width:14px;text-align:center;color:#888">274</div>
<div class="a b" style="left:55.0px;top:63.6px;font-size:7.3px"><span style="color:#888;font-weight:normal">19</span> Rio Turbio</div>
<div class="a" style="left:104.0px;top:66.0px;line-height:0"><svg width="7" height="5" viewBox="0 0 7 5" style="vertical-align:0px"><path d="M0 0L3.5 2.5L0 5ZM7 0L3.5 2.5L7 5Z" fill="#e8302a"/><rect x="2.6" y="2" width="1.8" height="1" fill="#e8302a"/></svg></div>
<div class="a b" style="right:268.2px;top:63.6px;font-size:7.6px">118.10 <span class="cb">250.50</span></div>
<div class="a b" style="left:55.0px;top:71.4px;font-size:7.6px"><span class="cb">S51°36'</span><span class="cp">18/.303</span> <span class="cb">W72°13'</span><span class="cp">11/.190</span></div>
<div class="a" style="left:64.7px;top:85.7px;width:154.7px;height:17.3px;background:#fff;border-left:2px solid #ee4a2a;"></div>
<div class="a" style="left:204.0px;top:86.7px;width:14px;height:14px;background:#e6e6e6;border-radius:1.5px"></div>
<div class="a b" style="left:204.0px;top:87.9px;font-size:6.8px;width:14px;text-align:center;color:#222">667</div>
<div class="a " style="left:204.0px;top:94.3px;font-size:6.6px;width:14px;text-align:center;color:#888">204</div>
<div class="a b" style="left:68.0px;top:86.8px;font-size:7.3px"><span style="color:#888;font-weight:normal">13</span> El Calafate</div>
<div class="a b" style="right:230.7px;top:86.8px;font-size:7.6px">119.95 <span class="cb">250.20</span> <span class="cm">[114.70]</span></div>
<div class="a b" style="left:68.0px;top:94.5px;font-size:7.6px"><span class="cb">S50°16'</span><span class="cp">48/.814</span> <span class="cb">W72°03'</span><span class="cp">09/.164</span></div>
<div class="a" style="left:104.2px;top:108.9px;width:160.8px;height:17.1px;background:#fff;border-left:2px solid #ee4a2a;"></div>
<div class="a" style="left:251.5px;top:109.9px;width:13px;height:14px;background:#e6e6e6;border-radius:1.5px"></div>
<div class="a b" style="left:251.5px;top:111.1px;font-size:6.8px;width:13px;text-align:center;color:#222">51</div>
<div class="a " style="left:251.5px;top:117.5px;font-size:6.6px;width:13px;text-align:center;color:#888">16</div>
<div class="a b" style="left:112.0px;top:109.9px;font-size:7.3px"><span style="color:#888;font-weight:normal">4</span> Rio Gallegos</div>
<div class="a b" style="right:182.2px;top:109.9px;font-size:7.6px">119.10 <span class="cb">250.80</span> <span class="cm">[116.70]</span></div>
<div class="a b" style="left:112.0px;top:117.6px;font-size:7.6px"><span class="cb">S51°36'</span><span class="cp">31/.531</span> <span class="cb">W69°18'</span><span class="cp">44/.736</span></div>
<div class="a" style="left:104.2px;top:127.8px;width:160.8px;height:17.2px;background:#e9f0f8;border-left:2px solid #ee4a2a;"></div>
<div class="a" style="left:251.5px;top:128.8px;width:13px;height:14px;background:#e6e6e6;border-radius:1.5px"></div>
<div class="a b" style="left:251.5px;top:130.0px;font-size:6.8px;width:13px;text-align:center;color:#222">75</div>
<div class="a " style="left:251.5px;top:136.4px;font-size:6.6px;width:13px;text-align:center;color:#888">23</div>
<div class="a" style="left:238px;top:129.5px;width:13px;height:13.5px;background:#1f5ba6;border-radius:2px"></div>
<div class="a" style="left:239.70000000000005px;top:131.3px;width:9.6px;height:9.6px;border:1px solid #fff;border-radius:50%;color:#fff;font-size:7px;font-weight:bold;line-height:7.8px;text-align:center">H</div>
<div class="a b" style="left:112.0px;top:128.8px;font-size:7.3px"><span style="color:#888;font-weight:normal">20</span> Rio Chico</div>
<div class="a" style="left:158.5px;top:131.2px;line-height:0"><svg width="7" height="5" viewBox="0 0 7 5" style="vertical-align:0px"><path d="M0 0L3.5 2.5L0 5ZM7 0L3.5 2.5L7 5Z" fill="#e8302a"/><rect x="2.6" y="2" width="1.8" height="1" fill="#e8302a"/></svg></div>
<div class="a b" style="right:212.7px;top:128.8px;font-size:7.6px">118.20 <span class="cb">250.55</span></div>
<div class="a b" style="left:112.0px;top:136.5px;font-size:7.6px"><span class="cb">S51°40'</span><span class="cp">08/.143</span> <span class="cb">W69°15'</span><span class="cp">57/.963</span></div>
<div class="a" style="left:148.0px;top:151.4px;width:178.7px;height:17.2px;background:#fff;border-left:2px solid #ee4a2a;"></div>
<div class="a" style="left:311.0px;top:152.4px;width:14px;height:14px;background:#e6e6e6;border-radius:1.5px"></div>
<div class="a b" style="left:311.0px;top:153.6px;font-size:6.8px;width:14px;text-align:center;color:#222">70</div>
<div class="a " style="left:311.0px;top:160.0px;font-size:6.6px;width:14px;text-align:center;color:#888">22</div>
<div class="a b" style="left:151.0px;top:152.5px;font-size:7.3px"><span style="color:#888;font-weight:normal">15</span> Comandante Luis Piedrabuena</div>
<div class="a" style="left:273.0px;top:154.8px;line-height:0"><svg width="7" height="5" viewBox="0 0 7 5" style="vertical-align:0px"><path d="M0 0L3.5 2.5L0 5ZM7 0L3.5 2.5L7 5Z" fill="#e8302a"/><rect x="2.6" y="2" width="1.8" height="1" fill="#e8302a"/></svg></div>
<div class="a b" style="right:122.0px;top:152.5px;font-size:7.6px">122.10</div>
<div class="a b" style="right:122.0px;top:160.2px;font-size:7.6px"><span class="cb">250.30</span></div>
<div class="a b" style="left:151.0px;top:160.2px;font-size:7.6px"><span class="cb">S49°59'</span><span class="cp">41/.700</span> <span class="cb">W68°57'</span><span class="cp">05/.084</span></div>
<div class="a" style="left:159.3px;top:174.5px;width:146.7px;height:17.9px;background:#fff;border-left:2px solid #ee4a2a;"></div>
<div class="a" style="left:290.5px;top:175.5px;width:14px;height:14px;background:#e6e6e6;border-radius:1.5px"></div>
<div class="a b" style="left:290.5px;top:176.7px;font-size:6.8px;width:14px;text-align:center;color:#222">364</div>
<div class="a " style="left:290.5px;top:183.1px;font-size:6.6px;width:14px;text-align:center;color:#888">111</div>
<div class="a b" style="left:162.5px;top:175.6px;font-size:7.3px"><span style="color:#888;font-weight:normal">14</span> Puerto Santa Cruz</div>
<div class="a b" style="right:143.4px;top:175.6px;font-size:7.6px">118.60 <span class="cb">250.25</span></div>
<div class="a b" style="left:162.5px;top:183.5px;font-size:7.6px"><span class="cb">S50°01'</span><span class="cp">01/.021</span> <span class="cb">W68°34'</span><span class="cp">44/.743</span></div>
<div class="a" style="left:171.5px;top:198.0px;width:151.5px;height:17.5px;background:#fff;border-left:2px solid #ee4a2a;"></div>
<div class="a" style="left:307.5px;top:199.0px;width:14px;height:14px;background:#e6e6e6;border-radius:1.5px"></div>
<div class="a b" style="left:307.5px;top:200.2px;font-size:6.8px;width:14px;text-align:center;color:#222">144</div>
<div class="a " style="left:307.5px;top:206.6px;font-size:6.6px;width:14px;text-align:center;color:#888">44</div>
<div class="a b" style="left:174.5px;top:199.1px;font-size:7.3px"><span style="color:#888;font-weight:normal">10</span> San Julian</div>
<div class="a b" style="right:126.7px;top:199.1px;font-size:7.6px">118.05 <span class="cb">250.05</span> &nbsp;<span class="cm">[117.70]</span></div>
<div class="a b" style="left:174.5px;top:206.8px;font-size:7.6px"><span class="cb">S49°18'</span><span class="cp">24/.401</span> <span class="cb">W67°48'</span><span class="cp">09/.163</span></div>
<div class="a" style="left:276.8px;top:31.4px;width:123.0px;height:24.9px;background:#fff;border-right:2px solid #2f8fe0;"></div>
<div class="a" style="left:278.5px;top:32.4px;width:13px;height:13px;background:#e6e6e6;border-radius:1.5px"></div>
<div class="a b" style="left:278.5px;top:33.6px;font-size:6.8px;width:13px;text-align:center;color:#222">67</div>
<div class="a " style="left:278.5px;top:40.0px;font-size:6.6px;width:13px;text-align:center;color:#888">21</div>
<div class="a b" style="right:32.4px;top:32.8px;font-size:7.3px"><span style="color:#888;font-weight:normal;font-size:5px">NO DME</span> <span class="cm">[113.30]</span> &nbsp;<span style="color:#888;font-weight:normal">1</span> Port Stanley</div>
<div class="a b" style="right:32.4px;top:40.4px;font-size:7.6px">118.10 <span class="cb">250.45</span></div>
<div class="a b" style="left:324.0px;top:40.4px;font-size:7.6px"><span class="co">[305]</span></div>
<div class="a b" style="right:32.4px;top:48.0px;font-size:7.2px"><span class="cb">S51°41'</span><span class="cp">09/.154</span> <span class="cb">W57°46'</span><span class="cp">40/.670</span></div>
<div class="a" style="left:282.0px;top:50.4px;line-height:0"><svg width="7" height="5" viewBox="0 0 7 5" style="vertical-align:0px"><path d="M0 0L3.5 2.5L0 5ZM7 0L3.5 2.5L7 5Z" fill="#e8302a"/><rect x="2.6" y="2" width="1.8" height="1" fill="#e8302a"/></svg></div>
<div class="a" style="left:260.4px;top:62.0px;width:132.2px;height:26.0px;background:#fff;border-right:2px solid #2f8fe0;"></div>
<div class="a" style="left:262.0px;top:72.5px;width:14px;height:14px;background:#e6e6e6;border-radius:1.5px"></div>
<div class="a b" style="left:262.0px;top:73.7px;font-size:6.8px;width:14px;text-align:center;color:#222">243</div>
<div class="a " style="left:262.0px;top:80.1px;font-size:6.6px;width:14px;text-align:center;color:#888">74</div>
<div class="a b" style="right:39.7px;top:63.1px;font-size:7.3px">133.35 <span class="cb">250.70</span> &nbsp;<span style="color:#888;font-weight:normal">2</span> Mount Pleasant</div>
<div class="a b" style="right:39.7px;top:70.9px;font-size:7.6px"><span style="color:#888;font-weight:normal;font-size:5px">NO DME</span> <span class="cm">[114.70]</span> <span class="co">[380]</span> <i>[59X]</i></div>
<div class="a b" style="right:39.7px;top:78.7px;font-size:7.6px"><span class="cb">S51°49'</span><span class="cp">14/.240</span> <span class="cb">W58°27'</span><span class="cp">27/.464</span></div>
<div class="a" style="left:299.9px;top:93.6px;width:81.7px;height:32.4px;background:#fff;border-right:2px solid #2f8fe0;"></div>
<div class="a" style="left:301.5px;top:94.5px;width:13px;height:13px;background:#e6e6e6;border-radius:1.5px"></div>
<div class="a b" style="left:301.5px;top:95.7px;font-size:6.8px;width:13px;text-align:center;color:#222">68</div>
<div class="a " style="left:301.5px;top:102.1px;font-size:6.6px;width:13px;text-align:center;color:#888">21</div>
<div class="a b" style="right:50.4px;top:94.6px;font-size:7.6px"><span style="color:#888;font-weight:normal">3</span> San Carlos FOB</div>
<div class="a b" style="right:50.4px;top:102.3px;font-size:7.6px">134.35 <span class="cb">250.75</span></div>
<div class="a b" style="right:50.4px;top:110.0px;font-size:7.6px"><span class="cb">S51°30'</span><span class="cp">04/.077</span></div>
<div class="a b" style="right:50.4px;top:117.7px;font-size:7.6px"><span class="cb">W59°00'</span><span class="cp">17/.294</span></div>
<div class="a" style="left:313.0px;top:120.7px;line-height:0"><svg width="7" height="5" viewBox="0 0 7 5" style="vertical-align:0px"><path d="M0 0L3.5 2.5L0 5ZM7 0L3.5 2.5L7 5Z" fill="#e8302a"/><rect x="2.6" y="2" width="1.8" height="1" fill="#e8302a"/></svg></div>
<div class="a" style="left:186.7px;top:255.0px;width:79.3px;height:26.4px;background:#fff;border-left:2px solid #ee4a2a;"></div>
<div class="a" style="left:251.5px;top:256.0px;width:14px;height:14px;background:#e6e6e6;border-radius:1.5px"></div>
<div class="a b" style="left:251.5px;top:257.2px;font-size:6.8px;width:14px;text-align:center;color:#222">935</div>
<div class="a " style="left:251.5px;top:263.6px;font-size:6.6px;width:14px;text-align:center;color:#888">285</div>
<div class="a b" style="left:190.0px;top:256.3px;font-size:7.3px"><span style="color:#888;font-weight:normal">24</span> <span class="co">Hipico</span></div>
<div class="a b" style="left:228.0px;top:256.3px;font-size:7.6px"><span class="co">DIRT</span></div>
<div class="a b" style="left:190.0px;top:263.9px;font-size:7.6px"><span class="cb">S48°45'</span><span class="cp">24/.404</span></div>
<div class="a b" style="left:190.0px;top:271.7px;font-size:7.6px"><span class="cb">W70°13'</span><span class="cp">52/.877</span></div>
<div class="a" style="left:255.0px;top:274.5px;line-height:0"><svg width="7" height="5" viewBox="0 0 7 5" style="vertical-align:0px"><path d="M0 0L3.5 2.5L0 5ZM7 0L3.5 2.5L7 5Z" fill="#e8302a"/><rect x="2.6" y="2" width="1.8" height="1" fill="#e8302a"/></svg></div>
<div class="a" style="left:178.5px;top:289.8px;width:87.5px;height:33.2px;background:#fff;border-left:2px solid #33b940;"></div>
<div class="a" style="left:251.5px;top:307.5px;width:14px;height:14px;background:#e6e6e6;border-radius:1.5px"></div>
<div class="a b" style="left:251.5px;top:308.7px;font-size:6.8px;width:14px;text-align:center;color:#222">105</div>
<div class="a " style="left:251.5px;top:315.1px;font-size:6.6px;width:14px;text-align:center;color:#888">32</div>
<div class="a b" style="left:182.0px;top:291.0px;font-size:7.3px"><span style="color:#888;font-weight:normal">22</span> <span class="co">Franco Bianco</span></div>
<div class="a" style="left:255.0px;top:293.3px;line-height:0"><svg width="7" height="5" viewBox="0 0 7 5" style="vertical-align:0px"><path d="M0 0L3.5 2.5L0 5ZM7 0L3.5 2.5L7 5Z" fill="#e8302a"/><rect x="2.6" y="2" width="1.8" height="1" fill="#e8302a"/></svg></div>
<div class="a b" style="left:182.0px;top:298.7px;font-size:7.6px">128.50 <span class="cb">250.60</span></div>
<div class="a b" style="right:165.7px;top:298.7px;font-size:7.6px"><span class="co">DIRT</span></div>
<div class="a b" style="left:182.0px;top:306.4px;font-size:7.6px"><span class="cb">S52°44'</span><span class="cp">11/.195</span></div>
<div class="a b" style="left:182.0px;top:314.1px;font-size:7.6px"><span class="cb">W69°20'</span><span class="cp">01/.027</span></div>
<div class="a" style="left:186.7px;top:328.7px;width:79.3px;height:33.0px;background:#fff;border-left:2px solid #33b940;"></div>
<div class="a" style="left:251.5px;top:346.0px;width:14px;height:14px;background:#e6e6e6;border-radius:1.5px"></div>
<div class="a b" style="left:251.5px;top:347.2px;font-size:6.8px;width:14px;text-align:center;color:#222">520</div>
<div class="a " style="left:251.5px;top:353.6px;font-size:6.6px;width:14px;text-align:center;color:#888">159</div>
<div class="a b" style="left:190.0px;top:329.8px;font-size:7.3px"><span style="color:#888;font-weight:normal">9</span> Pampa Guanaco</div>
<div class="a" style="left:255.0px;top:332.2px;line-height:0"><svg width="7" height="5" viewBox="0 0 7 5" style="vertical-align:0px"><path d="M0 0L3.5 2.5L0 5ZM7 0L3.5 2.5L7 5Z" fill="#e8302a"/><rect x="2.6" y="2" width="1.8" height="1" fill="#e8302a"/></svg></div>
<div class="a b" style="left:190.0px;top:337.5px;font-size:7.6px">118.00 <span class="cb">250.00</span></div>
<div class="a b" style="left:190.0px;top:345.2px;font-size:7.6px"><span class="cb">S54°02'</span><span class="cp">59/.998</span></div>
<div class="a b" style="left:190.0px;top:352.9px;font-size:7.6px"><span class="cb">W68°48'</span><span class="cp">32/.540</span></div>
<div class="a" style="left:284.0px;top:248.0px;width:76.4px;height:33.3px;background:#fff;border-left:2px solid #2f8fe0;"></div>
<div class="a" style="left:345.0px;top:249.0px;width:13px;height:13px;background:#e6e6e6;border-radius:1.5px"></div>
<div class="a b" style="left:345.0px;top:250.2px;font-size:6.8px;width:13px;text-align:center;color:#222">61</div>
<div class="a " style="left:345.0px;top:256.6px;font-size:6.6px;width:13px;text-align:center;color:#888">19</div>
<div class="a b" style="left:287.5px;top:249.1px;font-size:7.3px"><span style="color:#888;font-weight:normal">23</span> <span class="co">Goose Green</span></div>
<div class="a b" style="left:287.5px;top:256.8px;font-size:7.6px">126.00 <span class="cb">250.65</span></div>
<div class="a b" style="left:287.5px;top:264.5px;font-size:7.6px"><span class="cb">S51°49'</span><span class="cp">11/.188</span></div>
<div class="a b" style="right:71.7px;top:264.5px;font-size:7.6px"><span class="co">DIRT</span></div>
<div class="a b" style="left:287.5px;top:272.2px;font-size:7.6px"><span class="cb">W58°58'</span><span class="cp">48/.810</span></div>
<div class="a" style="left:350.0px;top:274.6px;line-height:0"><svg width="7" height="5" viewBox="0 0 7 5" style="vertical-align:0px"><path d="M0 0L3.5 2.5L0 5ZM7 0L3.5 2.5L7 5Z" fill="#e8302a"/><rect x="2.6" y="2" width="1.8" height="1" fill="#e8302a"/></svg></div>
<div class="a" style="left:279.8px;top:363.0px;width:95.0px;height:33.3px;background:#fff;border-left:2px solid #ee4a2a;"></div>
<div class="a" style="left:360.0px;top:380.0px;width:13px;height:14px;background:#e6e6e6;border-radius:1.5px"></div>
<div class="a b" style="left:360.0px;top:381.2px;font-size:6.8px;width:13px;text-align:center;color:#222">61</div>
<div class="a " style="left:360.0px;top:387.6px;font-size:6.6px;width:13px;text-align:center;color:#888">19</div>
<div class="a b" style="left:283.0px;top:364.1px;font-size:7.3px"><span style="color:#888;font-weight:normal">5</span> Rio Grande</div>
<div class="a b" style="left:339.5px;top:364.1px;font-size:7.6px"><span class="cm">[117.30]</span></div>
<div class="a b" style="left:283.0px;top:371.8px;font-size:7.6px">118.30 <span class="cb">250.85</span></div>
<div class="a b" style="left:340.0px;top:371.8px;font-size:7.6px"><i>[31X]</i></div>
<div class="a b" style="left:283.0px;top:379.5px;font-size:7.6px"><span class="cb">S53°46'</span><span class="cp">39/.656</span></div>
<div class="a b" style="left:339.5px;top:379.5px;font-size:7.6px"><span class="co">[265]</span></div>
<div class="a b" style="left:283.0px;top:387.2px;font-size:7.6px"><span class="cb">W67°44'</span><span class="cp">59/.993</span></div>
<div class="a" style="left:268.0px;top:402.0px;width:107.0px;height:26.3px;background:#fff;border-left:2px solid #ee4a2a;"></div>
<div class="a" style="left:359.5px;top:413.0px;width:14px;height:14px;background:#e6e6e6;border-radius:1.5px"></div>
<div class="a b" style="left:359.5px;top:414.2px;font-size:6.8px;width:14px;text-align:center;color:#222">355</div>
<div class="a " style="left:359.5px;top:420.6px;font-size:6.6px;width:14px;text-align:center;color:#888">109</div>
<div class="a b" style="left:271.5px;top:403.1px;font-size:7.3px"><span style="color:#888;font-weight:normal">16</span> Aerodromo De Tolhuin</div>
<div class="a" style="left:362.5px;top:405.5px;line-height:0"><svg width="7" height="5" viewBox="0 0 7 5" style="vertical-align:0px"><path d="M0 0L3.5 2.5L0 5ZM7 0L3.5 2.5L7 5Z" fill="#e8302a"/><rect x="2.6" y="2" width="1.8" height="1" fill="#e8302a"/></svg></div>
<div class="a b" style="left:271.5px;top:410.8px;font-size:7.6px"><span class="cb">S54°29'</span><span class="cp">58/.977</span></div>
<div class="a b" style="right:74.7px;top:410.8px;font-size:7.6px">118.15</div>
<div class="a b" style="left:271.5px;top:418.5px;font-size:7.6px"><span class="cb">W67°10'</span><span class="cp">20/.342</span></div>
<div class="a b" style="right:74.7px;top:418.5px;font-size:7.6px"><span class="cb">250.35</span></div>
<div class="a" style="left:96.7px;top:451.9px;width:72.2px;height:32.8px;background:#fff;border-left:2px solid #33b940;"></div>
<div class="a" style="left:154.0px;top:453.0px;width:13px;height:13px;background:#e6e6e6;border-radius:1.5px"></div>
<div class="a b" style="left:154.0px;top:454.2px;font-size:6.8px;width:13px;text-align:center;color:#222">161</div>
<div class="a " style="left:154.0px;top:460.6px;font-size:6.6px;width:13px;text-align:center;color:#888">49</div>
<div class="a b" style="left:100.0px;top:453.1px;font-size:7.7px"><span style="color:#888;font-weight:normal">18</span> Almirante</div>
<div class="a b" style="left:100.0px;top:460.8px;font-size:7.7px">Schroeders</div>
<div class="a" style="left:145.0px;top:463.2px;line-height:0"><svg width="7" height="5" viewBox="0 0 7 5" style="vertical-align:0px"><path d="M0 0L3.5 2.5L0 5ZM7 0L3.5 2.5L7 5Z" fill="#e8302a"/><rect x="2.6" y="2" width="1.8" height="1" fill="#e8302a"/></svg></div>
<div class="a b" style="left:100.0px;top:468.5px;font-size:7.6px"><span class="cb">S53°36'</span><span class="cp">47/.784</span></div>
<div class="a b" style="left:100.0px;top:476.2px;font-size:7.6px"><span class="cb">W70°28'</span><span class="cp">30/.512</span></div>
<div class="a" style="left:59.0px;top:490.0px;width:110.0px;height:26.6px;background:#fff;border-left:2px solid #33b940;"></div>
<div class="a" style="left:154.0px;top:491.0px;width:13px;height:13px;background:#e6e6e6;border-radius:1.5px"></div>
<div class="a b" style="left:154.0px;top:492.2px;font-size:6.8px;width:13px;text-align:center;color:#222">130</div>
<div class="a " style="left:154.0px;top:498.6px;font-size:6.6px;width:13px;text-align:center;color:#888">40</div>
<div class="a b" style="left:62.0px;top:491.1px;font-size:7.3px"><span style="color:#888;font-weight:normal">17</span> Porvenir</div>
<div class="a" style="left:105.0px;top:493.5px;line-height:0"><svg width="7" height="5" viewBox="0 0 7 5" style="vertical-align:0px"><path d="M0 0L3.5 2.5L0 5ZM7 0L3.5 2.5L7 5Z" fill="#e8302a"/><rect x="2.6" y="2" width="1.8" height="1" fill="#e8302a"/></svg></div>
<div class="a b" style="right:281.7px;top:491.1px;font-size:7.6px">126.70</div>
<div class="a b" style="left:62.0px;top:498.8px;font-size:7.6px"><span class="cb">S 53°15'</span><span class="cp">13/.221</span></div>
<div class="a b" style="right:281.7px;top:498.8px;font-size:7.6px"><span class="cb">250.40</span></div>
<div class="a b" style="left:62.0px;top:506.5px;font-size:7.6px"><span class="cb">W70°19'</span><span class="cp">09/.156</span></div>
<div class="a" style="left:47.0px;top:522.7px;width:122.0px;height:25.9px;background:#fff;border-left:2px solid #33b940;"></div>
<div class="a" style="left:154.0px;top:523.7px;width:13px;height:13px;background:#e6e6e6;border-radius:1.5px"></div>
<div class="a b" style="left:154.0px;top:524.9px;font-size:6.8px;width:13px;text-align:center;color:#222">136</div>
<div class="a " style="left:154.0px;top:531.3px;font-size:6.6px;width:13px;text-align:center;color:#888">42</div>
<div class="a b" style="left:50.0px;top:523.8px;font-size:7.3px"><span style="color:#888;font-weight:normal">8</span> Punta Arenas</div>
<div class="a b" style="left:110.0px;top:523.8px;font-size:7.6px"><span class="cm">[114.10]</span></div>
<div class="a b" style="left:50.0px;top:531.5px;font-size:7.6px">118.70 <span class="cb">251.00</span></div>
<div class="a b" style="left:111.0px;top:531.5px;font-size:7.6px"><span class="co">[270]</span></div>
<div class="a b" style="left:50.0px;top:539.2px;font-size:7.6px"><span class="cb">S53°00'</span><span class="cp">19/.332</span> <span class="cb">W70°51'</span><span class="cp">24/.415</span></div>
<div class="a" style="left:203.0px;top:486.0px;width:176.0px;height:17.5px;background:#fff;border-left:2px solid #33b940;"></div>
<div class="a" style="left:363.5px;top:487.0px;width:13px;height:14px;background:#e6e6e6;border-radius:1.5px"></div>
<div class="a b" style="left:363.5px;top:488.2px;font-size:6.8px;width:13px;text-align:center;color:#222">46</div>
<div class="a " style="left:363.5px;top:494.6px;font-size:6.6px;width:13px;text-align:center;color:#888">14</div>
<div class="a b" style="left:206.5px;top:487.1px;font-size:7.3px"><span style="color:#888;font-weight:normal">11</span> Puerto Williams</div>
<div class="a" style="left:272.3px;top:489.5px;line-height:0"><svg width="7" height="5" viewBox="0 0 7 5" style="vertical-align:0px"><path d="M0 0L3.5 2.5L0 5ZM7 0L3.5 2.5L7 5Z" fill="#e8302a"/><rect x="2.6" y="2" width="1.8" height="1" fill="#e8302a"/></svg></div>
<div class="a b" style="left:281.8px;top:487.1px;font-size:7.3px">118.50</div>
<div class="a b" style="left:308.0px;top:487.1px;font-size:7.3px"><span class="cb">250.10</span></div>
<div class="a b" style="left:333.5px;top:487.1px;font-size:7.3px"><span class="cm">[114.90]</span></div>
<div class="a b" style="left:206.5px;top:494.8px;font-size:7.6px"><span class="cb">S54°55'</span><span class="cp">51/.859</span> <span class="cb">W67°37'</span><span class="cp">34/.573</span></div>
<div class="a" style="left:195.8px;top:512.0px;width:164.0px;height:17.0px;background:#fff;border-left:2px solid #ee4a2a;"></div>
<div class="a" style="left:345.0px;top:513.0px;width:13px;height:14px;background:#e6e6e6;border-radius:1.5px"></div>
<div class="a b" style="left:345.0px;top:514.2px;font-size:6.8px;width:13px;text-align:center;color:#222">42</div>
<div class="a " style="left:345.0px;top:520.6px;font-size:6.6px;width:13px;text-align:center;color:#888">13</div>
<div class="a b" style="left:202.0px;top:513.1px;font-size:7.3px"><span style="color:#888;font-weight:normal">7</span> Ushuaia Helo Port</div>
<div class="a" style="left:276.0px;top:515.5px;line-height:0"><svg width="7" height="5" viewBox="0 0 7 5" style="vertical-align:0px"><path d="M0 0L3.5 2.5L0 5ZM7 0L3.5 2.5L7 5Z" fill="#e8302a"/><rect x="2.6" y="2" width="1.8" height="1" fill="#e8302a"/></svg></div>
<div class="a b" style="left:294.0px;top:513.1px;font-size:7.3px">118.50</div>
<div class="a b" style="left:320.5px;top:513.1px;font-size:7.3px"><span class="cb">250.95</span></div>
<div class="a b" style="left:202.0px;top:520.8px;font-size:7.6px"><span class="cb">S54°49'</span><span class="cp">22/.369</span> <span class="cb">W68°18'</span><span class="cp">15/.251</span></div>
<div class="a" style="left:195.8px;top:531.0px;width:164.0px;height:17.0px;background:#fff;border-left:2px solid #ee4a2a;"></div>
<div class="a" style="left:345.0px;top:532.0px;width:13px;height:14px;background:#e6e6e6;border-radius:1.5px"></div>
<div class="a b" style="left:345.0px;top:533.2px;font-size:6.8px;width:13px;text-align:center;color:#222">61</div>
<div class="a " style="left:345.0px;top:539.6px;font-size:6.6px;width:13px;text-align:center;color:#888">19</div>
<div class="a b" style="left:202.0px;top:532.1px;font-size:7.3px"><span style="color:#888;font-weight:normal">6</span> Ushuaia</div>
<div class="a b" style="left:243.5px;top:533.1px;font-size:7.6px"><span style="color:#888;font-weight:normal;font-size:5px">NO DME</span></div>
<div class="a b" style="left:264.7px;top:532.1px;font-size:7.2px"><span class="cm">[113.70]</span></div>
<div class="a b" style="left:294.0px;top:532.1px;font-size:7.3px">118.10</div>
<div class="a b" style="left:320.5px;top:532.1px;font-size:7.3px"><span class="cb">250.90</span></div>
<div class="a b" style="left:202.0px;top:539.8px;font-size:7.6px"><span class="cb">S54°50'</span><span class="cp">35/.598</span> <span class="cb">W68°17'</span><span class="cp">45/.750</span></div>
<div class="a" style="left:189.2px;top:515.6px;width:10.4px;height:10.4px;border-radius:50%;background:#1c1c1e"></div>
<div class="a" style="left:191.4px;top:520.1px;width:6px;height:1.4px;background:#f0622a;transform:rotate(-80deg)"></div>
<div class="a" style="left:189.2px;top:534.8px;width:10.4px;height:10.4px;border-radius:50%;background:#1c1c1e"></div>
<div class="a" style="left:191.4px;top:539.3px;width:6px;height:1.4px;background:#f0622a;transform:rotate(-15deg)"></div>
<div class="a" style="left:99.4px;top:112.5px;width:10.4px;height:10.4px;border-radius:50%;background:#1c1c1e"></div>
<div class="a" style="left:101.6px;top:117.0px;width:6px;height:1.4px;background:#f0622a;transform:rotate(-15deg)"></div>
<div class="a" style="left:99.4px;top:131.0px;width:10.4px;height:10.4px;border-radius:50%;background:#1c1c1e"></div>
<div class="a" style="left:101.6px;top:135.5px;width:6px;height:1.4px;background:#f0622a;transform:rotate(-10deg)"></div>
<div class="a b" style="left:233.4px;top:455.5px;font-size:7px;color:#5cc6d6;transform:scaleX(.78);transform-origin:0 0">TRUE to MAG</div>
<div class="a " style="left:233.4px;top:463.6px;font-size:6.8px;font-weight:bold;color:#e8eef0">2022: -12°</div>
<div class="a " style="left:233.4px;top:471.2px;font-size:6.8px;color:#a9bcc0">1982: -15°</div>
<div class="a b" style="left:276.5px;top:442.5px;font-size:7px;color:#5cc6d6;transform:scaleX(.78);transform-origin:0 0">TRUE to MAG</div>
<div class="a " style="left:276.5px;top:450.6px;font-size:6.8px;font-weight:bold;color:#e8eef0">2022: -10°</div>
<div class="a " style="left:276.5px;top:458.2px;font-size:6.8px;color:#a9bcc0">1982: -13°</div>
<div class="a b" style="left:320.0px;top:438.5px;font-size:7px;color:#5cc6d6;transform:scaleX(.78);transform-origin:0 0">TRUE to MAG</div>
<div class="a " style="left:320.0px;top:446.6px;font-size:6.8px;font-weight:bold;color:#e8eef0">2022: -7°</div>
<div class="a " style="left:320.0px;top:454.2px;font-size:6.8px;color:#a9bcc0">1982: -10°</div>
<div class="a b" style="left:362.0px;top:438.5px;font-size:7px;color:#5cc6d6;transform:scaleX(.78);transform-origin:0 0">TRUE to MAG</div>
<div class="a" style="right:32.7px;top:446.6px;font-size:6.8px;font-weight:bold;color:#e8eef0;text-align:right">2022: -2°</div>
<div class="a" style="right:32.7px;top:454.2px;font-size:6.8px;color:#a9bcc0;text-align:right">1982: -5°</div>
<div class="a" style="left:29.399999999999977px;top:558.4px;width:113.4px;height:10.4px;border:.8px solid #8fa8ae;border-radius:3px;font-size:5.6px;line-height:8.8px;text-align:center;color:#a6bcc1">AERODROME NUMBER = ID (Su-25T, FC3)</div>
<div class="a" style="left:266px;top:559px;width:134.7px;height:9.6px;background:#dde3e5;border-radius:2.5px;font-size:6.9px;line-height:9.6px;letter-spacing:-.15px;text-align:center;font-weight:bold" ><span class="cb">N12°34'</span><span class="cp">56/.789</span> <span style="color:#222">=</span> <span class="cb">N12°34'</span><span class="cp">56"</span> <span style="color:#222">/</span> <span class="cb">N12°34</span><span class="cp">.789'</span></div>
<div class="a" style="left:203.60000000000002px;top:557.9px;width:21.4px;height:2.6px;border:.8px solid #b8c8cc;border-top:none"></div>
<div class="a " style="left:197.0px;top:563.5px;font-size:5.6px;color:#a9bcc0;transform:scaleX(.95);transform-origin:0 0">40 nm / 74 km</div>
</div>
</body></html>
